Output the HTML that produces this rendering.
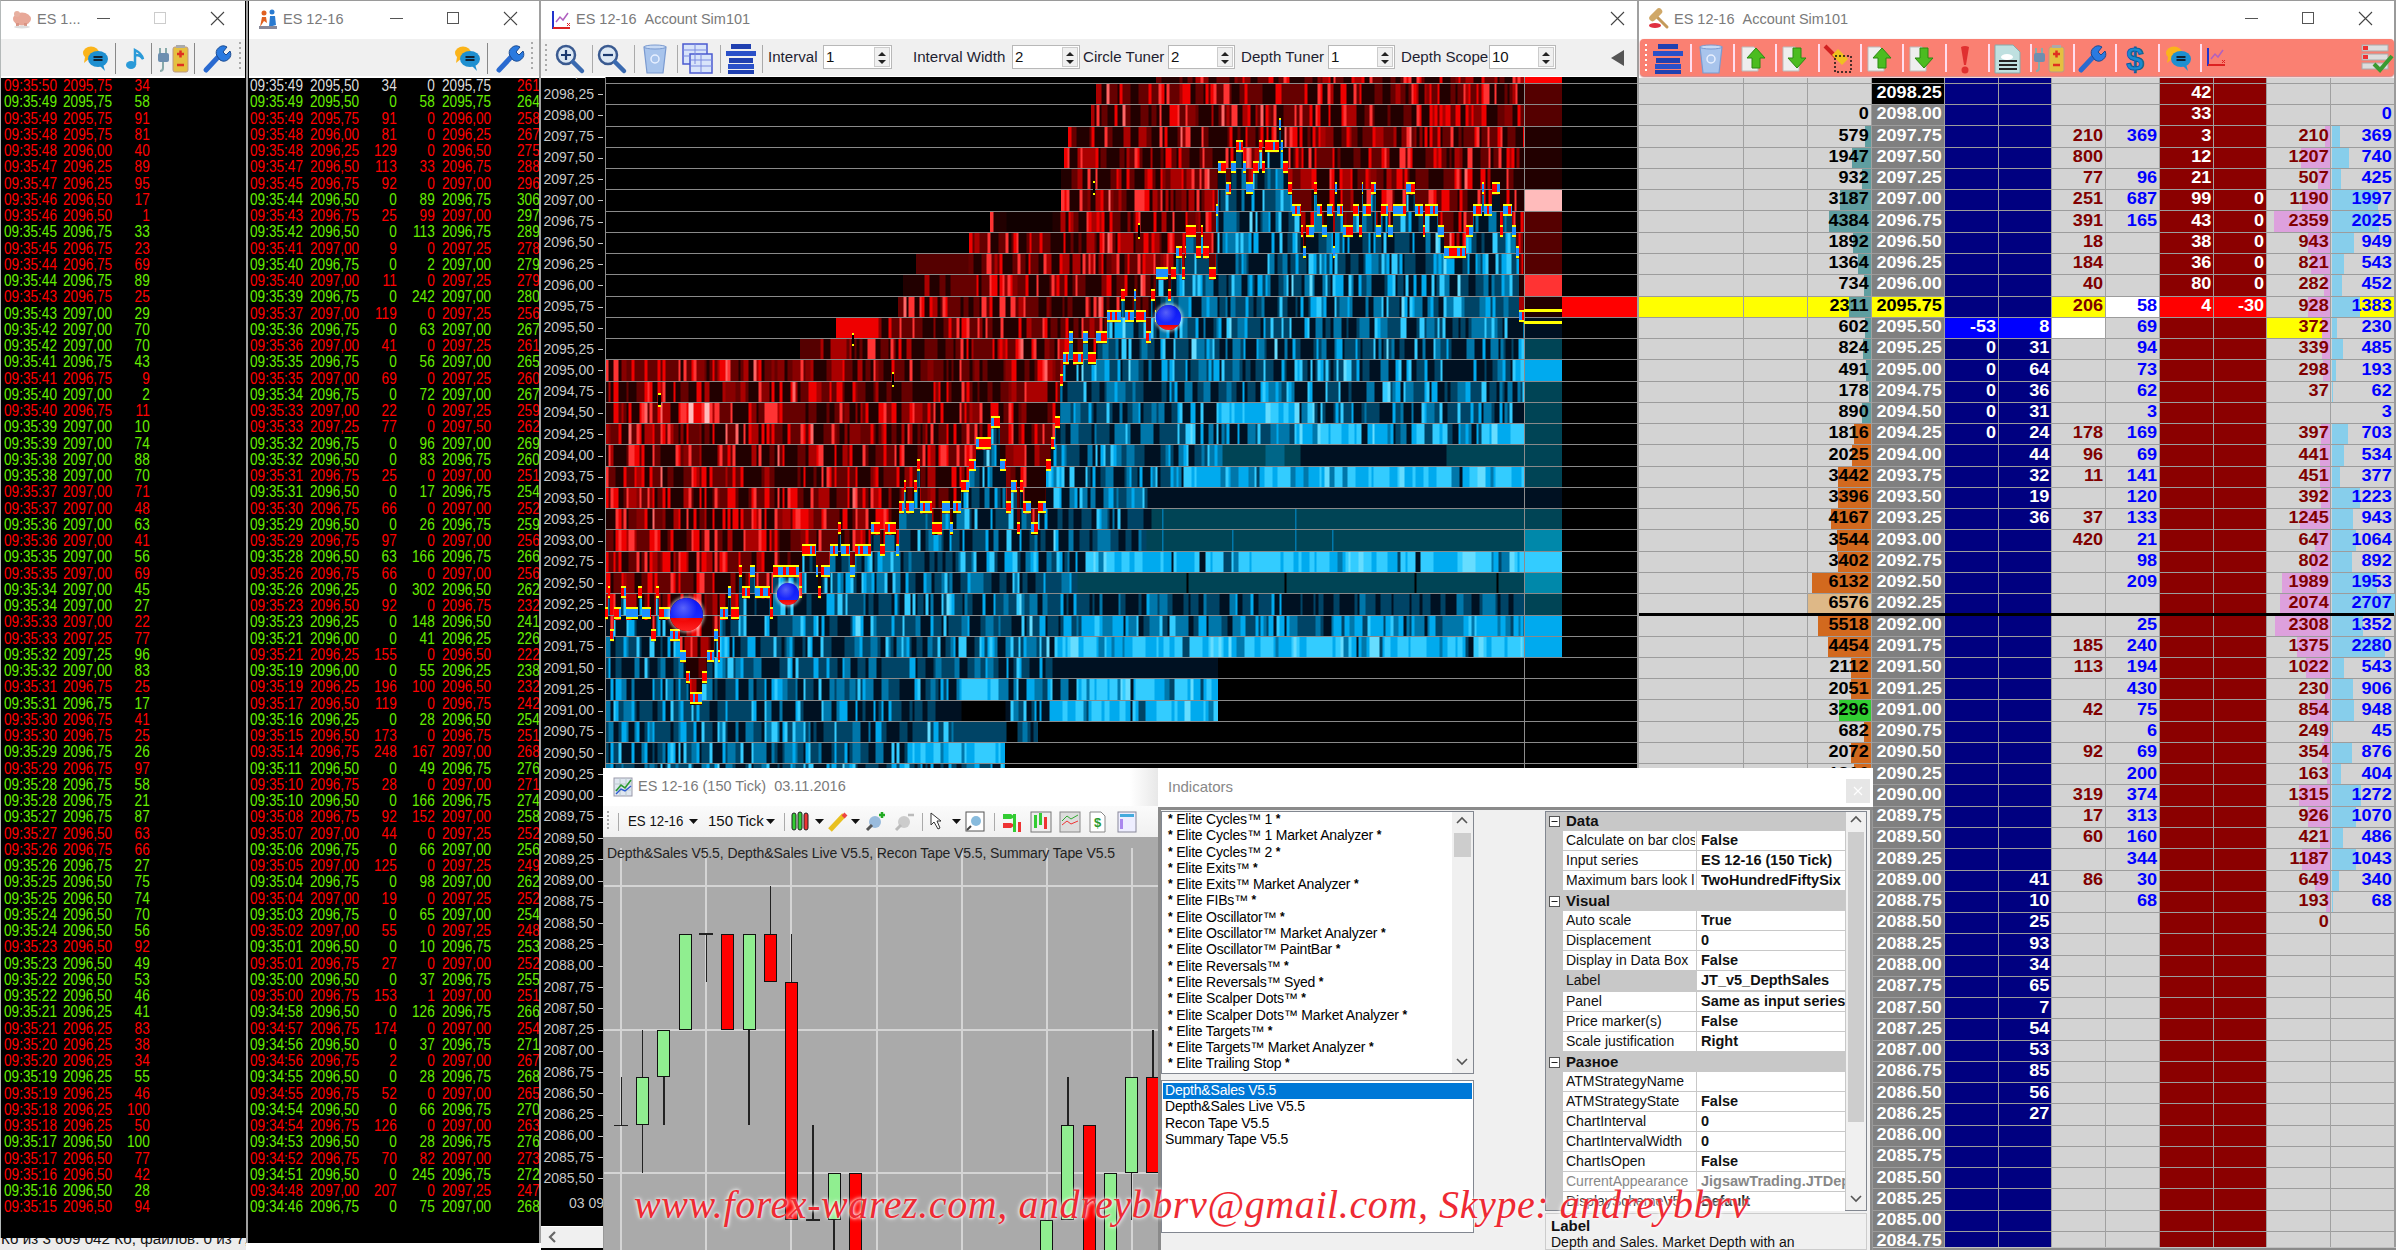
<!DOCTYPE html><html><head><meta charset="utf-8"><style>*{margin:0;padding:0;box-sizing:border-box}
body{width:2396px;height:1250px;position:relative;overflow:hidden;background:#fff;font-family:"Liberation Sans",sans-serif}
.a{position:absolute;overflow:hidden}
.t{position:absolute;white-space:pre}
.ts{font-size:16px;line-height:16.248px;transform:scaleX(.85)}
.R{color:#f00}.G{color:#6e0}.W{color:#ddd}
.tt{font-size:14.5px;color:#7a7a7a;position:absolute;white-space:pre}
.dm{font-weight:bold;font-size:17.4px;line-height:21.26px;text-align:right;position:absolute;white-space:pre}
</style></head><body><div class="a" style="left:0px;top:0px;width:246px;height:1238px;background:#000;border-left:1px solid #b4b9b9;border-top:1px solid #9a9a9a"></div>
<div class="a" style="left:1px;top:1px;width:244px;height:38px;background:#fff"></div>
<svg class="a" style="left:11px;top:9px" width="22" height="20" viewBox="0 0 22 20"><ellipse cx="11" cy="10" rx="9" ry="6.5" fill="#e8a898"/><ellipse cx="6" cy="5" rx="3" ry="3" fill="#e7b0a0"/><rect x="5" y="14" width="3" height="4" fill="#d99484"/><rect x="13" y="14" width="3" height="4" fill="#d99484"/><ellipse cx="11" cy="18" rx="8" ry="1.5" fill="#ddd"/></svg>
<div class="tt" style="left:37px;top:11px">ES 1...</div>
<div class="a" style="left:97px;top:18px;width:13px;height:1px;background:#555"></div>
<div class="a" style="left:154px;top:12px;width:12px;height:12px;border:1px solid #ccc"></div>
<svg class="a" style="left:210px;top:11px" width="15" height="15"><path d="M1 1L14 14M14 1L1 14" stroke="#444" stroke-width="1.1"/></svg>
<div class="a" style="left:1px;top:39px;width:244px;height:38.5px;background:#f0f0f0;border-bottom:2px solid #fff"></div>
<svg class="a" style="left:79px;top:44px" width="32" height="30" viewBox="0 0 32 30"><ellipse cx="12" cy="9" rx="8" ry="6.5" fill="#fbb41a"/><path d="M6 13L5 19L11 14Z" fill="#fbb41a"/><ellipse cx="19" cy="15" rx="10" ry="8" fill="#1e8fd0"/><path d="M20 21L26 27L24 20Z" fill="#1e8fd0"/><rect x="14.5" y="12" width="9" height="2" fill="#123"/><rect x="14.5" y="15" width="9" height="2" fill="#123"/></svg>
<div class="a" style="left:115px;top:43px;width:1px;height:31px;background:#888"></div>
<svg class="a" style="left:123px;top:46px" width="22" height="26" viewBox="0 0 22 26"><ellipse cx="8" cy="19" rx="5" ry="4" fill="#2a9ad8"/><path d="M12 19V4C16 6 19 8 20 13C18 10 15 9 13 9" stroke="#2a9ad8" stroke-width="2.5" fill="none"/></svg>
<div class="a" style="left:151px;top:43px;width:1px;height:31px;background:#888"></div>
<svg class="a" style="left:157px;top:44px" width="36" height="30" viewBox="0 0 36 30"><path d="M3 4V10M9 4V10" stroke="#8aa" stroke-width="2"/><rect x="1" y="9" width="11" height="9" rx="2" fill="#6d8fb0"/><path d="M6 18V24Q6 27 3 27" stroke="#8aa" stroke-width="2" fill="none"/><rect x="16" y="3" width="15" height="25" rx="2" fill="#e5c040" stroke="#b98" stroke-width="1"/><rect x="19" y="1" width="9" height="3" fill="#aaa"/><path d="M20 10H27M23.5 6.5V13.5" stroke="#e03020" stroke-width="2.5"/><path d="M20 21H27" stroke="#e03020" stroke-width="2.5"/></svg>
<div class="a" style="left:194px;top:43px;width:1px;height:31px;background:#888"></div>
<svg class="a" style="left:202px;top:44px" width="30" height="30" viewBox="0 0 30 30"><path d="M4 26L18 11" stroke="#2a6ad0" stroke-width="5" stroke-linecap="round"/><path d="M15 12A7 7 0 0 1 25 3L21 8L24 11L28 7A7 7 0 0 1 18 16Z" fill="#2a7ae0" stroke="#1a4a90" stroke-width="1"/></svg>
<div class="a" style="left:239px;top:42px;width:2px;height:2px;background:#aaa"></div><div class="a" style="left:239px;top:47px;width:2px;height:2px;background:#aaa"></div><div class="a" style="left:239px;top:52px;width:2px;height:2px;background:#aaa"></div><div class="a" style="left:239px;top:57px;width:2px;height:2px;background:#aaa"></div><div class="a" style="left:239px;top:62px;width:2px;height:2px;background:#aaa"></div><div class="a" style="left:239px;top:67px;width:2px;height:2px;background:#aaa"></div>
<div class="t ts" style="left:4px;top:78.0px;transform-origin:0 0"><span class="R">09:35:50</span><br><span class="G">09:35:49</span><br><span class="R">09:35:49</span><br><span class="R">09:35:48</span><br><span class="R">09:35:48</span><br><span class="R">09:35:47</span><br><span class="R">09:35:47</span><br><span class="R">09:35:46</span><br><span class="R">09:35:46</span><br><span class="G">09:35:45</span><br><span class="R">09:35:45</span><br><span class="R">09:35:44</span><br><span class="G">09:35:44</span><br><span class="R">09:35:43</span><br><span class="G">09:35:43</span><br><span class="G">09:35:42</span><br><span class="G">09:35:42</span><br><span class="G">09:35:41</span><br><span class="R">09:35:41</span><br><span class="G">09:35:40</span><br><span class="R">09:35:40</span><br><span class="G">09:35:39</span><br><span class="G">09:35:39</span><br><span class="G">09:35:38</span><br><span class="G">09:35:38</span><br><span class="R">09:35:37</span><br><span class="R">09:35:37</span><br><span class="G">09:35:36</span><br><span class="R">09:35:36</span><br><span class="G">09:35:35</span><br><span class="R">09:35:35</span><br><span class="G">09:35:34</span><br><span class="G">09:35:34</span><br><span class="R">09:35:33</span><br><span class="R">09:35:33</span><br><span class="G">09:35:32</span><br><span class="G">09:35:32</span><br><span class="R">09:35:31</span><br><span class="G">09:35:31</span><br><span class="R">09:35:30</span><br><span class="R">09:35:30</span><br><span class="G">09:35:29</span><br><span class="R">09:35:29</span><br><span class="G">09:35:28</span><br><span class="G">09:35:28</span><br><span class="G">09:35:27</span><br><span class="R">09:35:27</span><br><span class="R">09:35:26</span><br><span class="G">09:35:26</span><br><span class="G">09:35:25</span><br><span class="G">09:35:25</span><br><span class="G">09:35:24</span><br><span class="G">09:35:24</span><br><span class="R">09:35:23</span><br><span class="G">09:35:23</span><br><span class="G">09:35:22</span><br><span class="G">09:35:22</span><br><span class="G">09:35:21</span><br><span class="R">09:35:21</span><br><span class="R">09:35:20</span><br><span class="R">09:35:20</span><br><span class="G">09:35:19</span><br><span class="R">09:35:19</span><br><span class="R">09:35:18</span><br><span class="R">09:35:18</span><br><span class="G">09:35:17</span><br><span class="R">09:35:17</span><br><span class="R">09:35:16</span><br><span class="G">09:35:16</span><br><span class="R">09:35:15</span></div>
<div class="t ts" style="left:63px;top:78.0px;transform-origin:0 0"><span class="R">2095,75</span><br><span class="G">2095,75</span><br><span class="R">2095,75</span><br><span class="R">2095,75</span><br><span class="R">2096,00</span><br><span class="R">2096,25</span><br><span class="R">2096,25</span><br><span class="R">2096,50</span><br><span class="R">2096,50</span><br><span class="G">2096,75</span><br><span class="R">2096,75</span><br><span class="R">2096,75</span><br><span class="G">2096,75</span><br><span class="R">2096,75</span><br><span class="G">2097,00</span><br><span class="G">2097,00</span><br><span class="G">2097,00</span><br><span class="G">2096,75</span><br><span class="R">2096,75</span><br><span class="G">2097,00</span><br><span class="R">2096,75</span><br><span class="G">2097,00</span><br><span class="G">2097,00</span><br><span class="G">2097,00</span><br><span class="G">2097,00</span><br><span class="R">2097,00</span><br><span class="R">2097,00</span><br><span class="G">2097,00</span><br><span class="R">2097,00</span><br><span class="G">2097,00</span><br><span class="R">2097,00</span><br><span class="G">2097,00</span><br><span class="G">2097,00</span><br><span class="R">2097,00</span><br><span class="R">2097,25</span><br><span class="G">2097,25</span><br><span class="G">2097,00</span><br><span class="R">2096,75</span><br><span class="G">2096,75</span><br><span class="R">2096,75</span><br><span class="R">2096,75</span><br><span class="G">2096,75</span><br><span class="R">2096,75</span><br><span class="G">2096,75</span><br><span class="G">2096,75</span><br><span class="G">2096,75</span><br><span class="R">2096,50</span><br><span class="R">2096,75</span><br><span class="G">2096,75</span><br><span class="G">2096,50</span><br><span class="G">2096,50</span><br><span class="G">2096,50</span><br><span class="G">2096,50</span><br><span class="R">2096,50</span><br><span class="G">2096,50</span><br><span class="G">2096,50</span><br><span class="G">2096,50</span><br><span class="G">2096,25</span><br><span class="R">2096,25</span><br><span class="R">2096,25</span><br><span class="R">2096,25</span><br><span class="G">2096,25</span><br><span class="R">2096,25</span><br><span class="R">2096,25</span><br><span class="R">2096,25</span><br><span class="G">2096,50</span><br><span class="R">2096,50</span><br><span class="R">2096,50</span><br><span class="G">2096,50</span><br><span class="R">2096,50</span></div>
<div class="t ts" style="right:2246px;top:78.0px;text-align:right;transform-origin:100% 0"><span class="R">34</span><br><span class="G">58</span><br><span class="R">91</span><br><span class="R">81</span><br><span class="R">40</span><br><span class="R">89</span><br><span class="R">95</span><br><span class="R">17</span><br><span class="R">1</span><br><span class="G">33</span><br><span class="R">23</span><br><span class="R">69</span><br><span class="G">89</span><br><span class="R">25</span><br><span class="G">29</span><br><span class="G">70</span><br><span class="G">70</span><br><span class="G">43</span><br><span class="R">9</span><br><span class="G">2</span><br><span class="R">11</span><br><span class="G">10</span><br><span class="G">74</span><br><span class="G">88</span><br><span class="G">70</span><br><span class="R">71</span><br><span class="R">48</span><br><span class="G">63</span><br><span class="R">41</span><br><span class="G">56</span><br><span class="R">69</span><br><span class="G">45</span><br><span class="G">27</span><br><span class="R">22</span><br><span class="R">77</span><br><span class="G">96</span><br><span class="G">83</span><br><span class="R">25</span><br><span class="G">17</span><br><span class="R">41</span><br><span class="R">25</span><br><span class="G">26</span><br><span class="R">97</span><br><span class="G">58</span><br><span class="G">21</span><br><span class="G">87</span><br><span class="R">63</span><br><span class="R">66</span><br><span class="G">27</span><br><span class="G">75</span><br><span class="G">74</span><br><span class="G">70</span><br><span class="G">56</span><br><span class="R">92</span><br><span class="G">49</span><br><span class="G">53</span><br><span class="G">46</span><br><span class="G">41</span><br><span class="R">83</span><br><span class="R">38</span><br><span class="R">34</span><br><span class="G">55</span><br><span class="R">46</span><br><span class="R">100</span><br><span class="R">50</span><br><span class="G">100</span><br><span class="R">77</span><br><span class="R">42</span><br><span class="G">28</span><br><span class="R">94</span></div>
<div class="a" style="left:0;top:1238px;width:246px;height:12px;background:#ececec"><div class="t" style="left:1px;top:-8.4px;font-size:15.2px;color:#111">Кб из 3 609 042 Кб; файлов: 0 из 7,</div></div>
<div class="a" style="left:246px;top:0px;width:295px;height:1243px;background:#000;border-left:2px solid #a0a0a0;border-top:1px solid #9a9a9a;border-right:2px solid #a0a0a0"></div>
<div class="a" style="left:249px;top:1px;width:290px;height:38px;background:#fff"></div>
<svg class="a" style="left:257px;top:9px" width="22" height="22" viewBox="0 0 22 22"><circle cx="7" cy="4" r="2.5" fill="#e06020"/><path d="M3 18L5 8L9 8L10 14L7 12Z" fill="#e06020"/><circle cx="15" cy="3" r="2.5" fill="#2a7ad0"/><path d="M12 18L13 7L18 7L19 16Z" fill="#2a7ad0"/><rect x="2" y="17" width="18" height="3" fill="#889"/></svg>
<div class="tt" style="left:283px;top:11px">ES 12-16</div>
<div class="a" style="left:390px;top:18px;width:13px;height:1px;background:#555"></div>
<div class="a" style="left:447px;top:12px;width:12px;height:12px;border:1px solid #555"></div>
<svg class="a" style="left:503px;top:11px" width="15" height="15"><path d="M1 1L14 14M14 1L1 14" stroke="#444" stroke-width="1.1"/></svg>
<div class="a" style="left:249px;top:39px;width:290px;height:38.5px;background:#f0f0f0;border-bottom:2px solid #fff"></div>
<svg class="a" style="left:451px;top:44px" width="32" height="30" viewBox="0 0 32 30"><ellipse cx="12" cy="9" rx="8" ry="6.5" fill="#fbb41a"/><path d="M6 13L5 19L11 14Z" fill="#fbb41a"/><ellipse cx="19" cy="15" rx="10" ry="8" fill="#1e8fd0"/><path d="M20 21L26 27L24 20Z" fill="#1e8fd0"/><rect x="14.5" y="12" width="9" height="2" fill="#123"/><rect x="14.5" y="15" width="9" height="2" fill="#123"/></svg>
<div class="a" style="left:487px;top:43px;width:1px;height:31px;background:#888"></div>
<svg class="a" style="left:495px;top:44px" width="30" height="30" viewBox="0 0 30 30"><path d="M4 26L18 11" stroke="#2a6ad0" stroke-width="5" stroke-linecap="round"/><path d="M15 12A7 7 0 0 1 25 3L21 8L24 11L28 7A7 7 0 0 1 18 16Z" fill="#2a7ae0" stroke="#1a4a90" stroke-width="1"/></svg>
<div class="a" style="left:531px;top:42px;width:2px;height:2px;background:#aaa"></div><div class="a" style="left:531px;top:47px;width:2px;height:2px;background:#aaa"></div><div class="a" style="left:531px;top:52px;width:2px;height:2px;background:#aaa"></div><div class="a" style="left:531px;top:57px;width:2px;height:2px;background:#aaa"></div><div class="a" style="left:531px;top:62px;width:2px;height:2px;background:#aaa"></div><div class="a" style="left:531px;top:67px;width:2px;height:2px;background:#aaa"></div>
<div class="a" style="left:249px;top:77px;width:290px;height:1166px">
<div class="t ts" style="left:1px;top:1.0px;transform-origin:0 0"><span class="W">09:35:49</span><br><span class="G">09:35:49</span><br><span class="R">09:35:49</span><br><span class="R">09:35:48</span><br><span class="R">09:35:48</span><br><span class="R">09:35:47</span><br><span class="R">09:35:45</span><br><span class="G">09:35:44</span><br><span class="R">09:35:43</span><br><span class="G">09:35:42</span><br><span class="R">09:35:41</span><br><span class="G">09:35:40</span><br><span class="R">09:35:40</span><br><span class="G">09:35:39</span><br><span class="R">09:35:37</span><br><span class="G">09:35:36</span><br><span class="R">09:35:36</span><br><span class="G">09:35:35</span><br><span class="R">09:35:35</span><br><span class="G">09:35:34</span><br><span class="R">09:35:33</span><br><span class="R">09:35:33</span><br><span class="G">09:35:32</span><br><span class="G">09:35:32</span><br><span class="R">09:35:31</span><br><span class="G">09:35:31</span><br><span class="R">09:35:30</span><br><span class="G">09:35:29</span><br><span class="R">09:35:29</span><br><span class="G">09:35:28</span><br><span class="R">09:35:26</span><br><span class="G">09:35:26</span><br><span class="R">09:35:23</span><br><span class="G">09:35:23</span><br><span class="G">09:35:21</span><br><span class="R">09:35:21</span><br><span class="G">09:35:19</span><br><span class="R">09:35:19</span><br><span class="R">09:35:17</span><br><span class="G">09:35:16</span><br><span class="R">09:35:15</span><br><span class="R">09:35:14</span><br><span class="G">09:35:11</span><br><span class="R">09:35:10</span><br><span class="G">09:35:10</span><br><span class="R">09:35:08</span><br><span class="R">09:35:07</span><br><span class="G">09:35:06</span><br><span class="R">09:35:05</span><br><span class="G">09:35:04</span><br><span class="R">09:35:04</span><br><span class="G">09:35:03</span><br><span class="R">09:35:02</span><br><span class="G">09:35:01</span><br><span class="R">09:35:01</span><br><span class="G">09:35:00</span><br><span class="R">09:35:00</span><br><span class="G">09:34:58</span><br><span class="R">09:34:57</span><br><span class="G">09:34:56</span><br><span class="R">09:34:56</span><br><span class="G">09:34:55</span><br><span class="R">09:34:55</span><br><span class="G">09:34:54</span><br><span class="R">09:34:54</span><br><span class="G">09:34:53</span><br><span class="R">09:34:52</span><br><span class="G">09:34:51</span><br><span class="R">09:34:48</span><br><span class="G">09:34:46</span></div>
<div class="t ts" style="left:61px;top:1.0px;transform-origin:0 0"><span class="W">2095,50</span><br><span class="G">2095,50</span><br><span class="R">2095,75</span><br><span class="R">2096,00</span><br><span class="R">2096,25</span><br><span class="R">2096,50</span><br><span class="R">2096,75</span><br><span class="G">2096,50</span><br><span class="R">2096,75</span><br><span class="G">2096,50</span><br><span class="R">2097,00</span><br><span class="G">2096,75</span><br><span class="R">2097,00</span><br><span class="G">2096,75</span><br><span class="R">2097,00</span><br><span class="G">2096,75</span><br><span class="R">2097,00</span><br><span class="G">2096,75</span><br><span class="R">2097,00</span><br><span class="G">2096,75</span><br><span class="R">2097,00</span><br><span class="R">2097,25</span><br><span class="G">2096,75</span><br><span class="G">2096,50</span><br><span class="R">2096,75</span><br><span class="G">2096,50</span><br><span class="R">2096,75</span><br><span class="G">2096,50</span><br><span class="R">2096,75</span><br><span class="G">2096,50</span><br><span class="R">2096,75</span><br><span class="G">2096,25</span><br><span class="R">2096,50</span><br><span class="G">2096,25</span><br><span class="G">2096,00</span><br><span class="R">2096,25</span><br><span class="G">2096,00</span><br><span class="R">2096,25</span><br><span class="R">2096,50</span><br><span class="G">2096,25</span><br><span class="R">2096,50</span><br><span class="R">2096,75</span><br><span class="G">2096,50</span><br><span class="R">2096,75</span><br><span class="G">2096,50</span><br><span class="R">2096,75</span><br><span class="R">2097,00</span><br><span class="G">2096,75</span><br><span class="R">2097,00</span><br><span class="G">2096,75</span><br><span class="R">2097,00</span><br><span class="G">2096,75</span><br><span class="R">2097,00</span><br><span class="G">2096,50</span><br><span class="R">2096,75</span><br><span class="G">2096,50</span><br><span class="R">2096,75</span><br><span class="G">2096,50</span><br><span class="R">2096,75</span><br><span class="G">2096,50</span><br><span class="R">2096,75</span><br><span class="G">2096,50</span><br><span class="R">2096,75</span><br><span class="G">2096,50</span><br><span class="R">2096,75</span><br><span class="G">2096,50</span><br><span class="R">2096,75</span><br><span class="G">2096,50</span><br><span class="R">2097,00</span><br><span class="G">2096,75</span></div>
<div class="t ts" style="right:142px;top:1.0px;text-align:right;transform-origin:100% 0"><span class="W">34</span><br><span class="G">0</span><br><span class="R">91</span><br><span class="R">81</span><br><span class="R">129</span><br><span class="R">113</span><br><span class="R">92</span><br><span class="G">0</span><br><span class="R">25</span><br><span class="G">0</span><br><span class="R">9</span><br><span class="G">0</span><br><span class="R">11</span><br><span class="G">0</span><br><span class="R">119</span><br><span class="G">0</span><br><span class="R">41</span><br><span class="G">0</span><br><span class="R">69</span><br><span class="G">0</span><br><span class="R">22</span><br><span class="R">77</span><br><span class="G">0</span><br><span class="G">0</span><br><span class="R">25</span><br><span class="G">0</span><br><span class="R">66</span><br><span class="G">0</span><br><span class="R">97</span><br><span class="G">63</span><br><span class="R">66</span><br><span class="G">0</span><br><span class="R">92</span><br><span class="G">0</span><br><span class="G">0</span><br><span class="R">155</span><br><span class="G">0</span><br><span class="R">196</span><br><span class="R">119</span><br><span class="G">0</span><br><span class="R">173</span><br><span class="R">248</span><br><span class="G">0</span><br><span class="R">28</span><br><span class="G">0</span><br><span class="R">92</span><br><span class="R">44</span><br><span class="G">0</span><br><span class="R">125</span><br><span class="G">0</span><br><span class="R">19</span><br><span class="G">0</span><br><span class="R">55</span><br><span class="G">0</span><br><span class="R">27</span><br><span class="G">0</span><br><span class="R">153</span><br><span class="G">0</span><br><span class="R">174</span><br><span class="G">0</span><br><span class="R">2</span><br><span class="G">0</span><br><span class="R">52</span><br><span class="G">0</span><br><span class="R">126</span><br><span class="G">0</span><br><span class="R">70</span><br><span class="G">0</span><br><span class="R">207</span><br><span class="G">0</span></div>
<div class="t ts" style="right:104.5px;top:1.0px;text-align:right;transform-origin:100% 0"><span class="W">0</span><br><span class="G">58</span><br><span class="R">0</span><br><span class="R">0</span><br><span class="R">0</span><br><span class="R">33</span><br><span class="R">0</span><br><span class="G">89</span><br><span class="R">99</span><br><span class="G">113</span><br><span class="R">0</span><br><span class="G">2</span><br><span class="R">0</span><br><span class="G">242</span><br><span class="R">0</span><br><span class="G">63</span><br><span class="R">0</span><br><span class="G">56</span><br><span class="R">0</span><br><span class="G">72</span><br><span class="R">0</span><br><span class="R">0</span><br><span class="G">96</span><br><span class="G">83</span><br><span class="R">0</span><br><span class="G">17</span><br><span class="R">0</span><br><span class="G">26</span><br><span class="R">0</span><br><span class="G">166</span><br><span class="R">0</span><br><span class="G">302</span><br><span class="R">0</span><br><span class="G">148</span><br><span class="G">41</span><br><span class="R">0</span><br><span class="G">55</span><br><span class="R">100</span><br><span class="R">0</span><br><span class="G">28</span><br><span class="R">0</span><br><span class="R">167</span><br><span class="G">49</span><br><span class="R">0</span><br><span class="G">166</span><br><span class="R">152</span><br><span class="R">0</span><br><span class="G">66</span><br><span class="R">0</span><br><span class="G">98</span><br><span class="R">0</span><br><span class="G">65</span><br><span class="R">0</span><br><span class="G">10</span><br><span class="R">0</span><br><span class="G">37</span><br><span class="R">1</span><br><span class="G">126</span><br><span class="R">0</span><br><span class="G">37</span><br><span class="R">0</span><br><span class="G">28</span><br><span class="R">0</span><br><span class="G">66</span><br><span class="R">0</span><br><span class="G">28</span><br><span class="R">82</span><br><span class="G">245</span><br><span class="R">0</span><br><span class="G">75</span></div>
<div class="t ts" style="left:193px;top:1.0px;transform-origin:0 0"><span class="W">2095,75</span><br><span class="G">2095,75</span><br><span class="R">2096,00</span><br><span class="R">2096,25</span><br><span class="R">2096,50</span><br><span class="R">2096,75</span><br><span class="R">2097,00</span><br><span class="G">2096,75</span><br><span class="R">2097,00</span><br><span class="G">2096,75</span><br><span class="R">2097,25</span><br><span class="G">2097,00</span><br><span class="R">2097,25</span><br><span class="G">2097,00</span><br><span class="R">2097,25</span><br><span class="G">2097,00</span><br><span class="R">2097,25</span><br><span class="G">2097,00</span><br><span class="R">2097,25</span><br><span class="G">2097,00</span><br><span class="R">2097,25</span><br><span class="R">2097,50</span><br><span class="G">2097,00</span><br><span class="G">2096,75</span><br><span class="R">2097,00</span><br><span class="G">2096,75</span><br><span class="R">2097,00</span><br><span class="G">2096,75</span><br><span class="R">2097,00</span><br><span class="G">2096,75</span><br><span class="R">2097,00</span><br><span class="G">2096,50</span><br><span class="R">2096,75</span><br><span class="G">2096,50</span><br><span class="G">2096,25</span><br><span class="R">2096,50</span><br><span class="G">2096,25</span><br><span class="R">2096,50</span><br><span class="R">2096,75</span><br><span class="G">2096,50</span><br><span class="R">2096,75</span><br><span class="R">2097,00</span><br><span class="G">2096,75</span><br><span class="R">2097,00</span><br><span class="G">2096,75</span><br><span class="R">2097,00</span><br><span class="R">2097,25</span><br><span class="G">2097,00</span><br><span class="R">2097,25</span><br><span class="G">2097,00</span><br><span class="R">2097,25</span><br><span class="G">2097,00</span><br><span class="R">2097,25</span><br><span class="G">2096,75</span><br><span class="R">2097,00</span><br><span class="G">2096,75</span><br><span class="R">2097,00</span><br><span class="G">2096,75</span><br><span class="R">2097,00</span><br><span class="G">2096,75</span><br><span class="R">2097,00</span><br><span class="G">2096,75</span><br><span class="R">2097,00</span><br><span class="G">2096,75</span><br><span class="R">2097,00</span><br><span class="G">2096,75</span><br><span class="R">2097,00</span><br><span class="G">2096,75</span><br><span class="R">2097,25</span><br><span class="G">2097,00</span></div>
<div class="t ts" style="left:268px;top:1.0px;transform-origin:0 0"><span class="R">261</span><br><span class="G">264</span><br><span class="R">258</span><br><span class="R">267</span><br><span class="R">275</span><br><span class="R">288</span><br><span class="R">296</span><br><span class="G">306</span><br><span class="G">297</span><br><span class="G">289</span><br><span class="R">278</span><br><span class="G">279</span><br><span class="R">279</span><br><span class="G">280</span><br><span class="R">256</span><br><span class="G">267</span><br><span class="R">261</span><br><span class="G">265</span><br><span class="R">260</span><br><span class="G">267</span><br><span class="R">259</span><br><span class="R">262</span><br><span class="G">269</span><br><span class="G">260</span><br><span class="R">251</span><br><span class="G">254</span><br><span class="R">252</span><br><span class="G">259</span><br><span class="R">256</span><br><span class="G">266</span><br><span class="R">256</span><br><span class="G">262</span><br><span class="R">232</span><br><span class="G">241</span><br><span class="G">226</span><br><span class="R">222</span><br><span class="G">238</span><br><span class="R">232</span><br><span class="R">242</span><br><span class="G">254</span><br><span class="R">251</span><br><span class="R">268</span><br><span class="G">276</span><br><span class="R">271</span><br><span class="G">274</span><br><span class="G">258</span><br><span class="R">252</span><br><span class="G">256</span><br><span class="R">249</span><br><span class="G">262</span><br><span class="R">252</span><br><span class="G">254</span><br><span class="R">248</span><br><span class="G">253</span><br><span class="R">252</span><br><span class="G">255</span><br><span class="R">251</span><br><span class="G">266</span><br><span class="R">254</span><br><span class="G">271</span><br><span class="R">267</span><br><span class="G">268</span><br><span class="R">265</span><br><span class="G">270</span><br><span class="R">263</span><br><span class="G">276</span><br><span class="R">273</span><br><span class="G">272</span><br><span class="R">247</span><br><span class="G">268</span></div>
</div>
<div class="a" style="left:541px;top:0px;width:1097px;height:1250px;background:#000;border-top:1px solid #9a9a9a"></div>
<div class="a" style="left:541px;top:1px;width:1096px;height:38px;background:#fff"></div>
<svg class="a" style="left:550px;top:9px" width="22" height="22" viewBox="0 0 22 22"><path d="M3 2V19H20" stroke="#2233cc" stroke-width="2" fill="none"/><path d="M3 19H20" stroke="#d22" stroke-width="2"/><path d="M6 13L10 8L13 11L18 4" stroke="#b060c0" stroke-width="1.5" fill="none"/><path d="M17 14l3 3M20 14l-3 3" stroke="#d22" stroke-width="1"/></svg>
<div class="tt" style="left:576px;top:11px">ES 12-16&nbsp;&nbsp;Account Sim101</div>
<svg class="a" style="left:1610px;top:11px" width="15" height="15"><path d="M1 1L14 14M14 1L1 14" stroke="#444" stroke-width="1.1"/></svg>
<div class="a" style="left:541px;top:39px;width:1096px;height:38.5px;background:#f0f0f0;border-bottom:2px solid #fff"></div>
<div class="a" style="left:545px;top:44px;width:2px;height:2px;background:#aaa"></div><div class="a" style="left:545px;top:49px;width:2px;height:2px;background:#aaa"></div><div class="a" style="left:545px;top:54px;width:2px;height:2px;background:#aaa"></div><div class="a" style="left:545px;top:59px;width:2px;height:2px;background:#aaa"></div><div class="a" style="left:545px;top:64px;width:2px;height:2px;background:#aaa"></div><div class="a" style="left:545px;top:69px;width:2px;height:2px;background:#aaa"></div><svg class="a" style="left:554px;top:43px" width="32" height="32" viewBox="0 0 32 32"><circle cx="12" cy="12" r="9" fill="#dce8f4" stroke="#3a5a90" stroke-width="2.5"/><path d="M7 12H17M12 7V17" stroke="#1a3a70" stroke-width="2.2"/><path d="M19 19L28 28" stroke="#3a6ab0" stroke-width="4.5" stroke-linecap="round"/></svg><div class="a" style="left:592px;top:45px;width:1px;height:28px;background:#aaa"></div><svg class="a" style="left:596px;top:43px" width="32" height="32" viewBox="0 0 32 32"><circle cx="12" cy="12" r="9" fill="#dce8f4" stroke="#3a5a90" stroke-width="2.5"/><path d="M7 12H17" stroke="#1a3a70" stroke-width="2.2"/><path d="M19 19L28 28" stroke="#3a6ab0" stroke-width="4.5" stroke-linecap="round"/></svg><div class="a" style="left:634px;top:45px;width:1px;height:28px;background:#aaa"></div><svg class="a" style="left:641px;top:43px" width="28" height="32" viewBox="0 0 28 32"><path d="M3 4H25L22 30H6Z" fill="#a8c4ec" stroke="#7a9ad0" stroke-width="1.2"/><ellipse cx="14" cy="4" rx="11" ry="2" fill="#c8daf4" stroke="#7a9ad0"/><circle cx="14" cy="16" r="4" fill="none" stroke="#e8f0ff" stroke-width="1.5"/></svg><div class="a" style="left:677px;top:45px;width:1px;height:28px;background:#aaa"></div><svg class="a" style="left:682px;top:43px" width="32" height="32" viewBox="0 0 32 32"><rect x="1" y="1" width="24" height="20" fill="#d8e4fa" stroke="#4a5ad0" stroke-width="1.5"/><rect x="8" y="11" width="22" height="19" fill="#d8e4fa" stroke="#4a5ad0" stroke-width="1.5"/><path d="M1 7H25M1 13H8M9 17H30M9 23H30M13 1V21M19 11V30" stroke="#7a8ae0" stroke-width="1"/></svg><div class="a" style="left:720px;top:45px;width:1px;height:28px;background:#aaa"></div><svg class="a" style="left:725px;top:43px" width="32" height="32" viewBox="0 0 32 32"><rect x="6" y="1" width="20" height="5" fill="#2040b0"/><rect x="1" y="8" width="30" height="5" fill="#2a50c8"/><rect x="4" y="15" width="24" height="5" fill="#2040b0"/><rect x="3" y="21" width="26" height="5" fill="#2a50c8"/><rect x="3" y="27" width="26" height="4" fill="#2040b0"/></svg><div class="a" style="left:762px;top:45px;width:1px;height:28px;background:#aaa"></div><div class="t" style="left:768px;top:48px;font-size:15.1px;color:#1e1e30">Interval</div><div class="a" style="left:823px;top:45px;width:69px;height:24px;background:#fff;border:1px solid #b8b8b8"></div><div class="t" style="left:826px;top:48px;font-size:15px;color:#111">1</div><div class="a" style="left:874px;top:47px;width:16px;height:20px;background:#f0f0f0;border:1px solid #ccc"></div><svg class="a" style="left:877px;top:50px" width="10" height="16" viewBox="0 0 10 16"><path d="M1 6L5 2L9 6Z" fill="#222"/><path d="M1 10L5 14L9 10Z" fill="#222"/></svg><div class="t" style="left:913px;top:48px;font-size:15.1px;color:#1e1e30">Interval Width</div><div class="a" style="left:1012px;top:45px;width:68px;height:24px;background:#fff;border:1px solid #b8b8b8"></div><div class="t" style="left:1015px;top:48px;font-size:15px;color:#111">2</div><div class="a" style="left:1062px;top:47px;width:16px;height:20px;background:#f0f0f0;border:1px solid #ccc"></div><svg class="a" style="left:1065px;top:50px" width="10" height="16" viewBox="0 0 10 16"><path d="M1 6L5 2L9 6Z" fill="#222"/><path d="M1 10L5 14L9 10Z" fill="#222"/></svg><div class="t" style="left:1083px;top:48px;font-size:15.1px;color:#1e1e30">Circle Tuner</div><div class="a" style="left:1168px;top:45px;width:67px;height:24px;background:#fff;border:1px solid #b8b8b8"></div><div class="t" style="left:1171px;top:48px;font-size:15px;color:#111">2</div><div class="a" style="left:1217px;top:47px;width:16px;height:20px;background:#f0f0f0;border:1px solid #ccc"></div><svg class="a" style="left:1220px;top:50px" width="10" height="16" viewBox="0 0 10 16"><path d="M1 6L5 2L9 6Z" fill="#222"/><path d="M1 10L5 14L9 10Z" fill="#222"/></svg><div class="t" style="left:1241px;top:48px;font-size:15.1px;color:#1e1e30">Depth Tuner</div><div class="a" style="left:1328px;top:45px;width:67px;height:24px;background:#fff;border:1px solid #b8b8b8"></div><div class="t" style="left:1331px;top:48px;font-size:15px;color:#111">1</div><div class="a" style="left:1377px;top:47px;width:16px;height:20px;background:#f0f0f0;border:1px solid #ccc"></div><svg class="a" style="left:1380px;top:50px" width="10" height="16" viewBox="0 0 10 16"><path d="M1 6L5 2L9 6Z" fill="#222"/><path d="M1 10L5 14L9 10Z" fill="#222"/></svg><div class="t" style="left:1401px;top:48px;font-size:15.1px;color:#1e1e30">Depth Scope</div><div class="a" style="left:1489px;top:45px;width:67px;height:24px;background:#fff;border:1px solid #b8b8b8"></div><div class="t" style="left:1492px;top:48px;font-size:15px;color:#111">10</div><div class="a" style="left:1538px;top:47px;width:16px;height:20px;background:#f0f0f0;border:1px solid #ccc"></div><svg class="a" style="left:1541px;top:50px" width="10" height="16" viewBox="0 0 10 16"><path d="M1 6L5 2L9 6Z" fill="#222"/><path d="M1 10L5 14L9 10Z" fill="#222"/></svg><svg class="a" style="left:1610px;top:49px" width="16" height="18" viewBox="0 0 16 18"><path d="M14 1V17L1 9Z" fill="#555"/></svg>
<div class="a" style="left:541px;top:77px;width:62px;height:1148px"><div class="t" style="right:9px;top:-12.7px;font-size:14px;color:#c8c8c8">2098,50</div><div class="a" style="left:57px;top:-4.2px;width:7px;height:1px;background:#c8c8c8"></div><div class="t" style="right:9px;top:8.5px;font-size:14px;color:#c8c8c8">2098,25</div><div class="a" style="left:57px;top:17.0px;width:7px;height:1px;background:#c8c8c8"></div><div class="t" style="right:9px;top:29.8px;font-size:14px;color:#c8c8c8">2098,00</div><div class="a" style="left:57px;top:38.3px;width:7px;height:1px;background:#c8c8c8"></div><div class="t" style="right:9px;top:51.1px;font-size:14px;color:#c8c8c8">2097,75</div><div class="a" style="left:57px;top:59.6px;width:7px;height:1px;background:#c8c8c8"></div><div class="t" style="right:9px;top:72.3px;font-size:14px;color:#c8c8c8">2097,50</div><div class="a" style="left:57px;top:80.8px;width:7px;height:1px;background:#c8c8c8"></div><div class="t" style="right:9px;top:93.6px;font-size:14px;color:#c8c8c8">2097,25</div><div class="a" style="left:57px;top:102.1px;width:7px;height:1px;background:#c8c8c8"></div><div class="t" style="right:9px;top:114.8px;font-size:14px;color:#c8c8c8">2097,00</div><div class="a" style="left:57px;top:123.3px;width:7px;height:1px;background:#c8c8c8"></div><div class="t" style="right:9px;top:136.1px;font-size:14px;color:#c8c8c8">2096,75</div><div class="a" style="left:57px;top:144.6px;width:7px;height:1px;background:#c8c8c8"></div><div class="t" style="right:9px;top:157.4px;font-size:14px;color:#c8c8c8">2096,50</div><div class="a" style="left:57px;top:165.9px;width:7px;height:1px;background:#c8c8c8"></div><div class="t" style="right:9px;top:178.6px;font-size:14px;color:#c8c8c8">2096,25</div><div class="a" style="left:57px;top:187.1px;width:7px;height:1px;background:#c8c8c8"></div><div class="t" style="right:9px;top:199.9px;font-size:14px;color:#c8c8c8">2096,00</div><div class="a" style="left:57px;top:208.4px;width:7px;height:1px;background:#c8c8c8"></div><div class="t" style="right:9px;top:221.1px;font-size:14px;color:#c8c8c8">2095,75</div><div class="a" style="left:57px;top:229.6px;width:7px;height:1px;background:#c8c8c8"></div><div class="t" style="right:9px;top:242.4px;font-size:14px;color:#c8c8c8">2095,50</div><div class="a" style="left:57px;top:250.9px;width:7px;height:1px;background:#c8c8c8"></div><div class="t" style="right:9px;top:263.6px;font-size:14px;color:#c8c8c8">2095,25</div><div class="a" style="left:57px;top:272.1px;width:7px;height:1px;background:#c8c8c8"></div><div class="t" style="right:9px;top:284.9px;font-size:14px;color:#c8c8c8">2095,00</div><div class="a" style="left:57px;top:293.4px;width:7px;height:1px;background:#c8c8c8"></div><div class="t" style="right:9px;top:306.2px;font-size:14px;color:#c8c8c8">2094,75</div><div class="a" style="left:57px;top:314.7px;width:7px;height:1px;background:#c8c8c8"></div><div class="t" style="right:9px;top:327.4px;font-size:14px;color:#c8c8c8">2094,50</div><div class="a" style="left:57px;top:335.9px;width:7px;height:1px;background:#c8c8c8"></div><div class="t" style="right:9px;top:348.7px;font-size:14px;color:#c8c8c8">2094,25</div><div class="a" style="left:57px;top:357.2px;width:7px;height:1px;background:#c8c8c8"></div><div class="t" style="right:9px;top:370.0px;font-size:14px;color:#c8c8c8">2094,00</div><div class="a" style="left:57px;top:378.5px;width:7px;height:1px;background:#c8c8c8"></div><div class="t" style="right:9px;top:391.2px;font-size:14px;color:#c8c8c8">2093,75</div><div class="a" style="left:57px;top:399.7px;width:7px;height:1px;background:#c8c8c8"></div><div class="t" style="right:9px;top:412.5px;font-size:14px;color:#c8c8c8">2093,50</div><div class="a" style="left:57px;top:421.0px;width:7px;height:1px;background:#c8c8c8"></div><div class="t" style="right:9px;top:433.7px;font-size:14px;color:#c8c8c8">2093,25</div><div class="a" style="left:57px;top:442.2px;width:7px;height:1px;background:#c8c8c8"></div><div class="t" style="right:9px;top:455.0px;font-size:14px;color:#c8c8c8">2093,00</div><div class="a" style="left:57px;top:463.5px;width:7px;height:1px;background:#c8c8c8"></div><div class="t" style="right:9px;top:476.2px;font-size:14px;color:#c8c8c8">2092,75</div><div class="a" style="left:57px;top:484.8px;width:7px;height:1px;background:#c8c8c8"></div><div class="t" style="right:9px;top:497.5px;font-size:14px;color:#c8c8c8">2092,50</div><div class="a" style="left:57px;top:506.0px;width:7px;height:1px;background:#c8c8c8"></div><div class="t" style="right:9px;top:518.8px;font-size:14px;color:#c8c8c8">2092,25</div><div class="a" style="left:57px;top:527.3px;width:7px;height:1px;background:#c8c8c8"></div><div class="t" style="right:9px;top:540.0px;font-size:14px;color:#c8c8c8">2092,00</div><div class="a" style="left:57px;top:548.5px;width:7px;height:1px;background:#c8c8c8"></div><div class="t" style="right:9px;top:561.3px;font-size:14px;color:#c8c8c8">2091,75</div><div class="a" style="left:57px;top:569.8px;width:7px;height:1px;background:#c8c8c8"></div><div class="t" style="right:9px;top:582.6px;font-size:14px;color:#c8c8c8">2091,50</div><div class="a" style="left:57px;top:591.1px;width:7px;height:1px;background:#c8c8c8"></div><div class="t" style="right:9px;top:603.8px;font-size:14px;color:#c8c8c8">2091,25</div><div class="a" style="left:57px;top:612.3px;width:7px;height:1px;background:#c8c8c8"></div><div class="t" style="right:9px;top:625.1px;font-size:14px;color:#c8c8c8">2091,00</div><div class="a" style="left:57px;top:633.6px;width:7px;height:1px;background:#c8c8c8"></div><div class="t" style="right:9px;top:646.3px;font-size:14px;color:#c8c8c8">2090,75</div><div class="a" style="left:57px;top:654.8px;width:7px;height:1px;background:#c8c8c8"></div><div class="t" style="right:9px;top:667.6px;font-size:14px;color:#c8c8c8">2090,50</div><div class="a" style="left:57px;top:676.1px;width:7px;height:1px;background:#c8c8c8"></div><div class="t" style="right:9px;top:688.9px;font-size:14px;color:#c8c8c8">2090,25</div><div class="a" style="left:57px;top:697.4px;width:7px;height:1px;background:#c8c8c8"></div><div class="t" style="right:9px;top:710.1px;font-size:14px;color:#c8c8c8">2090,00</div><div class="a" style="left:57px;top:718.6px;width:7px;height:1px;background:#c8c8c8"></div><div class="t" style="right:9px;top:731.4px;font-size:14px;color:#c8c8c8">2089,75</div><div class="a" style="left:57px;top:739.9px;width:7px;height:1px;background:#c8c8c8"></div><div class="t" style="right:9px;top:752.6px;font-size:14px;color:#c8c8c8">2089,50</div><div class="a" style="left:57px;top:761.1px;width:7px;height:1px;background:#c8c8c8"></div><div class="t" style="right:9px;top:773.9px;font-size:14px;color:#c8c8c8">2089,25</div><div class="a" style="left:57px;top:782.4px;width:7px;height:1px;background:#c8c8c8"></div><div class="t" style="right:9px;top:795.1px;font-size:14px;color:#c8c8c8">2089,00</div><div class="a" style="left:57px;top:803.6px;width:7px;height:1px;background:#c8c8c8"></div><div class="t" style="right:9px;top:816.4px;font-size:14px;color:#c8c8c8">2088,75</div><div class="a" style="left:57px;top:824.9px;width:7px;height:1px;background:#c8c8c8"></div><div class="t" style="right:9px;top:837.7px;font-size:14px;color:#c8c8c8">2088,50</div><div class="a" style="left:57px;top:846.2px;width:7px;height:1px;background:#c8c8c8"></div><div class="t" style="right:9px;top:858.9px;font-size:14px;color:#c8c8c8">2088,25</div><div class="a" style="left:57px;top:867.4px;width:7px;height:1px;background:#c8c8c8"></div><div class="t" style="right:9px;top:880.2px;font-size:14px;color:#c8c8c8">2088,00</div><div class="a" style="left:57px;top:888.7px;width:7px;height:1px;background:#c8c8c8"></div><div class="t" style="right:9px;top:901.5px;font-size:14px;color:#c8c8c8">2087,75</div><div class="a" style="left:57px;top:910.0px;width:7px;height:1px;background:#c8c8c8"></div><div class="t" style="right:9px;top:922.7px;font-size:14px;color:#c8c8c8">2087,50</div><div class="a" style="left:57px;top:931.2px;width:7px;height:1px;background:#c8c8c8"></div><div class="t" style="right:9px;top:944.0px;font-size:14px;color:#c8c8c8">2087,25</div><div class="a" style="left:57px;top:952.5px;width:7px;height:1px;background:#c8c8c8"></div><div class="t" style="right:9px;top:965.2px;font-size:14px;color:#c8c8c8">2087,00</div><div class="a" style="left:57px;top:973.7px;width:7px;height:1px;background:#c8c8c8"></div><div class="t" style="right:9px;top:986.5px;font-size:14px;color:#c8c8c8">2086,75</div><div class="a" style="left:57px;top:995.0px;width:7px;height:1px;background:#c8c8c8"></div><div class="t" style="right:9px;top:1007.8px;font-size:14px;color:#c8c8c8">2086,50</div><div class="a" style="left:57px;top:1016.3px;width:7px;height:1px;background:#c8c8c8"></div><div class="t" style="right:9px;top:1029.0px;font-size:14px;color:#c8c8c8">2086,25</div><div class="a" style="left:57px;top:1037.5px;width:7px;height:1px;background:#c8c8c8"></div><div class="t" style="right:9px;top:1050.3px;font-size:14px;color:#c8c8c8">2086,00</div><div class="a" style="left:57px;top:1058.8px;width:7px;height:1px;background:#c8c8c8"></div><div class="t" style="right:9px;top:1071.5px;font-size:14px;color:#c8c8c8">2085,75</div><div class="a" style="left:57px;top:1080.0px;width:7px;height:1px;background:#c8c8c8"></div><div class="t" style="right:9px;top:1092.8px;font-size:14px;color:#c8c8c8">2085,50</div><div class="a" style="left:57px;top:1101.3px;width:7px;height:1px;background:#c8c8c8"></div><div class="t" style="left:28px;top:1118px;font-size:14px;color:#c8c8c8">03 09</div></div>
<div class="a" style="left:541px;top:1226px;width:62px;height:22px;background:#f0f0f0;border-top:1px solid #fff"></div>
<svg class="a" style="left:546px;top:1229px" width="12" height="16"><path d="M9 3L4 8L9 13" stroke="#666" stroke-width="2.2" fill="none"/></svg>
<div class="a" style="left:605px;top:77px;width:1032px;height:693px;background:#000"><div class="a" style="left:551px;top:-14.86px;width:368px;height:21.86px;background:linear-gradient(90deg,#600 0px 5px,#200 6px 23px,#600 24px 26px,#200 27px 31px,#600 32px 36px,#200 37px 39px,#a00 40px 44px,#f33 45px 47px,#800 48px 52px,#200 53px 60px,#600 61px 73px,#200 74px 78px,#800 79px 81px,#600 82px 86px,#e00 87px 88px,#800 89px 94px,#200 95px 101px,#600 102px 112px,#e00 113px 117px,#200 118px 122px,#600 123px 127px,#f33 128px 130px,#e00 131px 133px,#200 134px 148px,#600 149px 156px,#200 157px 161px,#800 162px 164px,#600 165px 166px,#a00 167px 172px,#e00 173px 174px,#200 175px 177px,#f33 178px 179px,#600 180px 187px,#200 188px 195px,#e00 196px 198px,#a00 199px 205px,#e00 206px 208px,#200 209px 213px,#f33 214px 216px,#600 217px 226px,#200 227px 234px,#600 235px 239px,#200 240px 244px,#600 245px 247px,#f33 248px 250px,#e00 251px 252px,#f33 253px 255px,#200 256px 260px,#f33 261px 263px,#e00 264px 265px,#600 266px 268px,#200 269px 283px,#e00 284px 286px,#200 287px 294px,#600 295px 299px,#800 300px 302px,#e00 303px 304px,#600 305px 309px,#a00 310px 317px,#200 318px 325px,#e00 326px 328px,#600 329px 338px,#a00 339px 341px,#200 342px 343px,#600 344px 348px,#200 349px 356px,#f33 357px 359px,#a00 360px 361px,#f33 362px 364px,#a00 365px 368px)"></div><div class="a" style="left:491px;top:6.40px;width:428px;height:21.86px;background:linear-gradient(90deg,#a00 0px 5px,#200 6px 10px,#f66 11px 13px,#600 14px 21px,#200 22px 23px,#e00 24px 26px,#600 27px 34px,#200 35px 42px,#600 43px 52px,#e00 53px 55px,#600 56px 62px,#f33 63px 65px,#e00 66px 68px,#200 69px 70px,#f33 71px 73px,#600 74px 83px,#a00 84px 86px,#e00 87px 94px,#200 95px 99px,#600 100px 107px,#200 108px 109px,#e00 110px 112px,#600 113px 114px,#e00 115px 117px,#f33 118px 120px,#600 121px 127px,#f33 128px 133px,#600 134px 135px,#200 136px 143px,#600 144px 148px,#e00 149px 151px,#600 152px 166px,#200 167px 179px,#e00 180px 185px,#600 186px 208px,#e00 209px 211px,#200 212px 221px,#f33 222px 224px,#e00 225px 226px,#200 227px 231px,#f33 232px 234px,#a00 235px 237px,#200 238px 244px,#e00 245px 250px,#200 251px 257px,#f33 258px 260px,#600 261px 263px,#e00 264px 265px,#200 266px 278px,#600 279px 286px,#200 287px 294px,#600 295px 299px,#a00 300px 304px,#600 305px 309px,#200 310px 312px,#600 313px 315px,#f33 316px 317px,#e00 318px 320px,#a00 321px 322px,#200 323px 328px,#a00 329px 330px,#800 331px 333px,#e00 334px 335px,#600 336px 341px,#e00 342px 343px,#200 344px 354px,#600 355px 359px,#200 360px 361px,#600 362px 367px,#f33 368px 369px,#a00 370px 372px,#e00 373px 374px,#600 375px 380px,#e00 381px 382px,#600 383px 385px,#e00 386px 387px,#f33 388px 393px,#200 394px 398px,#f33 399px 400px,#200 401px 408px,#600 409px 411px,#200 412px 413px,#600 414px 416px,#a00 417px 419px,#f33 420px 421px,#200 422px 428px)"></div><div class="a" style="left:486px;top:27.66px;width:433px;height:21.86px;background:linear-gradient(90deg,#a00 0px 3px,#200 4px 5px,#f33 6px 8px,#200 9px 10px,#600 11px 16px,#200 17px 23px,#e00 24px 26px,#200 27px 31px,#f66 32px 34px,#600 35px 39px,#200 40px 49px,#600 50px 57px,#200 58px 60px,#600 61px 65px,#200 66px 68px,#f33 69px 70px,#200 71px 78px,#e00 79px 86px,#f33 87px 88px,#600 89px 94px,#f33 95px 96px,#800 97px 104px,#600 105px 107px,#200 108px 120px,#a00 121px 122px,#200 123px 127px,#600 128px 130px,#f66 131px 133px,#600 134px 135px,#a00 136px 138px,#600 139px 140px,#f33 141px 146px,#200 147px 151px,#a00 152px 156px,#e00 157px 159px,#200 160px 164px,#a00 165px 166px,#600 167px 169px,#f66 170px 172px,#200 173px 174px,#e00 175px 177px,#800 178px 179px,#600 180px 182px,#f33 183px 185px,#200 186px 192px,#600 193px 203px,#f33 204px 205px,#600 206px 208px,#f33 209px 211px,#600 212px 218px,#e00 219px 221px,#200 222px 224px,#f33 225px 226px,#e00 227px 229px,#200 230px 237px,#e00 238px 239px,#200 240px 250px,#e00 251px 252px,#f33 253px 255px,#a00 256px 265px,#200 266px 273px,#600 274px 278px,#f33 279px 281px,#600 282px 283px,#200 284px 296px,#600 297px 299px,#200 300px 312px,#600 313px 320px,#200 321px 325px,#f33 326px 328px,#e00 329px 330px,#200 331px 338px,#e00 339px 341px,#a00 342px 343px,#e00 344px 346px,#600 347px 348px,#e00 349px 351px,#a00 352px 354px,#e00 355px 359px,#600 360px 364px,#e00 365px 369px,#200 370px 374px,#e00 375px 377px,#800 378px 380px,#e00 381px 382px,#800 383px 390px,#e00 391px 395px,#200 396px 406px,#600 407px 413px,#800 414px 421px,#200 422px 426px,#e00 427px 429px,#600 430px 433px)"></div><div class="a" style="left:463px;top:48.92px;width:456px;height:21.86px;background:linear-gradient(90deg,#e00 0px 3px,#600 4px 8px,#200 9px 21px,#600 22px 23px,#e00 24px 26px,#200 27px 36px,#f33 37px 39px,#600 40px 44px,#200 45px 55px,#a00 56px 62px,#200 63px 70px,#a00 71px 78px,#600 79px 83px,#200 84px 91px,#f33 92px 94px,#200 95px 96px,#e00 97px 99px,#200 100px 109px,#600 110px 112px,#f66 113px 114px,#800 115px 117px,#f33 118px 122px,#200 123px 133px,#f33 134px 135px,#600 136px 140px,#200 141px 159px,#600 160px 161px,#e00 162px 164px,#200 165px 169px,#600 170px 172px,#200 173px 177px,#e00 178px 179px,#600 180px 187px,#200 188px 190px,#600 191px 192px,#e00 193px 195px,#200 196px 198px,#e00 199px 200px,#200 201px 203px,#e00 204px 205px,#f33 206px 208px,#200 209px 216px,#f66 217px 218px,#800 219px 221px,#f33 222px 224px,#e00 225px 229px,#200 230px 231px,#e00 232px 234px,#200 235px 239px,#600 240px 242px,#200 243px 244px,#e00 245px 247px,#600 248px 250px,#e00 251px 252px,#a00 253px 257px,#800 258px 265px,#200 266px 273px,#600 274px 278px,#e00 279px 281px,#a00 282px 283px,#600 284px 289px,#200 290px 294px,#600 295px 304px,#e00 305px 307px,#a00 308px 315px,#600 316px 325px,#a00 326px 328px,#200 329px 333px,#800 334px 338px,#f33 339px 341px,#f66 342px 343px,#600 344px 346px,#800 347px 348px,#200 349px 351px,#800 352px 354px,#200 355px 356px,#e00 357px 359px,#200 360px 361px,#e00 362px 364px,#600 365px 369px,#e00 370px 372px,#200 373px 374px,#600 375px 382px,#f33 383px 385px,#200 386px 390px,#600 391px 393px,#200 394px 395px,#600 396px 406px,#e00 407px 408px,#f33 409px 411px,#200 412px 413px,#600 414px 419px,#f33 420px 421px,#600 422px 429px,#e00 430px 432px,#f33 433px 434px,#200 435px 439px,#600 440px 447px,#200 448px 455px,#e00 455px 456px)"></div><div class="a" style="left:459px;top:70.18px;width:460px;height:21.86px;background:linear-gradient(90deg,#e00 0px 3px,#f33 4px 5px,#200 6px 13px,#a00 14px 16px,#f33 17px 18px,#a00 19px 31px,#e00 32px 34px,#200 35px 36px,#600 37px 42px,#200 43px 55px,#600 56px 60px,#200 61px 62px,#a00 63px 65px,#600 66px 70px,#f33 71px 73px,#e00 74px 75px,#600 76px 78px,#200 79px 86px,#a00 87px 88px,#200 89px 96px,#600 97px 99px,#200 100px 101px,#e00 102px 107px,#600 108px 112px,#200 113px 114px,#e00 115px 117px,#600 118px 125px,#200 126px 135px,#600 136px 138px,#f33 139px 140px,#600 141px 148px,#200 149px 161px,#f33 162px 164px,#200 165px 166px,#e00 167px 169px,#200 170px 174px,#f33 175px 179px,#e00 180px 182px,#f66 183px 185px,#f33 186px 187px,#600 188px 190px,#a00 191px 195px,#e00 196px 198px,#200 199px 205px,#e00 206px 211px,#f33 212px 213px,#600 214px 216px,#200 217px 224px,#f33 225px 226px,#200 227px 229px,#600 230px 231px,#e00 232px 234px,#600 235px 237px,#e00 238px 239px,#200 240px 244px,#f33 245px 247px,#200 248px 250px,#e00 251px 252px,#600 253px 268px,#e00 269px 270px,#200 271px 273px,#600 274px 276px,#200 277px 289px,#600 290px 296px,#200 297px 304px,#e00 305px 307px,#600 308px 317px,#e00 318px 320px,#f33 321px 322px,#a00 323px 325px,#200 326px 335px,#f33 336px 341px,#600 342px 343px,#f33 344px 346px,#e00 347px 348px,#200 349px 361px,#600 362px 369px,#e00 370px 372px,#a00 373px 374px,#e00 375px 377px,#600 378px 382px,#200 383px 385px,#600 386px 387px,#200 388px 390px,#a00 391px 395px,#800 396px 398px,#200 399px 403px,#f33 404px 408px,#200 409px 416px,#600 417px 424px,#f33 425px 426px,#200 427px 429px,#600 430px 434px,#f33 435px 437px,#200 438px 442px,#e00 443px 445px,#a00 446px 447px,#e00 448px 450px,#200 451px 452px,#800 453px 455px,#200 456px 460px)"></div><div class="a" style="left:456px;top:91.44px;width:463px;height:21.86px;background:linear-gradient(90deg,#200 0px 10px,#600 11px 16px,#a00 17px 21px,#200 22px 26px,#f33 27px 29px,#200 30px 34px,#f33 35px 36px,#200 37px 49px,#600 50px 55px,#e00 56px 57px,#a00 58px 60px,#200 61px 65px,#e00 66px 68px,#600 69px 73px,#200 74px 83px,#a00 84px 86px,#e00 87px 91px,#600 92px 94px,#200 95px 99px,#e00 100px 101px,#800 102px 104px,#600 105px 109px,#a00 110px 120px,#e00 121px 122px,#600 123px 125px,#a00 126px 130px,#f33 131px 133px,#600 134px 138px,#f33 139px 140px,#600 141px 143px,#f33 144px 146px,#f66 147px 148px,#600 149px 156px,#200 157px 159px,#600 160px 169px,#200 170px 172px,#800 173px 179px,#e00 180px 182px,#600 183px 187px,#a00 188px 190px,#e00 191px 192px,#200 193px 208px,#e00 209px 216px,#600 217px 218px,#f33 219px 221px,#600 222px 224px,#a00 225px 231px,#600 232px 239px,#a00 240px 250px,#e00 251px 255px,#200 256px 268px,#f33 269px 270px,#e00 271px 273px,#200 274px 278px,#e00 279px 281px,#a00 282px 289px,#e00 290px 291px,#200 292px 296px,#600 297px 304px,#e00 305px 307px,#a00 308px 309px,#800 310px 315px,#600 316px 322px,#200 323px 325px,#a00 326px 330px,#600 331px 335px,#e00 336px 341px,#600 342px 343px,#e00 344px 346px,#600 347px 348px,#200 349px 354px,#600 355px 367px,#200 368px 382px,#600 383px 393px,#e00 394px 395px,#f33 396px 398px,#a00 399px 400px,#200 401px 403px,#f66 404px 406px,#e00 407px 411px,#200 412px 419px,#e00 420px 424px,#200 425px 426px,#a00 427px 429px,#200 430px 445px,#f33 446px 447px,#600 448px 452px,#200 453px 463px,#600 463px 463px)"></div><div class="a" style="left:456px;top:112.70px;width:195px;height:21.86px;background:linear-gradient(90deg,#f33 0px 3px,#e00 4px 5px,#f33 6px 8px,#200 9px 18px,#f33 19px 21px,#600 22px 26px,#800 27px 29px,#200 30px 34px,#a00 35px 39px,#e00 40px 42px,#600 43px 47px,#f66 48px 49px,#800 50px 52px,#600 53px 57px,#a00 58px 60px,#600 61px 65px,#200 66px 73px,#f33 74px 83px,#e00 84px 88px,#200 89px 91px,#a00 92px 96px,#600 97px 99px,#f33 100px 101px,#200 102px 104px,#a00 105px 107px,#200 108px 109px,#800 110px 112px,#200 113px 114px,#600 115px 120px,#800 121px 125px,#200 126px 127px,#a00 128px 133px,#200 134px 135px,#f33 136px 138px,#200 139px 140px,#600 141px 143px,#a00 144px 151px,#e00 152px 153px,#600 154px 156px,#f33 157px 159px,#200 160px 164px,#f33 165px 166px,#a00 167px 172px,#600 173px 177px,#e00 178px 179px,#200 180px 192px,#f33 193px 195px,#200 195px 195px)"></div><div class="a" style="left:680px;top:112.70px;width:239px;height:21.86px;background:linear-gradient(90deg,#800 0px 3px,#200 4px 5px,#600 6px 26px,#200 27px 44px,#e00 45px 49px,#200 50px 55px,#e00 56px 57px,#600 58px 65px,#a00 66px 68px,#200 69px 81px,#f33 82px 88px,#200 89px 96px,#e00 97px 101px,#f33 102px 107px,#600 108px 109px,#200 110px 117px,#f33 118px 120px,#e00 121px 122px,#200 123px 125px,#e00 126px 127px,#600 128px 143px,#f33 144px 148px,#e00 149px 151px,#600 152px 156px,#e00 157px 164px,#600 165px 172px,#200 173px 174px,#e00 175px 177px,#600 178px 182px,#200 183px 192px,#f33 193px 195px,#600 196px 198px,#e00 199px 200px,#200 201px 203px,#e00 204px 205px,#a00 206px 213px,#200 214px 221px,#e00 222px 224px,#200 225px 229px,#f33 230px 231px,#200 232px 239px)"></div><div class="a" style="left:385px;top:133.96px;width:231px;height:21.86px;background:linear-gradient(90deg,#f33 0px 3px,#200 4px 16px,#100 17px 62px,#200 63px 70px,#a00 71px 75px,#200 76px 78px,#e00 79px 80px,#a00 81px 83px,#600 84px 88px,#200 89px 96px,#f33 97px 98px,#e00 99px 101px,#a00 102px 106px,#e00 107px 109px,#a00 110px 111px,#e00 112px 114px,#200 115px 119px,#e00 120px 122px,#600 123px 130px,#200 131px 137px,#800 138px 140px,#200 141px 143px,#600 144px 145px,#e00 146px 148px,#f33 149px 150px,#200 151px 163px,#e00 164px 166px,#200 167px 171px,#a00 172px 176px,#200 177px 182px,#f33 183px 184px,#200 185px 195px,#e00 196px 197px,#600 198px 205px,#800 206px 208px,#a00 209px 210px,#200 211px 215px,#f33 216px 218px,#e00 219px 221px,#600 222px 228px,#200 229px 231px,#600 231px 231px)"></div><div class="a" style="left:684px;top:133.96px;width:235px;height:21.86px;background:linear-gradient(90deg,#f33 0px 3px,#600 4px 8px,#f33 9px 10px,#a00 11px 16px,#200 17px 21px,#e00 22px 26px,#a00 27px 29px,#800 30px 34px,#200 35px 39px,#a00 40px 47px,#600 48px 55px,#800 56px 57px,#600 58px 65px,#f33 66px 68px,#200 69px 78px,#e00 79px 81px,#a00 82px 88px,#200 89px 91px,#e00 92px 94px,#a00 95px 96px,#200 97px 99px,#f33 100px 101px,#200 102px 109px,#f66 110px 112px,#200 113px 127px,#e00 128px 133px,#600 134px 135px,#200 136px 143px,#600 144px 151px,#e00 152px 153px,#600 154px 164px,#200 165px 169px,#e00 170px 172px,#200 173px 174px,#f33 175px 177px,#600 178px 182px,#800 183px 190px,#600 191px 192px,#a00 193px 200px,#f33 201px 203px,#e00 204px 213px,#a00 214px 218px,#600 219px 221px,#a00 222px 224px,#f33 225px 226px,#200 227px 231px,#e00 232px 234px,#a00 234px 235px)"></div><div class="a" style="left:364px;top:155.22px;width:250px;height:21.86px;background:linear-gradient(90deg,#e00 0px 3px,#600 4px 5px,#a00 6px 10px,#600 11px 18px,#f33 19px 21px,#200 22px 29px,#600 30px 36px,#f33 37px 39px,#200 40px 42px,#600 43px 44px,#e00 45px 47px,#f33 48px 49px,#200 50px 57px,#600 58px 60px,#e00 61px 62px,#600 63px 70px,#e00 71px 73px,#600 74px 81px,#200 82px 94px,#e00 95px 96px,#200 97px 101px,#600 102px 104px,#200 105px 109px,#600 110px 112px,#200 113px 117px,#a00 118px 125px,#600 126px 127px,#200 128px 130px,#e00 131px 133px,#f33 134px 135px,#600 136px 138px,#f66 139px 140px,#f33 141px 143px,#600 144px 146px,#200 147px 148px,#e00 149px 151px,#a00 152px 164px,#200 165px 166px,#600 167px 174px,#e00 175px 179px,#600 180px 182px,#e00 183px 185px,#a00 186px 190px,#600 191px 192px,#200 193px 198px,#e00 199px 200px,#f33 201px 203px,#e00 204px 205px,#600 206px 213px,#e00 214px 216px,#600 217px 234px,#a00 235px 242px,#f33 243px 244px,#200 245px 247px,#e00 248px 250px,#200 250px 250px)"></div><div class="a" style="left:693px;top:155.22px;width:98px;height:21.86px;background:linear-gradient(90deg,#f33 0px 3px,#e00 4px 5px,#200 6px 8px,#a00 9px 13px,#f33 14px 16px,#a00 17px 23px,#200 24px 31px,#600 32px 34px,#200 35px 39px,#e00 40px 42px,#200 43px 49px,#a00 50px 57px,#e00 58px 62px,#200 63px 73px,#e00 74px 75px,#600 76px 78px,#800 79px 81px,#600 82px 88px,#200 89px 94px,#f33 95px 96px,#e00 97px 98px)"></div><div class="a" style="left:815px;top:155.22px;width:56px;height:21.86px;background:linear-gradient(90deg,#200 0px 3px,#600 4px 10px,#200 11px 13px,#600 14px 21px,#e00 22px 23px,#600 24px 29px,#f66 30px 31px,#e00 32px 34px,#200 35px 36px,#a00 37px 39px,#200 40px 42px,#e00 43px 44px,#f33 45px 47px,#600 48px 55px,#e00 55px 56px)"></div><div class="a" style="left:892px;top:155.22px;width:27px;height:21.86px;background:linear-gradient(90deg,#200 0px 3px,#e00 4px 5px,#a00 6px 8px,#200 9px 16px,#600 17px 21px,#e00 22px 23px,#800 24px 26px,#200 26px 27px)"></div><div class="a" style="left:311px;top:176.48px;width:303px;height:21.86px;background:linear-gradient(90deg,#500 0px 52px,#600 53px 57px,#200 58px 65px,#600 66px 70px,#f33 71px 75px,#600 76px 78px,#a00 79px 81px,#600 82px 83px,#e00 84px 86px,#200 87px 96px,#600 97px 101px,#f33 102px 104px,#600 105px 109px,#200 110px 112px,#e00 113px 114px,#600 115px 122px,#200 123px 127px,#f33 128px 130px,#a00 131px 135px,#200 136px 143px,#e00 144px 146px,#a00 147px 153px,#200 154px 156px,#a00 157px 164px,#200 165px 166px,#f33 167px 169px,#600 170px 172px,#f33 173px 174px,#a00 175px 177px,#f33 178px 179px,#200 180px 182px,#800 183px 185px,#e00 186px 187px,#200 188px 190px,#600 191px 195px,#800 196px 200px,#f33 201px 203px,#200 204px 208px,#600 209px 211px,#e00 212px 213px,#600 214px 221px,#f33 222px 224px,#600 225px 226px,#e00 227px 229px,#a00 230px 237px,#f33 238px 239px,#600 240px 244px,#800 245px 247px,#a00 248px 250px,#f33 251px 252px,#a00 253px 257px,#200 258px 265px,#a00 266px 268px,#200 269px 286px,#e00 287px 289px,#f33 290px 291px,#600 292px 299px,#e00 300px 303px)"></div><div class="a" style="left:695px;top:176.48px;width:9px;height:21.86px;background:linear-gradient(90deg,#e00 0px 3px,#200 4px 9px)"></div><div class="a" style="left:725px;top:176.48px;width:8px;height:21.86px;background:linear-gradient(90deg,#800 0px 5px,#600 6px 8px,#f33 8px 8px)"></div><div class="a" style="left:836px;top:176.48px;width:28px;height:21.86px;background:linear-gradient(90deg,#200 0px 5px,#f33 6px 8px,#e00 9px 10px,#a00 11px 16px,#600 17px 23px,#a00 24px 28px)"></div><div class="a" style="left:908px;top:176.48px;width:11px;height:21.86px;background:linear-gradient(90deg,#a00 0px 3px,#600 4px 8px,#e00 9px 10px,#600 10px 11px)"></div><div class="a" style="left:298px;top:197.74px;width:285px;height:21.86px;background:linear-gradient(90deg,#200 0px 21px,#a00 22px 26px,#200 27px 36px,#600 37px 42px,#200 43px 47px,#600 48px 73px,#e00 74px 75px,#200 76px 78px,#600 79px 86px,#f33 87px 88px,#e00 89px 94px,#200 95px 96px,#e00 97px 99px,#f33 100px 101px,#800 102px 104px,#f33 105px 107px,#e00 108px 109px,#800 110px 114px,#600 115px 122px,#e00 123px 125px,#200 126px 133px,#f33 134px 135px,#200 136px 146px,#600 147px 148px,#f33 149px 151px,#800 152px 153px,#e00 154px 156px,#600 157px 161px,#e00 162px 164px,#200 165px 169px,#600 170px 172px,#f33 173px 174px,#600 175px 182px,#200 183px 198px,#800 199px 203px,#e00 204px 208px,#200 209px 213px,#600 214px 221px,#e00 222px 224px,#200 225px 231px,#600 232px 234px,#200 235px 237px,#f66 238px 239px,#f33 240px 242px,#600 243px 247px,#200 248px 250px,#600 251px 255px,#e00 256px 260px,#f33 261px 263px,#200 264px 265px,#600 266px 270px,#200 271px 276px,#600 277px 285px)"></div><div class="a" style="left:601px;top:197.74px;width:13px;height:21.86px;background:linear-gradient(90deg,#e00 0px 3px,#a00 4px 5px,#e00 6px 8px,#200 9px 10px,#800 11px 13px)"></div><div class="a" style="left:911px;top:197.74px;width:8px;height:21.86px;background:linear-gradient(90deg,#200 0px 8px,#600 8px 8px)"></div><div class="a" style="left:293px;top:219.00px;width:276px;height:21.86px;background:linear-gradient(90deg,#600 0px 5px,#f66 6px 8px,#200 9px 10px,#f33 11px 16px,#200 17px 21px,#f33 22px 23px,#e00 24px 26px,#200 27px 31px,#e00 32px 34px,#a00 35px 39px,#200 40px 42px,#600 43px 44px,#f33 45px 47px,#e00 48px 49px,#600 50px 62px,#200 63px 65px,#600 66px 70px,#200 71px 75px,#600 76px 81px,#200 82px 83px,#f33 84px 88px,#600 89px 91px,#e00 92px 94px,#200 95px 101px,#f33 102px 107px,#200 108px 112px,#f33 113px 117px,#600 118px 120px,#a00 121px 125px,#f33 126px 127px,#600 128px 140px,#200 141px 148px,#800 149px 151px,#600 152px 153px,#200 154px 164px,#600 165px 166px,#200 167px 169px,#600 170px 174px,#200 175px 187px,#f33 188px 190px,#800 191px 192px,#200 193px 195px,#f33 196px 198px,#600 199px 200px,#f66 201px 203px,#f33 204px 205px,#200 206px 208px,#600 209px 211px,#200 212px 218px,#f33 219px 221px,#200 222px 234px,#600 235px 242px,#200 243px 244px,#600 245px 250px,#200 251px 257px,#600 258px 260px,#e00 261px 263px,#200 264px 265px,#e00 266px 268px,#f33 269px 270px,#e00 271px 276px,#200 276px 276px)"></div><div class="a" style="left:911px;top:219.00px;width:8px;height:21.86px;background:linear-gradient(90deg,#a00 0px 8px)"></div><div class="a" style="left:231px;top:240.26px;width:323px;height:21.86px;background:linear-gradient(90deg,#e00 0px 42px,#800 43px 45px,#200 46px 52px,#e00 53px 55px,#600 56px 63px,#f33 64px 65px,#600 66px 76px,#f33 77px 78px,#600 79px 86px,#200 87px 97px,#800 98px 99px,#200 100px 107px,#600 108px 112px,#e00 113px 115px,#600 116px 120px,#f33 121px 123px,#200 124px 125px,#e00 126px 130px,#f33 131px 133px,#600 134px 141px,#f33 142px 143px,#800 144px 146px,#200 147px 149px,#f33 150px 151px,#600 152px 156px,#200 157px 164px,#f33 165px 167px,#200 168px 182px,#e00 183px 185px,#200 186px 190px,#a00 191px 195px,#600 196px 206px,#f33 207px 208px,#e00 209px 211px,#200 212px 214px,#600 215px 221px,#200 222px 224px,#600 225px 229px,#e00 230px 232px,#200 233px 237px,#600 238px 242px,#200 243px 245px,#f33 246px 247px,#600 248px 253px,#a00 254px 258px,#600 259px 263px,#f33 264px 266px,#200 267px 268px,#600 269px 271px,#e00 272px 279px,#800 280px 281px,#e00 282px 286px,#200 287px 299px,#f33 300px 302px,#200 303px 307px,#a00 308px 310px,#600 311px 315px,#200 316px 318px,#600 319px 323px,#a00 323px 323px)"></div><div class="a" style="left:911px;top:240.26px;width:8px;height:21.86px;background:linear-gradient(90deg,#200 0px 5px,#e00 6px 8px,#f33 8px 8px)"></div><div class="a" style="left:195px;top:261.52px;width:310px;height:21.86px;background:linear-gradient(90deg,#500 0px 20px,#a00 21px 23px,#200 24px 30px,#a00 31px 46px,#600 47px 49px,#a00 50px 51px,#200 52px 54px,#600 55px 56px,#200 57px 59px,#600 60px 62px,#200 63px 67px,#f33 68px 75px,#200 76px 80px,#600 81px 88px,#200 89px 90px,#f33 91px 93px,#800 94px 95px,#200 96px 98px,#e00 99px 101px,#200 102px 106px,#a00 107px 111px,#200 112px 124px,#600 125px 137px,#200 138px 145px,#600 146px 153px,#200 154px 155px,#600 156px 160px,#f33 161px 163px,#200 164px 166px,#e00 167px 168px,#200 169px 171px,#a00 172px 173px,#600 174px 192px,#e00 193px 194px,#200 195px 197px,#a00 198px 199px,#e00 200px 202px,#a00 203px 205px,#e00 206px 207px,#600 208px 215px,#e00 216px 218px,#f33 219px 220px,#f66 221px 223px,#200 224px 231px,#e00 232px 233px,#f33 234px 236px,#200 237px 244px,#800 245px 249px,#600 250px 254px,#200 255px 257px,#f33 258px 259px,#a00 260px 264px,#e00 265px 270px,#200 271px 277px,#600 278px 285px,#200 286px 293px,#e00 294px 296px,#600 297px 310px)"></div><div class="a" style="left:538px;top:261.52px;width:11px;height:21.86px;background:linear-gradient(90deg,#800 0px 3px,#e00 4px 5px,#600 6px 10px,#e00 10px 11px)"></div><div class="a" style="left:0px;top:282.78px;width:494px;height:21.86px;background:linear-gradient(90deg,#f33 0px 3px,#200 4px 8px,#f33 9px 13px,#200 14px 16px,#800 17px 21px,#600 22px 26px,#e00 27px 29px,#600 30px 39px,#e00 40px 42px,#600 43px 52px,#e00 53px 55px,#600 56px 57px,#e00 58px 60px,#600 61px 73px,#f33 74px 75px,#200 76px 78px,#f33 79px 81px,#600 82px 86px,#e00 87px 88px,#f33 89px 91px,#800 92px 99px,#600 100px 101px,#200 102px 104px,#600 105px 107px,#e00 108px 109px,#600 110px 112px,#a00 113px 114px,#e00 115px 120px,#f66 121px 122px,#f33 123px 125px,#600 126px 133px,#200 134px 135px,#600 136px 138px,#a00 139px 143px,#200 144px 148px,#f66 149px 151px,#a00 152px 153px,#e00 154px 156px,#200 157px 159px,#600 160px 166px,#800 167px 169px,#600 170px 172px,#800 173px 179px,#200 180px 182px,#600 183px 187px,#800 188px 195px,#f33 196px 198px,#600 199px 200px,#800 201px 205px,#a00 206px 208px,#200 209px 221px,#600 222px 226px,#a00 227px 237px,#e00 238px 239px,#600 240px 247px,#200 248px 252px,#a00 253px 257px,#200 258px 260px,#600 261px 265px,#200 266px 268px,#f33 269px 270px,#800 271px 273px,#600 274px 278px,#200 279px 286px,#e00 287px 289px,#600 290px 299px,#200 300px 304px,#f33 305px 307px,#200 308px 315px,#600 316px 322px,#800 323px 328px,#600 329px 338px,#200 339px 341px,#600 342px 343px,#200 344px 346px,#600 347px 348px,#200 349px 354px,#f33 355px 356px,#600 357px 364px,#200 365px 367px,#600 368px 369px,#800 370px 374px,#200 375px 377px,#600 378px 382px,#200 383px 398px,#600 399px 400px,#800 401px 406px,#e00 407px 411px,#200 412px 419px,#600 420px 424px,#200 425px 429px,#600 430px 432px,#e00 433px 437px,#f33 438px 439px,#f66 440px 442px,#a00 443px 447px,#800 448px 450px,#600 451px 455px,#a00 456px 458px,#200 459px 460px,#e00 461px 463px,#200 464px 465px,#e00 466px 471px,#200 472px 478px,#800 479px 481px,#200 482px 491px,#e00 492px 494px)"></div><div class="a" style="left:0px;top:304.04px;width:461px;height:21.86px;background:linear-gradient(90deg,#200 0px 3px,#a00 4px 5px,#200 6px 8px,#e00 9px 13px,#200 14px 21px,#600 22px 23px,#200 24px 31px,#600 32px 39px,#e00 40px 42px,#f33 43px 44px,#e00 45px 47px,#200 48px 52px,#e00 53px 55px,#a00 56px 57px,#f33 58px 60px,#200 61px 68px,#e00 69px 70px,#200 71px 75px,#600 76px 83px,#200 84px 91px,#e00 92px 96px,#200 97px 99px,#a00 100px 104px,#200 105px 117px,#a00 118px 120px,#800 121px 130px,#600 131px 135px,#a00 136px 140px,#600 141px 143px,#200 144px 153px,#f33 154px 156px,#800 157px 164px,#200 165px 166px,#e00 167px 169px,#200 170px 174px,#e00 175px 177px,#200 178px 185px,#e00 186px 187px,#f66 188px 190px,#a00 191px 192px,#200 193px 195px,#600 196px 203px,#e00 204px 211px,#a00 212px 216px,#600 217px 224px,#e00 225px 226px,#600 227px 231px,#e00 232px 237px,#600 238px 239px,#200 240px 247px,#e00 248px 250px,#800 251px 252px,#600 253px 260px,#200 261px 268px,#600 269px 270px,#a00 271px 273px,#200 274px 281px,#600 282px 286px,#200 287px 296px,#600 297px 307px,#200 308px 328px,#e00 329px 330px,#800 331px 333px,#e00 334px 335px,#200 336px 341px,#e00 342px 343px,#600 344px 346px,#200 347px 356px,#f33 357px 359px,#600 360px 361px,#e00 362px 364px,#600 365px 367px,#200 368px 372px,#600 373px 374px,#200 375px 382px,#600 383px 387px,#200 388px 395px,#600 396px 403px,#800 404px 406px,#a00 407px 411px,#600 412px 419px,#f33 420px 421px,#a00 422px 442px,#200 443px 450px,#e00 451px 452px,#600 453px 455px,#f33 456px 458px,#600 459px 461px)"></div><div class="a" style="left:0px;top:325.30px;width:458px;height:21.86px;background:linear-gradient(90deg,#200 0px 8px,#e00 9px 13px,#600 14px 16px,#a00 17px 18px,#600 19px 21px,#200 22px 23px,#e00 24px 26px,#200 27px 34px,#e00 35px 36px,#f33 37px 39px,#f66 40px 42px,#600 43px 44px,#f33 45px 47px,#600 48px 52px,#e00 53px 55px,#f66 56px 57px,#a00 58px 65px,#200 66px 73px,#e00 74px 75px,#f33 76px 81px,#e00 82px 83px,#fbb 84px 88px,#e00 89px 96px,#f33 97px 99px,#fbb 100px 104px,#f33 105px 107px,#a00 108px 109px,#f33 110px 114px,#600 115px 125px,#f33 126px 127px,#200 128px 143px,#e00 144px 146px,#800 147px 151px,#200 152px 153px,#600 154px 159px,#f33 160px 172px,#a00 173px 174px,#e00 175px 177px,#600 178px 200px,#200 201px 203px,#600 204px 211px,#200 212px 221px,#600 222px 224px,#200 225px 229px,#600 230px 234px,#f33 235px 237px,#600 238px 239px,#800 240px 244px,#200 245px 250px,#800 251px 252px,#200 253px 255px,#a00 256px 257px,#600 258px 260px,#e00 261px 263px,#200 264px 273px,#e00 274px 278px,#f33 279px 281px,#800 282px 286px,#e00 287px 291px,#200 292px 296px,#800 297px 304px,#e00 305px 307px,#f33 308px 309px,#a00 310px 317px,#600 318px 322px,#e00 323px 325px,#600 326px 328px,#f33 329px 330px,#200 331px 335px,#e00 336px 338px,#200 339px 354px,#f33 355px 356px,#600 357px 359px,#e00 360px 361px,#600 362px 364px,#a00 365px 367px,#800 368px 374px,#f33 375px 377px,#200 378px 385px,#e00 386px 393px,#200 394px 398px,#600 399px 403px,#f33 404px 406px,#e00 407px 408px,#200 409px 413px,#600 414px 416px,#800 417px 421px,#200 422px 442px,#600 443px 447px,#e00 448px 450px,#200 451px 455px,#f33 456px 458px)"></div><div class="a" style="left:0px;top:346.56px;width:458px;height:21.86px;background:linear-gradient(90deg,#a00 0px 3px,#800 4px 5px,#600 6px 13px,#e00 14px 16px,#200 17px 23px,#f66 24px 26px,#600 27px 31px,#f33 32px 34px,#e00 35px 36px,#200 37px 39px,#a00 40px 47px,#e00 48px 49px,#600 50px 55px,#f33 56px 57px,#e00 58px 60px,#600 61px 62px,#f33 63px 65px,#a00 66px 68px,#600 69px 73px,#200 74px 75px,#800 76px 78px,#200 79px 81px,#e00 82px 83px,#600 84px 94px,#800 95px 96px,#200 97px 99px,#600 100px 104px,#200 105px 107px,#e00 108px 109px,#200 110px 120px,#f66 121px 122px,#600 123px 130px,#f66 131px 133px,#200 134px 138px,#f33 139px 140px,#200 141px 143px,#e00 144px 146px,#a00 147px 153px,#200 154px 156px,#e00 157px 159px,#200 160px 161px,#e00 162px 164px,#600 165px 166px,#e00 167px 169px,#600 170px 177px,#200 178px 182px,#e00 183px 185px,#600 186px 195px,#f33 196px 198px,#e00 199px 200px,#600 201px 203px,#e00 204px 205px,#f66 206px 208px,#200 209px 218px,#600 219px 226px,#f33 227px 229px,#800 230px 231px,#600 232px 234px,#200 235px 239px,#800 240px 242px,#200 243px 244px,#800 245px 255px,#600 256px 265px,#e00 266px 268px,#600 269px 270px,#200 271px 273px,#600 274px 276px,#a00 277px 278px,#e00 279px 281px,#200 282px 286px,#600 287px 291px,#200 292px 296px,#a00 297px 299px,#200 300px 302px,#f33 303px 304px,#a00 305px 307px,#200 308px 312px,#600 313px 315px,#200 316px 317px,#600 318px 320px,#a00 321px 322px,#200 323px 325px,#f33 326px 328px,#200 329px 333px,#600 334px 341px,#e00 342px 343px,#200 344px 348px,#e00 349px 351px,#200 352px 356px,#600 357px 361px,#f33 362px 364px,#600 365px 369px,#f33 370px 372px,#200 373px 374px,#800 375px 377px,#200 378px 382px,#e00 383px 387px,#200 388px 393px,#600 394px 403px,#e00 404px 406px,#f33 407px 408px,#200 409px 413px,#800 414px 416px,#e00 417px 419px,#200 420px 426px,#600 427px 429px,#e00 430px 432px,#600 433px 437px,#f33 438px 439px,#600 440px 447px,#f33 448px 450px,#200 451px 452px,#800 453px 455px,#a00 456px 458px,#200 458px 458px)"></div><div class="a" style="left:0px;top:367.82px;width:453px;height:21.86px;background:linear-gradient(90deg,#200 0px 3px,#f33 4px 5px,#a00 6px 8px,#200 9px 21px,#600 22px 23px,#f33 24px 29px,#e00 30px 34px,#600 35px 36px,#e00 37px 39px,#200 40px 47px,#f33 48px 49px,#600 50px 55px,#200 56px 70px,#f33 71px 73px,#e00 74px 75px,#600 76px 78px,#800 79px 83px,#f33 84px 86px,#600 87px 94px,#a00 95px 96px,#200 97px 112px,#a00 113px 114px,#f33 115px 117px,#600 118px 122px,#e00 123px 125px,#600 126px 127px,#f33 128px 130px,#200 131px 146px,#a00 147px 151px,#200 152px 153px,#f33 154px 156px,#200 157px 164px,#600 165px 169px,#200 170px 172px,#f66 173px 174px,#600 175px 177px,#e00 178px 179px,#200 180px 192px,#600 193px 200px,#200 201px 203px,#a00 204px 211px,#e00 212px 213px,#f33 214px 218px,#200 219px 229px,#e00 230px 231px,#200 232px 237px,#a00 238px 242px,#600 243px 244px,#e00 245px 247px,#200 248px 257px,#f33 258px 260px,#600 261px 263px,#200 264px 270px,#600 271px 278px,#e00 279px 281px,#600 282px 289px,#f33 290px 291px,#200 292px 294px,#e00 295px 296px,#f33 297px 299px,#200 300px 312px,#600 313px 317px,#f33 318px 320px,#200 321px 322px,#e00 323px 325px,#a00 326px 330px,#200 331px 333px,#e00 334px 335px,#f33 336px 341px,#e00 342px 343px,#600 344px 351px,#f33 352px 354px,#600 355px 359px,#f33 360px 361px,#e00 362px 364px,#f33 365px 367px,#a00 368px 372px,#e00 373px 377px,#f66 378px 380px,#e00 381px 382px,#a00 383px 385px,#e00 386px 390px,#f33 391px 393px,#200 394px 400px,#800 401px 408px,#a00 409px 419px,#f33 420px 421px,#200 422px 429px,#a00 430px 434px,#600 435px 445px,#200 446px 452px,#e00 452px 453px)"></div><div class="a" style="left:0px;top:389.08px;width:374px;height:21.86px;background:linear-gradient(90deg,#f33 0px 3px,#600 4px 10px,#200 11px 18px,#e00 19px 21px,#600 22px 29px,#e00 30px 31px,#a00 32px 36px,#e00 37px 39px,#200 40px 44px,#e00 45px 47px,#600 48px 55px,#f66 56px 57px,#200 58px 62px,#600 63px 68px,#200 69px 78px,#600 79px 86px,#f33 87px 88px,#e00 89px 91px,#a00 92px 94px,#600 95px 96px,#e00 97px 101px,#200 102px 104px,#e00 105px 107px,#600 108px 120px,#a00 121px 122px,#600 123px 127px,#e00 128px 130px,#600 131px 135px,#e00 136px 138px,#200 139px 156px,#600 157px 159px,#a00 160px 164px,#600 165px 169px,#200 170px 192px,#600 193px 195px,#200 196px 198px,#e00 199px 200px,#200 201px 208px,#600 209px 211px,#200 212px 216px,#f33 217px 218px,#200 219px 221px,#f33 222px 224px,#e00 225px 226px,#600 227px 229px,#e00 230px 231px,#600 232px 242px,#e00 243px 244px,#600 245px 250px,#e00 251px 252px,#200 253px 265px,#800 266px 268px,#a00 269px 270px,#e00 271px 273px,#200 274px 278px,#600 279px 291px,#e00 292px 294px,#200 295px 299px,#800 300px 304px,#e00 305px 307px,#600 308px 312px,#200 313px 315px,#600 316px 320px,#200 321px 322px,#a00 323px 330px,#200 331px 346px,#e00 347px 351px,#200 352px 354px,#e00 355px 356px,#800 357px 359px,#200 360px 361px,#e00 362px 364px,#200 365px 374px)"></div><div class="a" style="left:392px;top:389.08px;width:57px;height:21.86px;background:linear-gradient(90deg,#200 0px 3px,#600 4px 5px,#800 6px 13px,#600 14px 18px,#200 19px 23px,#e00 24px 26px,#f33 27px 29px,#200 30px 49px,#800 50px 55px,#f33 56px 57px)"></div><div class="a" style="left:0px;top:410.34px;width:367px;height:21.86px;background:linear-gradient(90deg,#e00 0px 3px,#600 4px 5px,#f33 6px 8px,#e00 9px 13px,#200 14px 18px,#600 19px 21px,#f33 22px 23px,#a00 24px 31px,#800 32px 34px,#f33 35px 36px,#600 37px 42px,#f33 43px 44px,#800 45px 47px,#e00 48px 49px,#200 50px 52px,#600 53px 57px,#e00 58px 60px,#200 61px 62px,#e00 63px 65px,#200 66px 78px,#a00 79px 83px,#f33 84px 86px,#600 87px 88px,#200 89px 94px,#e00 95px 96px,#200 97px 99px,#e00 100px 101px,#200 102px 107px,#600 108px 109px,#f33 110px 112px,#800 113px 114px,#600 115px 122px,#e00 123px 130px,#600 131px 133px,#200 134px 143px,#600 144px 146px,#e00 147px 148px,#f33 149px 151px,#600 152px 159px,#e00 160px 164px,#600 165px 169px,#200 170px 172px,#f33 173px 174px,#200 175px 177px,#e00 178px 179px,#200 180px 182px,#f33 183px 185px,#e00 186px 192px,#600 193px 198px,#200 199px 205px,#f33 206px 208px,#600 209px 213px,#a00 214px 224px,#200 225px 231px,#600 232px 242px,#e00 243px 244px,#200 245px 247px,#f66 248px 250px,#f33 251px 252px,#600 253px 257px,#e00 258px 260px,#600 261px 263px,#200 264px 265px,#f33 266px 268px,#a00 269px 273px,#e00 274px 276px,#200 277px 283px,#800 284px 286px,#200 287px 294px,#600 295px 296px,#a00 297px 299px,#200 300px 302px,#600 303px 307px,#200 308px 309px,#e00 310px 315px,#600 316px 322px,#800 323px 325px,#a00 326px 330px,#200 331px 333px,#600 334px 343px,#200 344px 348px,#e00 349px 351px,#200 352px 359px,#a00 360px 361px,#600 362px 367px)"></div><div class="a" style="left:398px;top:410.34px;width:46px;height:21.86px;background:linear-gradient(90deg,#f33 0px 3px,#600 4px 10px,#f33 11px 13px,#600 14px 16px,#200 17px 18px,#f33 19px 21px,#200 22px 42px,#600 43px 46px)"></div><div class="a" style="left:0px;top:431.60px;width:359px;height:21.86px;background:linear-gradient(90deg,#200 0px 10px,#f33 11px 13px,#e00 14px 16px,#600 17px 18px,#f33 19px 21px,#200 22px 23px,#600 24px 31px,#800 32px 39px,#e00 40px 42px,#200 43px 47px,#f66 48px 49px,#600 50px 57px,#800 58px 60px,#200 61px 68px,#a00 69px 73px,#e00 74px 75px,#200 76px 81px,#f33 82px 83px,#200 84px 88px,#e00 89px 91px,#200 92px 94px,#600 95px 99px,#a00 100px 101px,#200 102px 107px,#e00 108px 109px,#200 110px 117px,#e00 118px 120px,#200 121px 122px,#e00 123px 125px,#200 126px 127px,#e00 128px 133px,#200 134px 135px,#e00 136px 138px,#600 139px 146px,#f33 147px 148px,#e00 149px 151px,#a00 152px 153px,#f33 154px 156px,#200 157px 159px,#e00 160px 161px,#200 162px 169px,#f33 170px 172px,#800 173px 177px,#a00 178px 185px,#600 186px 187px,#e00 188px 190px,#f33 191px 195px,#e00 196px 203px,#a00 204px 208px,#600 209px 216px,#e00 217px 218px,#f33 219px 221px,#600 222px 234px,#200 235px 237px,#e00 238px 242px,#200 243px 247px,#600 248px 250px,#f33 251px 252px,#800 253px 260px,#f33 261px 263px,#200 264px 270px,#e00 271px 278px,#f33 279px 281px,#e00 282px 283px,#600 284px 286px,#200 287px 294px,#e00 295px 296px,#600 297px 302px,#f33 303px 304px,#600 305px 307px,#200 308px 312px,#a00 313px 315px,#f33 316px 317px,#600 318px 322px,#a00 323px 328px,#200 329px 335px,#600 336px 341px,#a00 342px 343px,#600 344px 346px,#200 347px 351px,#600 352px 356px,#e00 357px 359px,#200 359px 359px)"></div><div class="a" style="left:398px;top:431.60px;width:46px;height:21.86px;background:linear-gradient(90deg,#a00 0px 5px,#e00 6px 8px,#200 9px 10px,#600 11px 21px,#f33 22px 26px,#600 27px 29px,#f33 30px 31px,#600 32px 36px,#200 37px 39px,#600 40px 42px,#200 43px 46px)"></div><div class="a" style="left:0px;top:452.86px;width:297px;height:21.86px;background:linear-gradient(90deg,#600 0px 8px,#200 9px 10px,#e00 11px 13px,#f33 14px 16px,#e00 17px 21px,#a00 22px 23px,#f33 24px 29px,#a00 30px 31px,#600 32px 44px,#e00 45px 49px,#f33 50px 52px,#e00 53px 55px,#200 56px 62px,#600 63px 65px,#e00 66px 68px,#200 69px 81px,#600 82px 86px,#f33 87px 88px,#e00 89px 94px,#200 95px 96px,#600 97px 99px,#f33 100px 104px,#200 105px 109px,#f33 110px 112px,#600 113px 117px,#200 118px 122px,#a00 123px 127px,#200 128px 138px,#f33 139px 140px,#a00 141px 153px,#f33 154px 156px,#e00 157px 161px,#200 162px 164px,#e00 165px 166px,#600 167px 169px,#e00 170px 172px,#600 173px 174px,#200 175px 185px,#600 186px 195px,#800 196px 200px,#e00 201px 203px,#600 204px 211px,#200 212px 213px,#f33 214px 216px,#600 217px 234px,#200 235px 239px,#600 240px 244px,#200 245px 247px,#f33 248px 250px,#a00 251px 255px,#e00 256px 257px,#a00 258px 260px,#200 261px 263px,#e00 264px 265px,#600 266px 270px,#e00 271px 273px,#600 274px 276px,#200 277px 278px,#e00 279px 281px,#600 282px 283px,#e00 284px 286px,#200 287px 291px,#e00 292px 294px,#200 295px 297px)"></div><div class="a" style="left:324px;top:452.86px;width:27px;height:21.86px;background:linear-gradient(90deg,#800 0px 3px,#a00 4px 5px,#200 6px 8px,#f33 9px 13px,#200 14px 18px,#e00 19px 21px,#600 22px 27px)"></div><div class="a" style="left:409px;top:452.86px;width:27px;height:21.86px;background:linear-gradient(90deg,#200 0px 5px,#f33 6px 8px,#a00 9px 16px,#200 17px 21px,#600 22px 27px)"></div><div class="a" style="left:0px;top:474.12px;width:297px;height:21.86px;background:linear-gradient(90deg,#e00 0px 3px,#600 4px 8px,#e00 9px 10px,#600 11px 13px,#e00 14px 16px,#200 17px 23px,#600 24px 31px,#f33 32px 34px,#200 35px 36px,#600 37px 39px,#f33 40px 42px,#200 43px 44px,#e00 45px 47px,#a00 48px 52px,#600 53px 55px,#800 56px 57px,#e00 58px 65px,#200 66px 68px,#a00 69px 70px,#600 71px 73px,#f33 74px 75px,#e00 76px 81px,#a00 82px 83px,#200 84px 91px,#f33 92px 94px,#600 95px 96px,#e00 97px 101px,#a00 102px 107px,#200 108px 109px,#f33 110px 112px,#600 113px 114px,#e00 115px 117px,#f33 118px 120px,#e00 121px 122px,#600 123px 133px,#e00 134px 135px,#600 136px 146px,#200 147px 151px,#a00 152px 156px,#e00 157px 159px,#200 160px 169px,#f33 170px 172px,#600 173px 174px,#200 175px 182px,#600 183px 185px,#200 186px 205px,#800 206px 211px,#600 212px 224px,#f33 225px 226px,#f66 227px 229px,#e00 230px 231px,#f33 232px 234px,#600 235px 237px,#200 238px 242px,#800 243px 247px,#600 248px 255px,#f33 256px 257px,#a00 258px 260px,#600 261px 263px,#200 264px 276px,#e00 277px 283px,#200 284px 291px,#e00 292px 294px,#600 295px 296px,#f33 296px 297px)"></div><div class="a" style="left:0px;top:495.38px;width:228px;height:21.86px;background:linear-gradient(90deg,#e00 0px 5px,#200 6px 8px,#600 9px 16px,#e00 17px 18px,#a00 19px 21px,#800 22px 29px,#200 30px 36px,#600 37px 42px,#e00 43px 47px,#600 48px 49px,#e00 50px 52px,#600 53px 65px,#f33 66px 68px,#e00 69px 70px,#600 71px 73px,#e00 74px 75px,#600 76px 88px,#200 89px 91px,#e00 92px 94px,#f33 95px 99px,#600 100px 107px,#e00 108px 109px,#200 110px 125px,#800 126px 130px,#200 131px 133px,#600 134px 135px,#200 136px 140px,#600 141px 143px,#e00 144px 146px,#600 147px 151px,#f33 152px 153px,#600 154px 161px,#f33 162px 164px,#200 165px 166px,#f33 167px 169px,#600 170px 172px,#200 173px 174px,#f33 175px 177px,#600 178px 182px,#800 183px 190px,#e00 191px 192px,#f33 193px 195px,#e00 196px 198px,#800 199px 205px,#200 206px 218px,#a00 219px 226px,#f66 227px 228px)"></div><div class="a" style="left:242px;top:495.38px;width:11px;height:21.86px;background:linear-gradient(90deg,#e00 0px 3px,#600 4px 8px,#a00 9px 10px,#f33 10px 11px)"></div><div class="a" style="left:0px;top:516.64px;width:171px;height:21.86px;background:linear-gradient(90deg,#a00 0px 3px,#e00 4px 8px,#f33 9px 10px,#200 11px 16px,#e00 17px 21px,#a00 22px 31px,#200 32px 34px,#e00 35px 36px,#200 37px 39px,#600 40px 42px,#e00 43px 44px,#200 45px 49px,#a00 50px 55px,#200 56px 57px,#600 58px 62px,#e00 63px 65px,#200 66px 75px,#e00 76px 78px,#200 79px 83px,#600 84px 88px,#e00 89px 91px,#f33 92px 96px,#200 97px 99px,#800 100px 101px,#600 102px 107px,#a00 108px 112px,#200 113px 114px,#a00 115px 120px,#200 121px 125px,#a00 126px 130px,#e00 131px 133px,#200 134px 138px,#e00 139px 140px,#600 141px 143px,#e00 144px 148px,#a00 149px 153px,#600 154px 156px,#e00 157px 159px,#200 160px 161px,#e00 162px 166px,#200 167px 171px)"></div><div class="a" style="left:191px;top:516.64px;width:28px;height:21.86px;background:linear-gradient(90deg,#e00 0px 3px,#200 4px 8px,#800 9px 10px,#e00 11px 13px,#200 14px 23px,#e00 24px 26px,#a00 27px 28px)"></div><div class="a" style="left:0px;top:537.90px;width:137px;height:21.86px;background:linear-gradient(90deg,#600 0px 5px,#f33 6px 8px,#800 9px 10px,#f33 11px 13px,#e00 14px 18px,#f33 19px 21px,#e00 22px 26px,#200 27px 39px,#e00 40px 42px,#200 43px 47px,#f33 48px 49px,#600 50px 57px,#200 58px 60px,#e00 61px 62px,#200 63px 81px,#a00 82px 86px,#e00 87px 91px,#f66 92px 94px,#e00 95px 96px,#200 97px 107px,#600 108px 109px,#f33 110px 112px,#600 113px 114px,#f33 115px 117px,#e00 118px 120px,#600 121px 122px,#200 123px 125px,#600 126px 133px,#200 134px 137px)"></div><div class="a" style="left:162px;top:537.90px;width:9px;height:21.86px;background:linear-gradient(90deg,#200 0px 9px)"></div><div class="a" style="left:2px;top:559.16px;width:10px;height:21.86px;background:linear-gradient(90deg,#600 0px 5px,#f33 6px 8px,#600 9px 10px)"></div><div class="a" style="left:43px;top:559.16px;width:75px;height:21.86px;background:linear-gradient(90deg,#200 0px 5px,#e00 6px 8px,#600 9px 10px,#f66 11px 13px,#200 14px 18px,#a00 19px 21px,#e00 22px 29px,#200 30px 31px,#f33 32px 34px,#200 35px 36px,#a00 37px 42px,#f33 43px 44px,#a00 45px 49px,#200 50px 52px,#a00 53px 60px,#600 61px 62px,#200 63px 65px,#600 66px 70px,#800 71px 75px)"></div><div class="a" style="left:72px;top:580.42px;width:46px;height:21.86px;background:linear-gradient(90deg,#600 0px 5px,#e00 6px 8px,#200 9px 21px,#600 22px 29px,#200 30px 36px,#f33 37px 39px,#e00 40px 42px,#600 43px 44px,#e00 45px 46px)"></div><div class="a" style="left:78px;top:601.68px;width:27px;height:21.86px;background:linear-gradient(90deg,#200 0px 5px,#e00 6px 8px,#a00 9px 13px,#200 14px 23px,#a00 24px 27px)"></div><div class="a" style="left:82px;top:622.94px;width:18px;height:21.86px;background:linear-gradient(90deg,#200 0px 8px,#600 9px 16px,#200 17px 18px)"></div><div class="a" style="left:0;top:0;width:919px;height:693px;clip-path:polygon(0px 700px,0px 542.9px,3px 542.9px,3px 521.6px,5px 521.6px,5px 564.2px,9px 564.2px,9px 542.9px,16px 542.9px,16px 521.6px,21px 521.6px,21px 542.9px,33px 542.9px,33px 521.6px,37px 521.6px,37px 542.9px,46px 542.9px,46px 564.2px,51px 564.2px,51px 521.6px,54px 521.6px,54px 542.9px,65px 542.9px,65px 564.2px,75px 564.2px,75px 585.4px,81px 585.4px,81px 606.7px,85px 606.7px,85px 627.9px,97px 627.9px,97px 606.7px,102px 606.7px,102px 585.4px,109px 585.4px,109px 564.2px,113px 564.2px,113px 585.4px,115px 585.4px,115px 542.9px,123px 542.9px,123px 521.6px,126px 521.6px,126px 542.9px,134px 542.9px,134px 500.4px,137px 500.4px,137px 521.6px,145px 521.6px,145px 500.4px,150px 500.4px,150px 521.6px,165px 521.6px,165px 542.9px,168px 542.9px,168px 500.4px,194px 500.4px,194px 521.6px,197px 521.6px,197px 479.1px,211px 479.1px,211px 500.4px,213px 500.4px,213px 521.6px,216px 521.6px,216px 500.4px,225px 500.4px,225px 479.1px,233px 479.1px,233px 457.9px,236px 457.9px,236px 479.1px,245px 479.1px,245px 500.4px,250px 500.4px,250px 479.1px,266px 479.1px,266px 457.9px,275px 457.9px,275px 479.1px,280px 479.1px,280px 457.9px,291px 457.9px,291px 479.1px,294px 479.1px,294px 436.6px,299px 436.6px,299px 415.3px,301px 415.3px,301px 436.6px,309px 436.6px,309px 415.3px,312px 415.3px,312px 394.1px,315px 394.1px,315px 436.6px,327px 436.6px,327px 457.9px,337px 457.9px,337px 436.6px,345px 436.6px,345px 457.9px,348px 457.9px,348px 436.6px,356px 436.6px,356px 415.3px,364px 415.3px,364px 394.1px,371px 394.1px,371px 372.8px,386px 372.8px,386px 351.6px,395px 351.6px,395px 394.1px,401px 394.1px,401px 436.6px,406px 436.6px,406px 415.3px,412px 415.3px,412px 457.9px,415px 457.9px,415px 415.3px,418px 415.3px,418px 436.6px,426px 436.6px,426px 457.9px,433px 457.9px,433px 436.6px,441px 436.6px,441px 394.1px,446px 394.1px,446px 372.8px,450px 372.8px,450px 351.6px,455px 351.6px,455px 309.0px,458px 309.0px,458px 287.8px,464px 287.8px,464px 266.5px,468px 266.5px,468px 287.8px,478px 287.8px,478px 266.5px,483px 266.5px,483px 287.8px,491px 287.8px,491px 266.5px,499px 266.5px,499px 266.5px,502px 266.5px,502px 245.3px,516px 245.3px,516px 224.0px,520px 224.0px,520px 245.3px,529px 245.3px,529px 224.0px,531px 224.0px,531px 245.3px,541px 245.3px,541px 266.5px,546px 266.5px,546px 224.0px,550px 224.0px,550px 245.3px,551px 245.3px,551px 202.7px,563px 202.7px,563px 224.0px,566px 224.0px,566px 202.7px,571px 202.7px,571px 181.5px,577px 181.5px,577px 202.7px,580px 202.7px,580px 181.5px,581px 181.5px,581px 160.2px,591px 160.2px,591px 181.5px,596px 181.5px,596px 160.2px,598px 160.2px,598px 181.5px,604px 181.5px,604px 202.7px,611px 202.7px,611px 139.0px,613px 139.0px,613px 96.4px,621px 96.4px,621px 117.7px,626px 117.7px,626px 96.4px,631px 96.4px,631px 75.2px,638px 75.2px,638px 96.4px,641px 96.4px,641px 117.7px,648px 117.7px,648px 96.4px,654px 96.4px,654px 75.2px,657px 75.2px,657px 96.4px,660px 96.4px,660px 75.2px,674px 75.2px,674px 53.9px,676px 53.9px,676px 75.2px,678px 75.2px,678px 96.4px,683px 96.4px,683px 117.7px,687px 117.7px,687px 139.0px,696px 139.0px,696px 160.2px,698px 160.2px,698px 181.5px,701px 181.5px,701px 160.2px,709px 160.2px,709px 117.7px,712px 117.7px,712px 139.0px,717px 139.0px,717px 160.2px,722px 160.2px,722px 139.0px,728px 139.0px,728px 181.5px,730px 181.5px,730px 117.7px,732px 117.7px,732px 139.0px,738px 139.0px,738px 160.2px,748px 160.2px,748px 139.0px,754px 139.0px,754px 160.2px,757px 160.2px,757px 117.7px,758px 117.7px,758px 139.0px,766px 139.0px,766px 117.7px,771px 117.7px,771px 160.2px,776px 160.2px,776px 139.0px,783px 139.0px,783px 160.2px,788px 160.2px,788px 139.0px,801px 139.0px,801px 117.7px,810px 117.7px,810px 139.0px,818px 139.0px,818px 160.2px,820px 160.2px,820px 139.0px,833px 139.0px,833px 160.2px,839px 160.2px,839px 181.5px,861px 181.5px,861px 160.2px,868px 160.2px,868px 139.0px,877px 139.0px,877px 117.7px,879px 117.7px,879px 139.0px,887px 139.0px,887px 117.7px,895px 117.7px,895px 160.2px,898px 160.2px,898px 139.0px,907px 139.0px,907px 160.2px,911px 160.2px,911px 181.5px,914px 181.5px,914px 245.3px,919px 245.3px,919px 700px)"><div class="a" style="left:671px;top:48.92px;width:8px;height:21.86px;background:linear-gradient(90deg,#012 0px 3px,#046 4px 5px,#0ae 6px 8px,#012 8px 8px)"></div><div class="a" style="left:628px;top:70.18px;width:53px;height:21.86px;background:linear-gradient(90deg,#046 0px 8px,#012 9px 10px,#0ae 11px 13px,#012 14px 26px,#3cf 27px 29px,#012 30px 34px,#3cf 35px 36px,#012 37px 47px,#0ae 48px 52px,#012 52px 53px)"></div><div class="a" style="left:610px;top:91.44px;width:76px;height:21.86px;background:linear-gradient(90deg,#012 0px 10px,#046 11px 13px,#012 14px 16px,#046 17px 21px,#012 22px 26px,#07a 27px 31px,#012 32px 34px,#046 35px 36px,#3cf 37px 39px,#046 40px 42px,#012 43px 49px,#046 50px 52px,#07a 53px 55px,#046 56px 60px,#0ae 61px 62px,#07a 63px 68px,#012 69px 73px,#046 74px 76px)"></div><div class="a" style="left:610px;top:112.70px;width:80px;height:21.86px;background:linear-gradient(90deg,#3cf 0px 3px,#012 4px 5px,#046 6px 10px,#3cf 11px 13px,#046 14px 21px,#012 22px 26px,#07a 27px 29px,#012 30px 36px,#0ae 37px 39px,#012 40px 47px,#3cf 48px 49px,#046 50px 60px,#07a 61px 65px,#3cf 66px 68px,#07a 69px 75px,#0ae 76px 78px,#046 79px 80px)"></div><div class="a" style="left:706px;top:112.70px;width:29px;height:21.86px;background:linear-gradient(90deg,#0ae 0px 3px,#07a 4px 8px,#046 9px 10px,#0ae 11px 13px,#3cf 14px 16px,#046 17px 23px,#012 24px 29px)"></div><div class="a" style="left:754px;top:112.70px;width:20px;height:21.86px;background:linear-gradient(90deg,#3cf 0px 3px,#012 4px 5px,#0ae 6px 8px,#012 9px 10px,#0ae 11px 13px,#046 14px 16px,#07a 17px 18px,#046 19px 20px)"></div><div class="a" style="left:798px;top:112.70px;width:15px;height:21.86px;background:linear-gradient(90deg,#012 0px 3px,#3cf 4px 5px,#012 6px 10px,#046 11px 15px)"></div><div class="a" style="left:874px;top:112.70px;width:24px;height:21.86px;background:linear-gradient(90deg,#046 0px 3px,#07a 4px 5px,#012 6px 21px,#046 22px 24px)"></div><div class="a" style="left:608px;top:133.96px;width:228px;height:21.86px;background:linear-gradient(90deg,#0ae 0px 3px,#07a 4px 5px,#012 6px 10px,#07a 11px 23px,#046 24px 26px,#012 27px 36px,#6df 37px 39px,#012 40px 42px,#3cf 43px 44px,#012 45px 47px,#046 48px 49px,#07a 50px 55px,#0ae 56px 57px,#012 58px 62px,#07a 63px 65px,#3cf 66px 68px,#012 69px 75px,#046 76px 81px,#3cf 82px 86px,#012 87px 88px,#3cf 89px 91px,#046 92px 99px,#0ae 100px 101px,#07a 102px 112px,#012 113px 120px,#046 121px 127px,#0ae 128px 130px,#3cf 131px 135px,#012 136px 138px,#07a 139px 143px,#3cf 144px 148px,#07a 149px 153px,#046 154px 159px,#012 160px 161px,#07a 162px 169px,#012 170px 172px,#0ae 173px 174px,#012 175px 179px,#046 180px 187px,#3cf 188px 192px,#046 193px 195px,#0ae 196px 198px,#012 199px 205px,#046 206px 211px,#3cf 212px 216px,#012 217px 224px,#0ae 225px 226px,#046 227px 228px)"></div><div class="a" style="left:865px;top:133.96px;width:45px;height:21.86px;background:linear-gradient(90deg,#0ae 0px 3px,#012 4px 5px,#07a 6px 8px,#012 9px 18px,#07a 19px 26px,#012 27px 31px,#046 32px 34px,#07a 35px 36px,#046 37px 45px)"></div><div class="a" style="left:578px;top:155.22px;width:264px;height:21.86px;background:linear-gradient(90deg,#07a 0px 10px,#046 11px 13px,#3cf 14px 16px,#0ae 17px 21px,#07a 22px 29px,#012 30px 34px,#3cf 35px 36px,#012 37px 39px,#07a 40px 42px,#0ae 43px 44px,#07a 45px 52px,#3cf 53px 55px,#07a 56px 57px,#3cf 58px 60px,#07a 61px 65px,#0ae 66px 68px,#012 69px 70px,#0ae 71px 75px,#012 76px 88px,#0ae 89px 91px,#012 92px 96px,#3cf 97px 99px,#012 100px 104px,#046 105px 109px,#0ae 110px 112px,#3cf 113px 114px,#046 115px 117px,#012 118px 135px,#046 136px 143px,#07a 144px 148px,#0ae 149px 156px,#046 157px 159px,#0ae 160px 161px,#012 162px 164px,#0ae 165px 166px,#012 167px 179px,#046 180px 185px,#0ae 186px 187px,#012 188px 190px,#0ae 191px 192px,#046 193px 198px,#012 199px 200px,#3cf 201px 203px,#012 204px 211px,#046 212px 226px,#012 227px 229px,#0ae 230px 231px,#012 232px 242px,#07a 243px 247px,#012 248px 252px,#6df 253px 255px,#3cf 256px 257px,#012 258px 263px,#0ae 263px 264px)"></div><div class="a" style="left:858px;top:155.22px;width:56px;height:21.86px;background:linear-gradient(90deg,#0ae 0px 3px,#3cf 4px 5px,#0ae 6px 8px,#046 9px 13px,#012 14px 18px,#046 19px 21px,#012 22px 29px,#3cf 30px 34px,#046 35px 42px,#0ae 43px 44px,#3cf 45px 47px,#07a 48px 52px,#046 53px 55px,#012 55px 56px)"></div><div class="a" style="left:568px;top:176.48px;width:349px;height:21.86px;background:linear-gradient(90deg,#07a 0px 5px,#046 6px 8px,#0ae 9px 10px,#046 11px 21px,#3cf 22px 23px,#046 24px 36px,#0ae 37px 42px,#046 43px 44px,#012 45px 62px,#07a 63px 65px,#046 66px 68px,#0ae 69px 70px,#07a 71px 73px,#046 74px 75px,#012 76px 94px,#3cf 95px 96px,#07a 97px 101px,#012 102px 104px,#046 105px 109px,#07a 110px 114px,#012 115px 117px,#046 118px 122px,#0ae 123px 125px,#046 126px 133px,#012 134px 135px,#3cf 136px 140px,#0ae 141px 143px,#046 144px 146px,#3cf 147px 148px,#07a 149px 151px,#0ae 152px 153px,#046 154px 156px,#0ae 157px 159px,#012 160px 161px,#3cf 162px 164px,#046 165px 172px,#012 173px 177px,#046 178px 185px,#012 186px 190px,#046 191px 192px,#0ae 193px 198px,#07a 199px 205px,#046 206px 208px,#3cf 209px 211px,#07a 212px 213px,#0ae 214px 216px,#012 217px 218px,#3cf 219px 224px,#046 225px 226px,#0ae 227px 229px,#012 230px 231px,#046 232px 242px,#012 243px 252px,#046 253px 260px,#0ae 261px 263px,#07a 264px 265px,#0ae 266px 268px,#07a 269px 270px,#6df 271px 273px,#0ae 274px 281px,#012 282px 289px,#046 290px 294px,#0ae 295px 296px,#012 297px 302px,#0ae 303px 304px,#07a 305px 307px,#046 308px 309px,#0ae 310px 312px,#3cf 313px 315px,#012 316px 322px,#3cf 323px 325px,#046 326px 328px,#0ae 329px 333px,#3cf 334px 338px,#046 339px 343px,#0ae 344px 346px,#3cf 347px 348px,#012 348px 349px)"></div><div class="a" style="left:548px;top:197.74px;width:369px;height:21.86px;background:linear-gradient(90deg,#046 0px 3px,#012 4px 5px,#3cf 6px 10px,#012 11px 16px,#046 17px 18px,#012 19px 23px,#07a 24px 26px,#0ae 27px 29px,#3cf 30px 31px,#046 32px 39px,#3cf 40px 42px,#07a 43px 44px,#3cf 45px 47px,#0ae 48px 49px,#046 50px 52px,#07a 53px 60px,#012 61px 65px,#046 66px 73px,#012 74px 75px,#046 76px 78px,#3cf 79px 81px,#07a 82px 88px,#012 89px 94px,#07a 95px 96px,#0ae 97px 99px,#046 100px 101px,#012 102px 104px,#0ae 105px 109px,#046 110px 112px,#0ae 113px 114px,#07a 115px 117px,#012 118px 125px,#046 126px 130px,#07a 131px 133px,#3cf 134px 135px,#012 136px 138px,#6df 139px 140px,#046 141px 148px,#012 149px 151px,#07a 152px 156px,#6df 157px 159px,#07a 160px 161px,#012 162px 169px,#07a 170px 172px,#3cf 173px 174px,#046 175px 177px,#012 178px 179px,#3cf 180px 182px,#0ae 183px 190px,#012 191px 195px,#3cf 196px 198px,#07a 199px 200px,#012 201px 205px,#0ae 206px 208px,#046 209px 213px,#07a 214px 218px,#012 219px 231px,#046 232px 234px,#0ae 235px 239px,#3cf 240px 242px,#012 243px 244px,#046 245px 250px,#012 251px 252px,#3cf 253px 255px,#012 256px 260px,#0ae 261px 263px,#012 264px 268px,#0ae 269px 273px,#012 274px 278px,#3cf 279px 281px,#012 282px 283px,#046 284px 286px,#3cf 287px 291px,#07a 292px 296px,#012 297px 304px,#6df 305px 307px,#046 308px 315px,#012 316px 322px,#046 323px 330px,#07a 331px 335px,#012 336px 338px,#07a 339px 341px,#046 342px 348px,#0ae 349px 351px,#07a 352px 356px,#3cf 357px 359px,#046 360px 367px,#012 368px 369px)"></div><div class="a" style="left:513px;top:219.00px;width:404px;height:21.86px;background:linear-gradient(90deg,#012 0px 3px,#07a 4px 5px,#046 6px 8px,#0ae 9px 10px,#046 11px 18px,#07a 19px 29px,#3cf 30px 31px,#07a 32px 34px,#012 35px 42px,#046 43px 47px,#07a 48px 55px,#046 56px 60px,#07a 61px 70px,#0ae 71px 73px,#012 74px 83px,#07a 84px 88px,#0ae 89px 91px,#07a 92px 99px,#012 100px 101px,#046 102px 107px,#07a 108px 109px,#012 110px 112px,#07a 113px 117px,#046 118px 127px,#0ae 128px 130px,#046 131px 135px,#012 136px 138px,#046 139px 143px,#07a 144px 146px,#012 147px 159px,#046 160px 161px,#3cf 162px 164px,#046 165px 169px,#012 170px 177px,#046 178px 179px,#012 180px 182px,#0ae 183px 185px,#012 186px 190px,#046 191px 192px,#0ae 193px 198px,#3cf 199px 203px,#07a 204px 205px,#0ae 206px 208px,#012 209px 216px,#3cf 217px 218px,#046 219px 221px,#07a 222px 229px,#0ae 230px 231px,#07a 232px 234px,#012 235px 247px,#07a 248px 250px,#012 251px 255px,#07a 256px 263px,#3cf 264px 265px,#012 266px 268px,#3cf 269px 270px,#046 271px 281px,#012 282px 283px,#6df 284px 286px,#0ae 287px 289px,#012 290px 291px,#3cf 292px 294px,#0ae 295px 296px,#07a 297px 304px,#012 305px 309px,#07a 310px 312px,#0ae 313px 315px,#046 316px 320px,#012 321px 325px,#3cf 326px 328px,#07a 329px 335px,#3cf 336px 343px,#07a 344px 346px,#046 347px 361px,#07a 362px 367px,#0ae 368px 372px,#046 373px 374px,#0ae 375px 377px,#046 378px 385px,#07a 386px 390px,#046 391px 403px,#3cf 403px 404px)"></div><div class="a" style="left:499px;top:240.26px;width:420px;height:21.86px;background:linear-gradient(90deg,#3cf 0px 3px,#07a 4px 5px,#3cf 6px 8px,#012 9px 10px,#0ae 11px 18px,#6df 19px 21px,#07a 22px 29px,#012 30px 34px,#046 35px 39px,#3cf 40px 42px,#046 43px 44px,#3cf 45px 49px,#046 50px 52px,#012 53px 55px,#07a 56px 62px,#0ae 63px 65px,#012 66px 70px,#0ae 71px 73px,#012 74px 75px,#3cf 76px 78px,#07a 79px 83px,#046 84px 91px,#0ae 92px 94px,#012 95px 99px,#07a 100px 101px,#012 102px 109px,#046 110px 112px,#07a 113px 114px,#0ae 115px 117px,#012 118px 122px,#3cf 123px 125px,#6df 126px 127px,#046 128px 133px,#07a 134px 140px,#0ae 141px 143px,#046 144px 156px,#012 157px 159px,#0ae 160px 161px,#046 162px 166px,#3cf 167px 169px,#046 170px 177px,#3cf 178px 179px,#046 180px 185px,#3cf 186px 187px,#012 188px 200px,#0ae 201px 203px,#3cf 204px 205px,#012 206px 211px,#07a 212px 218px,#012 219px 221px,#046 222px 226px,#012 227px 229px,#07a 230px 237px,#012 238px 242px,#046 243px 244px,#012 245px 252px,#046 253px 255px,#07a 256px 265px,#012 266px 270px,#3cf 271px 273px,#0ae 274px 276px,#07a 277px 283px,#046 284px 296px,#3cf 297px 302px,#012 303px 312px,#046 313px 315px,#3cf 316px 320px,#046 321px 322px,#07a 323px 330px,#046 331px 333px,#3cf 334px 335px,#046 336px 338px,#3cf 339px 341px,#012 342px 348px,#046 349px 354px,#012 355px 356px,#046 357px 361px,#012 362px 364px,#046 365px 367px,#07a 368px 380px,#3cf 381px 382px,#07a 383px 387px,#3cf 388px 390px,#07a 391px 393px,#046 394px 398px,#012 399px 400px,#3cf 401px 403px,#012 404px 419px,#07a 419px 420px)"></div><div class="a" style="left:461px;top:261.52px;width:458px;height:21.86px;background:linear-gradient(90deg,#07a 0px 8px,#046 9px 10px,#6df 11px 13px,#07a 14px 23px,#012 24px 31px,#046 32px 36px,#07a 37px 42px,#046 43px 49px,#07a 50px 52px,#012 53px 55px,#3cf 56px 60px,#012 61px 62px,#3cf 63px 65px,#012 66px 73px,#046 74px 75px,#07a 76px 81px,#046 82px 88px,#012 89px 94px,#0ae 95px 96px,#3cf 97px 99px,#012 100px 107px,#3cf 108px 109px,#046 110px 122px,#012 123px 125px,#6df 126px 130px,#07a 131px 138px,#046 139px 140px,#0ae 141px 143px,#07a 144px 146px,#3cf 147px 148px,#046 149px 153px,#012 154px 159px,#07a 160px 161px,#012 162px 166px,#07a 167px 174px,#046 175px 177px,#0ae 178px 179px,#012 180px 190px,#0ae 191px 192px,#07a 193px 198px,#046 199px 200px,#012 201px 208px,#6df 209px 211px,#012 212px 218px,#07a 219px 221px,#012 222px 226px,#0ae 227px 229px,#046 230px 234px,#012 235px 247px,#046 248px 250px,#0ae 251px 252px,#046 253px 255px,#07a 256px 260px,#012 261px 268px,#07a 269px 270px,#0ae 271px 276px,#012 277px 278px,#046 279px 289px,#0ae 290px 291px,#046 292px 294px,#012 295px 296px,#046 297px 307px,#3cf 308px 309px,#012 310px 312px,#07a 313px 315px,#012 316px 317px,#046 318px 320px,#6df 321px 322px,#046 323px 325px,#07a 326px 328px,#012 329px 333px,#046 334px 338px,#012 339px 348px,#3cf 349px 351px,#012 352px 356px,#07a 357px 359px,#012 360px 367px,#3cf 368px 369px,#07a 370px 374px,#046 375px 380px,#0ae 381px 382px,#046 383px 385px,#012 386px 400px,#07a 401px 408px,#012 409px 416px,#0ae 417px 419px,#012 420px 424px,#07a 425px 432px,#012 433px 434px,#07a 435px 437px,#046 438px 439px,#012 440px 445px,#046 446px 447px,#012 448px 452px,#0ae 453px 455px,#3cf 456px 458px,#07a 458px 458px)"></div><div class="a" style="left:455px;top:282.78px;width:464px;height:21.86px;background:linear-gradient(90deg,#07a 0px 3px,#0ae 4px 5px,#012 6px 16px,#3cf 17px 18px,#012 19px 21px,#6df 22px 23px,#046 24px 31px,#0ae 32px 34px,#3cf 35px 36px,#07a 37px 44px,#0ae 45px 49px,#046 50px 57px,#0ae 58px 60px,#012 61px 62px,#046 63px 68px,#6df 69px 70px,#07a 71px 78px,#046 79px 83px,#012 84px 88px,#07a 89px 91px,#012 92px 101px,#0ae 102px 107px,#046 108px 109px,#0ae 110px 112px,#3cf 113px 114px,#046 115px 125px,#0ae 126px 127px,#012 128px 130px,#046 131px 138px,#07a 139px 146px,#046 147px 148px,#0ae 149px 151px,#046 152px 153px,#0ae 154px 159px,#012 160px 161px,#3cf 162px 164px,#046 165px 172px,#07a 173px 179px,#046 180px 182px,#012 183px 185px,#046 186px 190px,#012 191px 195px,#046 196px 203px,#3cf 204px 205px,#046 206px 213px,#012 214px 221px,#0ae 222px 224px,#046 225px 226px,#012 227px 234px,#3cf 235px 237px,#0ae 238px 239px,#3cf 240px 242px,#046 243px 247px,#012 248px 250px,#3cf 251px 252px,#012 253px 255px,#046 256px 257px,#3cf 258px 260px,#0ae 261px 263px,#046 264px 265px,#3cf 266px 268px,#046 269px 270px,#012 271px 273px,#046 274px 276px,#3cf 277px 278px,#046 279px 283px,#6df 284px 286px,#3cf 287px 291px,#046 292px 296px,#0ae 297px 299px,#012 300px 302px,#046 303px 309px,#012 310px 320px,#07a 321px 328px,#012 329px 335px,#0ae 336px 338px,#3cf 339px 341px,#012 342px 346px,#0ae 347px 348px,#3cf 349px 351px,#012 352px 356px,#046 357px 364px,#0ae 365px 367px,#012 368px 374px,#046 375px 380px,#3cf 381px 382px,#012 383px 413px,#0ae 414px 416px,#012 417px 424px,#046 425px 426px,#012 427px 432px,#046 433px 437px,#07a 438px 442px,#0ae 443px 445px,#046 446px 450px,#012 451px 452px,#3cf 453px 455px,#0ae 456px 460px,#3cf 461px 464px)"></div><div class="a" style="left:452px;top:304.04px;width:467px;height:21.86px;background:linear-gradient(90deg,#046 0px 3px,#07a 4px 5px,#012 6px 10px,#046 11px 26px,#3cf 27px 29px,#012 30px 34px,#046 35px 42px,#012 43px 47px,#046 48px 49px,#07a 50px 57px,#0ae 58px 60px,#07a 61px 68px,#046 69px 75px,#07a 76px 78px,#046 79px 86px,#012 87px 104px,#046 105px 109px,#012 110px 112px,#0ae 113px 114px,#046 115px 117px,#0ae 118px 120px,#012 121px 127px,#07a 128px 135px,#012 136px 140px,#046 141px 146px,#07a 147px 153px,#012 154px 161px,#046 162px 169px,#07a 170px 174px,#046 175px 179px,#012 180px 185px,#0ae 186px 187px,#012 188px 190px,#046 191px 198px,#012 199px 203px,#0ae 204px 205px,#3cf 206px 208px,#0ae 209px 211px,#07a 212px 218px,#0ae 219px 221px,#07a 222px 224px,#046 225px 229px,#3cf 230px 231px,#0ae 232px 234px,#07a 235px 237px,#012 238px 250px,#3cf 251px 252px,#0ae 253px 255px,#012 256px 268px,#3cf 269px 270px,#046 271px 281px,#3cf 282px 283px,#012 284px 291px,#046 292px 294px,#012 295px 309px,#07a 310px 317px,#012 318px 325px,#3cf 326px 330px,#6df 331px 333px,#046 334px 335px,#07a 336px 338px,#0ae 339px 343px,#012 344px 346px,#3cf 347px 348px,#07a 349px 356px,#046 357px 367px,#0ae 368px 369px,#3cf 370px 372px,#012 373px 374px,#0ae 375px 380px,#012 381px 387px,#046 388px 390px,#012 391px 393px,#046 394px 400px,#07a 401px 408px,#0ae 409px 413px,#046 414px 424px,#3cf 425px 429px,#012 430px 432px,#046 433px 439px,#012 440px 442px,#07a 443px 445px,#046 446px 447px,#012 448px 450px,#07a 451px 455px,#012 456px 460px,#07a 461px 463px,#046 464px 465px,#3cf 466px 467px)"></div><div class="a" style="left:452px;top:325.30px;width:467px;height:21.86px;background:linear-gradient(90deg,#046 0px 3px,#07a 4px 13px,#046 14px 16px,#0ae 17px 18px,#07a 19px 23px,#046 24px 31px,#0ae 32px 34px,#046 35px 36px,#012 37px 39px,#046 40px 49px,#3cf 50px 52px,#046 53px 55px,#012 56px 62px,#07a 63px 65px,#012 66px 70px,#046 71px 75px,#07a 76px 81px,#0ae 82px 83px,#012 84px 86px,#046 87px 94px,#07a 95px 99px,#046 100px 101px,#07a 102px 107px,#012 108px 114px,#046 115px 120px,#0ae 121px 122px,#3cf 123px 125px,#012 126px 133px,#0ae 134px 138px,#012 139px 143px,#3cf 144px 146px,#012 147px 159px,#3cf 160px 161px,#0ae 162px 164px,#3cf 165px 172px,#0ae 173px 174px,#3cf 175px 177px,#0ae 178px 185px,#3cf 186px 187px,#0ae 188px 208px,#6df 209px 213px,#3cf 214px 221px,#0ae 222px 226px,#3cf 227px 231px,#0ae 232px 237px,#6df 238px 242px,#012 243px 244px,#07a 245px 250px,#3cf 251px 255px,#6df 256px 257px,#046 258px 260px,#012 261px 263px,#3cf 264px 265px,#046 266px 268px,#012 269px 276px,#046 277px 278px,#0ae 279px 281px,#046 282px 283px,#3cf 284px 286px,#046 287px 294px,#0ae 295px 296px,#012 297px 304px,#046 305px 307px,#07a 308px 309px,#046 310px 322px,#012 323px 335px,#0ae 336px 338px,#046 339px 343px,#07a 344px 346px,#012 347px 354px,#07a 355px 356px,#012 357px 364px,#3cf 365px 367px,#0ae 368px 369px,#07a 370px 377px,#046 378px 382px,#3cf 383px 385px,#012 386px 390px,#046 391px 400px,#3cf 401px 403px,#046 404px 413px,#0ae 414px 416px,#046 417px 421px,#0ae 422px 424px,#012 425px 426px,#07a 427px 434px,#046 435px 437px,#012 438px 442px,#0ae 443px 445px,#012 446px 447px,#07a 448px 450px,#046 451px 452px,#3cf 453px 455px,#012 456px 467px)"></div><div class="a" style="left:383px;top:346.56px;width:15px;height:21.86px;background:linear-gradient(90deg,#07a 0px 3px,#3cf 4px 5px,#046 6px 8px,#012 9px 10px,#046 11px 15px)"></div><div class="a" style="left:447px;top:346.56px;width:472px;height:21.86px;background:linear-gradient(90deg,#0ae 0px 3px,#012 4px 8px,#046 9px 13px,#012 14px 18px,#07a 19px 26px,#046 27px 39px,#012 40px 42px,#07a 43px 44px,#046 45px 57px,#012 58px 62px,#07a 63px 73px,#3cf 74px 75px,#07a 76px 78px,#012 79px 88px,#07a 89px 101px,#012 102px 107px,#046 108px 125px,#3cf 126px 127px,#046 128px 133px,#3cf 134px 138px,#6df 139px 140px,#3cf 141px 143px,#012 144px 148px,#0ae 149px 151px,#012 152px 156px,#07a 157px 161px,#012 162px 164px,#3cf 165px 166px,#012 167px 169px,#07a 170px 172px,#046 173px 174px,#0ae 175px 177px,#012 178px 185px,#0ae 186px 187px,#012 188px 195px,#07a 196px 203px,#046 204px 205px,#3cf 206px 208px,#046 209px 218px,#07a 219px 224px,#0ae 225px 226px,#07a 227px 237px,#046 238px 242px,#3cf 243px 244px,#0ae 245px 247px,#6df 248px 250px,#0ae 251px 260px,#07a 261px 265px,#6df 266px 268px,#3cf 269px 276px,#0ae 277px 278px,#3cf 279px 289px,#0ae 290px 296px,#3cf 297px 302px,#0ae 303px 304px,#3cf 305px 309px,#012 310px 315px,#0ae 316px 320px,#6df 321px 322px,#0ae 323px 335px,#07a 336px 338px,#0ae 339px 341px,#012 342px 343px,#046 344px 348px,#07a 349px 354px,#012 355px 359px,#0ae 360px 364px,#3cf 365px 372px,#046 373px 380px,#3cf 381px 387px,#0ae 388px 390px,#3cf 391px 395px,#046 396px 400px,#012 401px 406px,#0ae 407px 408px,#07a 409px 413px,#0ae 414px 416px,#07a 417px 419px,#012 420px 424px,#0ae 425px 426px,#046 427px 429px,#3cf 430px 437px,#0ae 438px 439px,#6df 440px 445px,#0ae 446px 458px,#3cf 459px 472px)"></div><div class="a" style="left:368px;top:367.82px;width:30px;height:21.86px;background:linear-gradient(90deg,#012 0px 10px,#046 11px 13px,#6df 14px 16px,#046 17px 18px,#07a 19px 21px,#0ae 22px 23px,#012 24px 30px)"></div><div class="a" style="left:443px;top:367.82px;width:476px;height:21.86px;background:linear-gradient(90deg,#012 0px 5px,#0ae 6px 8px,#046 9px 13px,#0ae 14px 16px,#07a 17px 18px,#046 19px 31px,#012 32px 39px,#07a 40px 44px,#012 45px 47px,#3cf 48px 49px,#012 50px 52px,#0ae 53px 55px,#3cf 56px 57px,#046 58px 62px,#3cf 63px 65px,#0ae 66px 68px,#07a 69px 73px,#046 74px 78px,#07a 79px 86px,#046 87px 96px,#012 97px 112px,#046 113px 117px,#07a 118px 120px,#0ae 121px 122px,#046 123px 125px,#012 126px 130px,#07a 131px 135px,#0ae 136px 138px,#3cf 139px 140px,#012 141px 146px,#046 147px 153px,#07a 154px 156px,#046 157px 159px,#3cf 160px 161px,#07a 162px 166px,#0ae 167px 169px,#07a 170px 174px,#045 175px 217px,#068 218px 236px,#045 237px 252px,#012 253px 398px,#045 399px 476px)"></div><div class="a" style="left:309px;top:389.08px;width:9px;height:21.86px;background:linear-gradient(90deg,#046 0px 5px,#07a 6px 9px)"></div><div class="a" style="left:361px;top:389.08px;width:43px;height:21.86px;background:linear-gradient(90deg,#3cf 0px 3px,#07a 4px 8px,#046 9px 13px,#012 14px 16px,#3cf 17px 18px,#012 19px 21px,#0ae 22px 23px,#07a 24px 26px,#012 27px 42px,#0ae 42px 43px)"></div><div class="a" style="left:438px;top:389.08px;width:481px;height:21.86px;background:linear-gradient(90deg,#0ae 0px 5px,#3cf 6px 8px,#0ae 9px 10px,#07a 11px 13px,#3cf 14px 16px,#0ae 17px 18px,#3cf 19px 21px,#012 22px 26px,#3cf 27px 31px,#012 32px 42px,#3cf 43px 44px,#046 45px 47px,#012 48px 49px,#0ae 50px 52px,#012 53px 57px,#046 58px 62px,#07a 63px 70px,#012 71px 81px,#046 82px 83px,#07a 84px 86px,#0ae 87px 88px,#046 89px 94px,#012 95px 96px,#0ae 97px 99px,#012 100px 107px,#0ae 108px 109px,#07a 110px 112px,#3cf 113px 114px,#012 115px 117px,#046 118px 127px,#0ae 128px 130px,#07a 131px 133px,#0ae 134px 135px,#07a 136px 138px,#012 139px 140px,#3cf 141px 148px,#0ae 149px 151px,#3cf 152px 153px,#0ae 154px 177px,#07a 178px 182px,#3cf 183px 185px,#0ae 186px 187px,#07a 188px 195px,#0ae 196px 205px,#07a 206px 211px,#3cf 212px 213px,#046 214px 216px,#0ae 217px 221px,#3cf 222px 229px,#0ae 230px 234px,#3cf 235px 247px,#07a 248px 252px,#0ae 253px 260px,#07a 261px 265px,#0ae 266px 276px,#3cf 277px 278px,#0ae 279px 281px,#6df 282px 286px,#07a 287px 291px,#3cf 292px 299px,#07a 300px 304px,#3cf 305px 312px,#0ae 313px 325px,#3cf 326px 328px,#0ae 329px 330px,#3cf 331px 346px,#0ae 347px 354px,#3cf 355px 356px,#6df 357px 361px,#0ae 362px 369px,#3cf 370px 372px,#0ae 373px 380px,#3cf 381px 385px,#0ae 386px 393px,#3cf 394px 408px,#07a 409px 416px,#012 417px 419px,#0ae 420px 426px,#3cf 427px 434px,#6df 435px 442px,#0ae 443px 447px,#07a 448px 450px,#0ae 451px 452px,#3cf 453px 468px,#0ae 469px 478px,#3cf 479px 481px)"></div><div class="a" style="left:296px;top:410.34px;width:22px;height:21.86px;background:linear-gradient(90deg,#6df 0px 3px,#046 4px 13px,#0ae 14px 16px,#012 17px 21px,#07a 21px 22px)"></div><div class="a" style="left:353px;top:410.34px;width:68px;height:21.86px;background:linear-gradient(90deg,#07a 0px 3px,#012 4px 5px,#0ae 6px 8px,#3cf 9px 10px,#012 11px 13px,#046 14px 21px,#012 22px 26px,#07a 27px 31px,#012 32px 36px,#0ae 37px 39px,#046 40px 42px,#012 43px 44px,#07a 45px 47px,#012 48px 49px,#046 50px 52px,#3cf 53px 55px,#046 56px 62px,#012 63px 68px,#3cf 68px 68px)"></div><div class="a" style="left:438px;top:410.34px;width:481px;height:21.86px;background:linear-gradient(90deg,#012 0px 10px,#3cf 11px 16px,#0ae 17px 18px,#012 19px 26px,#07a 27px 31px,#0ae 32px 34px,#012 35px 36px,#3cf 37px 39px,#07a 40px 44px,#012 45px 47px,#07a 48px 52px,#012 53px 60px,#07a 61px 65px,#0ae 66px 70px,#046 71px 73px,#07a 74px 75px,#046 76px 83px,#07a 84px 88px,#0ae 89px 91px,#07a 92px 99px,#3cf 100px 101px,#046 102px 104px,#012 105px 481px)"></div><div class="a" style="left:291px;top:431.60px;width:628px;height:21.86px;background:linear-gradient(90deg,#07a 0px 10px,#046 11px 29px,#07a 30px 31px,#046 32px 39px,#07a 40px 49px,#0ae 50px 52px,#07a 53px 55px,#012 56px 60px,#07a 61px 68px,#3cf 69px 73px,#046 74px 75px,#012 76px 78px,#3cf 79px 81px,#012 82px 94px,#0ae 95px 96px,#012 97px 99px,#046 100px 112px,#3cf 113px 117px,#012 118px 125px,#07a 126px 130px,#046 131px 138px,#3cf 139px 143px,#012 144px 148px,#0ae 149px 151px,#012 152px 161px,#046 162px 166px,#012 167px 172px,#046 173px 177px,#012 178px 185px,#046 186px 195px,#012 196px 200px,#3cf 201px 203px,#0ae 204px 205px,#07a 206px 211px,#046 212px 213px,#012 214px 216px,#07a 217px 218px,#012 219px 221px,#3cf 222px 224px,#012 225px 231px,#046 232px 247px,#012 248px 255px,#045 256px 266px,#07a 266px 267px,#045 268px 399px,#07a 399px 400px,#045 401px 628px)"></div><div class="a" style="left:230px;top:452.86px;width:9px;height:21.86px;background:linear-gradient(90deg,#012 0px 5px,#3cf 6px 8px,#012 8px 9px)"></div><div class="a" style="left:263px;top:452.86px;width:656px;height:21.86px;background:linear-gradient(90deg,#046 0px 3px,#012 4px 5px,#046 6px 13px,#3cf 14px 16px,#07a 17px 26px,#012 27px 29px,#07a 30px 31px,#046 32px 42px,#012 43px 49px,#3cf 50px 52px,#012 53px 57px,#046 58px 60px,#07a 61px 65px,#0ae 66px 70px,#07a 71px 73px,#046 74px 75px,#012 76px 81px,#0ae 82px 83px,#046 84px 91px,#012 92px 94px,#0ae 95px 96px,#012 97px 104px,#046 105px 117px,#0ae 118px 120px,#012 121px 125px,#07a 126px 130px,#012 131px 138px,#3cf 139px 143px,#012 144px 151px,#0ae 152px 153px,#012 154px 161px,#046 162px 166px,#07a 167px 169px,#012 170px 172px,#046 173px 177px,#012 178px 185px,#6df 186px 187px,#0ae 188px 190px,#012 191px 200px,#07a 201px 205px,#012 206px 211px,#046 212px 221px,#012 222px 224px,#046 225px 229px,#07a 230px 242px,#046 243px 250px,#012 251px 257px,#046 258px 263px,#012 264px 270px,#07a 271px 273px,#046 274px 278px,#045 279px 294px,#07a 294px 295px,#045 296px 364px,#07a 364px 365px,#045 366px 427px,#07a 427px 428px,#045 429px 464px,#07a 464px 465px,#045 466px 656px)"></div><div class="a" style="left:194px;top:474.12px;width:725px;height:21.86px;background:linear-gradient(90deg,#046 0px 3px,#3cf 4px 5px,#012 6px 10px,#046 11px 13px,#012 14px 21px,#046 22px 29px,#07a 30px 36px,#012 37px 42px,#046 43px 49px,#07a 50px 57px,#046 58px 62px,#012 63px 65px,#07a 66px 68px,#0ae 69px 70px,#3cf 71px 73px,#012 74px 75px,#046 76px 78px,#0ae 79px 83px,#07a 84px 91px,#3cf 92px 94px,#07a 95px 101px,#012 102px 104px,#046 105px 109px,#07a 110px 112px,#046 113px 125px,#012 126px 130px,#046 131px 135px,#012 136px 138px,#046 139px 143px,#012 144px 146px,#046 147px 153px,#012 154px 156px,#046 157px 159px,#07a 160px 161px,#3cf 162px 166px,#046 167px 172px,#07a 173px 174px,#3cf 175px 177px,#012 178px 187px,#0ae 188px 190px,#3cf 191px 195px,#046 196px 198px,#012 199px 205px,#0ae 206px 213px,#3cf 214px 218px,#046 219px 221px,#012 222px 226px,#07a 227px 231px,#0ae 232px 234px,#3cf 235px 237px,#0ae 238px 239px,#012 240px 247px,#07a 248px 252px,#046 253px 257px,#3cf 258px 260px,#0ae 261px 263px,#012 264px 265px,#046 266px 268px,#07a 269px 270px,#012 271px 276px,#0ae 277px 278px,#012 279px 286px,#3cf 287px 294px,#6df 295px 296px,#3cf 297px 299px,#07a 300px 304px,#6df 305px 307px,#3cf 308px 315px,#0ae 316px 322px,#3cf 323px 330px,#0ae 331px 335px,#3cf 336px 343px,#0ae 344px 361px,#3cf 362px 364px,#0ae 365px 372px,#012 373px 374px,#3cf 375px 377px,#0ae 378px 395px,#3cf 396px 400px,#012 401px 406px,#3cf 407px 411px,#0ae 412px 413px,#3cf 414px 424px,#046 425px 432px,#3cf 433px 434px,#07a 435px 439px,#3cf 440px 450px,#0ae 451px 452px,#3cf 453px 481px,#0ae 482px 484px,#3cf 485px 494px,#0ae 495px 499px,#3cf 500px 502px,#0ae 503px 510px,#3cf 511px 515px,#0ae 516px 517px,#3cf 518px 530px,#0ae 531px 538px,#07a 539px 543px,#0ae 544px 546px,#3cf 547px 549px,#6df 550px 551px,#3cf 552px 559px,#6df 560px 564px,#3cf 565px 572px,#0ae 573px 577px,#3cf 578px 588px,#0ae 589px 598px,#046 599px 601px,#3cf 602px 606px,#0ae 607px 608px,#3cf 609px 616px,#012 617px 621px,#3cf 622px 634px,#0ae 635px 658px,#3cf 659px 663px,#6df 664px 676px,#3cf 677px 692px,#07a 693px 694px,#0ae 695px 699px,#046 700px 702px,#07a 703px 710px,#6df 711px 715px,#3cf 716px 718px,#0ae 719px 720px,#3cf 721px 725px)"></div><div class="a" style="left:131px;top:495.38px;width:788px;height:21.86px;background:linear-gradient(90deg,#046 0px 8px,#012 9px 13px,#046 14px 18px,#0ae 19px 21px,#012 22px 23px,#3cf 24px 26px,#046 27px 42px,#3cf 43px 44px,#0ae 45px 47px,#07a 48px 49px,#046 50px 52px,#3cf 53px 55px,#0ae 56px 57px,#046 58px 60px,#07a 61px 68px,#3cf 69px 70px,#012 71px 86px,#046 87px 88px,#3cf 89px 91px,#012 92px 94px,#3cf 95px 96px,#046 97px 101px,#0ae 102px 104px,#07a 105px 107px,#012 108px 109px,#0ae 110px 114px,#3cf 115px 117px,#046 118px 120px,#012 121px 125px,#3cf 126px 127px,#0ae 128px 130px,#07a 131px 135px,#0ae 136px 138px,#012 139px 140px,#07a 141px 148px,#3cf 149px 151px,#012 152px 156px,#3cf 157px 159px,#07a 160px 164px,#012 165px 169px,#0ae 170px 172px,#046 173px 179px,#012 180px 187px,#0ae 188px 190px,#07a 191px 195px,#012 196px 198px,#046 199px 205px,#07a 206px 208px,#3cf 209px 211px,#046 212px 213px,#07a 214px 216px,#012 217px 224px,#046 225px 231px,#0ae 232px 234px,#07a 235px 247px,#046 248px 255px,#012 256px 263px,#046 264px 270px,#012 271px 276px,#3cf 277px 278px,#07a 279px 281px,#3cf 282px 283px,#012 284px 286px,#046 287px 291px,#012 292px 299px,#046 300px 307px,#0ae 308px 309px,#046 310px 325px,#07a 326px 333px,#0ae 334px 335px,#046 336px 341px,#045 342px 450px,#000 451px 452px,#045 453px 548px,#000 549px 550px,#045 551px 678px,#000 679px 680px,#045 681px 760px,#000 761px 762px,#045 763px 788px)"></div><div class="a" style="left:0px;top:516.64px;width:57px;height:21.86px;background:linear-gradient(90deg,#0ae 0px 3px,#046 4px 18px,#3cf 19px 23px,#0ae 24px 29px,#046 30px 31px,#012 32px 34px,#0ae 35px 36px,#3cf 37px 39px,#012 40px 42px,#07a 43px 44px,#046 45px 47px,#3cf 48px 52px,#046 53px 57px)"></div><div class="a" style="left:120px;top:516.64px;width:799px;height:21.86px;background:linear-gradient(90deg,#046 0px 3px,#012 4px 5px,#07a 6px 8px,#046 9px 18px,#3cf 19px 21px,#012 22px 29px,#046 30px 31px,#012 32px 44px,#07a 45px 55px,#3cf 56px 60px,#012 61px 62px,#046 63px 65px,#3cf 66px 68px,#012 69px 81px,#046 82px 86px,#012 87px 101px,#0ae 102px 109px,#046 110px 112px,#3cf 113px 117px,#046 118px 120px,#3cf 121px 122px,#046 123px 138px,#07a 139px 140px,#012 141px 143px,#046 144px 148px,#012 149px 153px,#046 154px 166px,#012 167px 169px,#0ae 170px 172px,#046 173px 174px,#012 175px 179px,#3cf 180px 185px,#012 186px 187px,#3cf 188px 190px,#012 191px 192px,#046 193px 198px,#012 199px 200px,#3cf 201px 203px,#012 204px 205px,#07a 206px 208px,#012 209px 216px,#3cf 217px 218px,#046 219px 221px,#6df 222px 224px,#3cf 225px 226px,#0ae 227px 229px,#046 230px 237px,#012 238px 239px,#07a 240px 242px,#046 243px 247px,#012 248px 257px,#0ae 258px 260px,#012 261px 268px,#0ae 269px 270px,#046 271px 278px,#07a 279px 283px,#046 284px 291px,#3cf 292px 294px,#6df 295px 296px,#07a 297px 299px,#046 300px 304px,#07a 305px 312px,#012 313px 317px,#07a 318px 322px,#046 323px 335px,#0ae 336px 338px,#012 339px 341px,#046 342px 343px,#012 344px 348px,#0ae 349px 351px,#046 352px 364px,#012 365px 367px,#046 368px 369px,#012 370px 374px,#07a 375px 377px,#012 378px 393px,#07a 394px 395px,#046 396px 400px,#012 401px 413px,#046 414px 416px,#012 417px 421px,#0ae 422px 424px,#07a 425px 432px,#046 433px 434px,#07a 435px 442px,#046 443px 447px,#012 448px 458px,#046 459px 463px,#012 464px 465px,#046 466px 473px,#012 474px 478px,#07a 479px 481px,#046 482px 494px,#012 495px 504px,#07a 505px 510px,#0ae 511px 512px,#012 513px 517px,#046 518px 525px,#0ae 526px 528px,#012 529px 533px,#046 534px 546px,#0ae 547px 549px,#012 550px 554px,#0ae 555px 556px,#012 557px 575px,#046 576px 577px,#012 578px 588px,#046 589px 590px,#012 591px 593px,#046 594px 598px,#012 599px 608px,#046 609px 614px,#012 615px 629px,#046 630px 632px,#012 633px 634px,#07a 635px 640px,#046 641px 650px,#012 651px 655px,#046 656px 666px,#012 667px 668px,#046 669px 684px,#012 685px 686px,#046 687px 694px,#012 695px 697px,#046 698px 705px,#012 706px 715px,#046 716px 720px,#012 721px 731px,#07a 732px 738px,#046 739px 746px,#012 747px 754px,#046 755px 757px,#07a 758px 770px,#046 771px 772px,#012 773px 775px,#046 776px 783px,#012 784px 788px,#046 789px 799px)"></div><div class="a" style="left:0px;top:537.90px;width:68px;height:21.86px;background:linear-gradient(90deg,#012 0px 5px,#3cf 6px 10px,#012 11px 21px,#3cf 22px 23px,#0ae 24px 29px,#046 30px 31px,#012 32px 47px,#046 48px 52px,#0ae 53px 55px,#012 56px 57px,#3cf 58px 60px,#012 61px 68px,#07a 68px 68px)"></div><div class="a" style="left:112px;top:537.90px;width:807px;height:21.86px;background:linear-gradient(90deg,#0ae 0px 3px,#07a 4px 5px,#046 6px 8px,#012 9px 13px,#046 14px 21px,#3cf 22px 23px,#07a 24px 26px,#3cf 27px 29px,#012 30px 47px,#3cf 48px 49px,#0ae 50px 52px,#012 53px 60px,#046 61px 75px,#07a 76px 83px,#3cf 84px 86px,#0ae 87px 88px,#046 89px 96px,#0ae 97px 99px,#3cf 100px 101px,#012 102px 104px,#0ae 105px 107px,#012 108px 112px,#046 113px 120px,#012 121px 133px,#046 134px 135px,#0ae 136px 138px,#6df 139px 143px,#0ae 144px 146px,#012 147px 153px,#3cf 154px 156px,#07a 157px 159px,#046 160px 174px,#0ae 175px 177px,#046 178px 185px,#3cf 186px 187px,#046 188px 198px,#07a 199px 203px,#012 204px 213px,#0ae 214px 216px,#046 217px 224px,#012 225px 226px,#3cf 227px 229px,#012 230px 231px,#046 232px 244px,#07a 245px 250px,#0ae 251px 252px,#012 253px 263px,#046 264px 268px,#07a 269px 276px,#046 277px 281px,#07a 282px 283px,#046 284px 294px,#012 295px 304px,#3cf 305px 307px,#012 308px 309px,#046 310px 312px,#6df 313px 315px,#046 316px 322px,#0ae 323px 328px,#012 329px 330px,#046 331px 341px,#012 342px 343px,#046 344px 346px,#0ae 347px 354px,#046 355px 359px,#07a 360px 361px,#046 362px 364px,#0ae 365px 377px,#3cf 378px 382px,#0ae 383px 385px,#07a 386px 395px,#0ae 396px 406px,#012 407px 408px,#0ae 409px 411px,#07a 412px 419px,#3cf 420px 421px,#012 422px 426px,#046 427px 432px,#07a 433px 442px,#3cf 443px 445px,#046 446px 450px,#012 451px 452px,#3cf 453px 458px,#07a 459px 471px,#012 472px 476px,#046 477px 481px,#0ae 482px 489px,#012 490px 491px,#07a 492px 504px,#046 505px 510px,#012 511px 515px,#07a 516px 523px,#0ae 524px 528px,#046 529px 538px,#0ae 539px 541px,#046 542px 543px,#0ae 544px 546px,#07a 547px 549px,#046 550px 551px,#0ae 552px 556px,#012 557px 559px,#3cf 560px 562px,#0ae 563px 567px,#012 568px 569px,#0ae 570px 572px,#07a 573px 580px,#046 581px 598px,#07a 599px 603px,#046 604px 606px,#012 607px 614px,#07a 615px 616px,#0ae 617px 624px,#046 625px 627px,#0ae 628px 632px,#07a 633px 637px,#0ae 638px 645px,#046 646px 650px,#3cf 651px 653px,#0ae 654px 666px,#046 667px 668px,#0ae 669px 673px,#3cf 674px 676px,#07a 677px 681px,#0ae 682px 686px,#012 687px 689px,#07a 690px 692px,#046 693px 694px,#0ae 695px 697px,#07a 698px 707px,#012 708px 710px,#07a 711px 712px,#0ae 713px 718px,#046 719px 725px,#07a 726px 746px,#0ae 747px 751px,#3cf 752px 754px,#07a 755px 757px,#3cf 758px 759px,#0ae 760px 780px,#07a 781px 783px,#0ae 784px 788px,#07a 789px 793px,#046 794px 796px,#0ae 797px 801px,#07a 802px 803px,#0ae 804px 806px,#07a 806px 807px)"></div><div class="a" style="left:0px;top:559.16px;width:78px;height:21.86px;background:linear-gradient(90deg,#07a 0px 5px,#012 6px 10px,#046 11px 18px,#0ae 19px 21px,#07a 22px 23px,#046 24px 31px,#3cf 32px 34px,#046 35px 36px,#012 37px 44px,#3cf 45px 49px,#012 50px 55px,#046 56px 57px,#012 58px 62px,#0ae 63px 65px,#012 66px 68px,#3cf 69px 70px,#0ae 71px 75px,#046 76px 78px)"></div><div class="a" style="left:106px;top:559.16px;width:813px;height:21.86px;background:linear-gradient(90deg,#07a 0px 3px,#012 4px 5px,#3cf 6px 10px,#0ae 11px 13px,#3cf 14px 16px,#0ae 17px 18px,#012 19px 21px,#0ae 22px 23px,#012 24px 29px,#046 30px 36px,#0ae 37px 44px,#012 45px 49px,#046 50px 62px,#3cf 63px 65px,#046 66px 70px,#012 71px 73px,#046 74px 75px,#07a 76px 78px,#0ae 79px 81px,#046 82px 83px,#012 84px 91px,#046 92px 94px,#012 95px 96px,#3cf 97px 99px,#0ae 100px 101px,#012 102px 109px,#3cf 110px 112px,#046 113px 120px,#012 121px 133px,#046 134px 143px,#07a 144px 148px,#0ae 149px 151px,#046 152px 159px,#07a 160px 166px,#046 167px 169px,#012 170px 174px,#3cf 175px 177px,#07a 178px 179px,#046 180px 182px,#012 183px 185px,#07a 186px 190px,#3cf 191px 192px,#07a 193px 195px,#0ae 196px 198px,#046 199px 200px,#012 201px 205px,#046 206px 211px,#012 212px 216px,#07a 217px 221px,#046 222px 226px,#3cf 227px 229px,#012 230px 234px,#046 235px 239px,#07a 240px 242px,#0ae 243px 244px,#012 245px 247px,#3cf 248px 255px,#012 256px 263px,#046 264px 268px,#3cf 269px 270px,#0ae 271px 273px,#046 274px 276px,#0ae 277px 278px,#3cf 279px 281px,#0ae 282px 283px,#07a 284px 286px,#012 287px 294px,#07a 295px 299px,#3cf 300px 302px,#046 303px 307px,#3cf 308px 309px,#046 310px 312px,#0ae 313px 315px,#07a 316px 325px,#046 326px 328px,#3cf 329px 330px,#046 331px 335px,#6df 336px 338px,#012 339px 343px,#3cf 344px 346px,#0ae 347px 351px,#3cf 352px 354px,#0ae 355px 356px,#3cf 357px 359px,#6df 360px 367px,#0ae 368px 372px,#3cf 373px 385px,#0ae 386px 387px,#07a 388px 393px,#3cf 394px 395px,#0ae 396px 400px,#07a 401px 403px,#0ae 404px 411px,#07a 412px 413px,#0ae 414px 421px,#3cf 422px 434px,#0ae 435px 445px,#3cf 446px 447px,#0ae 448px 452px,#3cf 453px 458px,#0ae 459px 463px,#3cf 464px 471px,#046 472px 478px,#3cf 479px 491px,#0ae 492px 497px,#3cf 498px 499px,#6df 500px 502px,#3cf 503px 507px,#6df 508px 510px,#3cf 511px 512px,#0ae 513px 517px,#6df 518px 520px,#0ae 521px 525px,#07a 526px 533px,#3cf 534px 543px,#0ae 544px 549px,#3cf 550px 562px,#0ae 563px 564px,#07a 565px 567px,#0ae 568px 580px,#3cf 581px 582px,#6df 583px 585px,#3cf 586px 588px,#0ae 589px 595px,#3cf 596px 621px,#0ae 622px 624px,#3cf 625px 629px,#6df 630px 632px,#07a 633px 637px,#3cf 638px 640px,#0ae 641px 645px,#012 646px 647px,#0ae 648px 650px,#07a 651px 655px,#0ae 656px 658px,#6df 659px 668px,#046 669px 671px,#0ae 672px 673px,#3cf 674px 679px,#0ae 680px 686px,#3cf 687px 697px,#0ae 698px 699px,#3cf 700px 715px,#0ae 716px 728px,#07a 729px 731px,#0ae 732px 736px,#3cf 737px 744px,#0ae 745px 746px,#3cf 747px 751px,#0ae 752px 754px,#046 755px 757px,#012 758px 762px,#3cf 763px 767px,#6df 768px 772px,#3cf 773px 775px,#0ae 776px 780px,#3cf 781px 793px,#0ae 794px 796px,#3cf 797px 809px,#6df 810px 811px,#3cf 812px 813px)"></div><div class="a" style="left:0px;top:580.42px;width:84px;height:21.86px;background:linear-gradient(90deg,#046 0px 3px,#0ae 4px 5px,#012 6px 10px,#046 11px 16px,#012 17px 29px,#07a 30px 34px,#012 35px 39px,#3cf 40px 42px,#046 43px 44px,#012 45px 52px,#046 53px 55px,#07a 56px 60px,#012 61px 68px,#046 69px 73px,#07a 74px 78px,#012 79px 83px,#3cf 83px 84px)"></div><div class="a" style="left:99px;top:580.42px;width:514px;height:21.86px;background:linear-gradient(90deg,#046 0px 8px,#012 9px 10px,#3cf 11px 13px,#0ae 14px 18px,#07a 19px 21px,#046 22px 23px,#3cf 24px 29px,#046 30px 31px,#07a 32px 36px,#0ae 37px 39px,#046 40px 49px,#07a 50px 57px,#012 58px 75px,#046 76px 83px,#3cf 84px 86px,#0ae 87px 88px,#012 89px 91px,#3cf 92px 94px,#046 95px 109px,#0ae 110px 114px,#046 115px 122px,#0ae 123px 125px,#046 126px 133px,#012 134px 138px,#0ae 139px 140px,#07a 141px 146px,#012 147px 153px,#046 154px 161px,#012 162px 164px,#07a 165px 172px,#012 173px 177px,#046 178px 205px,#0ae 206px 211px,#012 212px 213px,#046 214px 221px,#012 222px 229px,#046 230px 231px,#07a 232px 237px,#046 238px 250px,#07a 251px 255px,#012 256px 263px,#046 264px 270px,#07a 271px 276px,#046 277px 281px,#0ae 282px 283px,#07a 284px 289px,#046 290px 294px,#012 295px 302px,#0ae 303px 304px,#012 305px 309px,#046 310px 312px,#3cf 313px 315px,#0ae 316px 317px,#046 318px 325px,#012 326px 335px,#0ae 336px 338px,#012 339px 341px,#046 342px 348px,#012 349px 514px)"></div><div class="a" style="left:0px;top:601.68px;width:613px;height:21.86px;background:linear-gradient(90deg,#012 0px 5px,#0ae 6px 8px,#012 9px 10px,#0ae 11px 16px,#07a 17px 21px,#012 22px 26px,#07a 27px 29px,#012 30px 47px,#0ae 48px 49px,#046 50px 55px,#0ae 56px 57px,#012 58px 60px,#3cf 61px 62px,#07a 63px 68px,#012 69px 70px,#046 71px 73px,#0ae 74px 75px,#046 76px 81px,#07a 82px 83px,#012 84px 86px,#046 87px 94px,#3cf 95px 101px,#07a 102px 107px,#012 108px 109px,#046 110px 112px,#012 113px 120px,#046 121px 130px,#0ae 131px 133px,#012 134px 143px,#07a 144px 148px,#012 149px 151px,#046 152px 159px,#0ae 160px 161px,#012 162px 166px,#0ae 167px 169px,#3cf 170px 172px,#0ae 173px 177px,#07a 178px 182px,#046 183px 190px,#07a 191px 192px,#012 193px 198px,#3cf 199px 200px,#046 201px 208px,#012 209px 213px,#3cf 214px 216px,#012 217px 224px,#07a 225px 229px,#046 230px 231px,#07a 232px 239px,#046 240px 244px,#07a 245px 250px,#046 251px 252px,#3cf 253px 255px,#046 256px 257px,#0ae 258px 260px,#07a 261px 268px,#012 269px 276px,#07a 277px 283px,#046 284px 294px,#012 295px 309px,#0ae 310px 312px,#3cf 313px 315px,#012 316px 320px,#046 321px 325px,#07a 326px 330px,#046 331px 333px,#012 334px 335px,#0ae 336px 338px,#046 339px 341px,#0ae 342px 343px,#012 344px 351px,#07a 352px 354px,#0ae 355px 356px,#3cf 357px 382px,#0ae 383px 385px,#3cf 386px 393px,#07a 394px 403px,#012 404px 408px,#07a 409px 411px,#3cf 412px 413px,#012 414px 421px,#0ae 422px 429px,#07a 430px 437px,#046 438px 442px,#0ae 443px 445px,#3cf 446px 447px,#012 448px 455px,#07a 456px 463px,#012 464px 471px,#3cf 472px 473px,#0ae 474px 476px,#3cf 477px 481px,#07a 482px 484px,#3cf 485px 489px,#0ae 490px 491px,#3cf 492px 502px,#0ae 503px 504px,#3cf 505px 512px,#07a 513px 515px,#6df 516px 517px,#3cf 518px 520px,#6df 521px 525px,#012 526px 528px,#0ae 529px 530px,#3cf 531px 549px,#0ae 550px 559px,#07a 560px 564px,#046 565px 569px,#3cf 570px 582px,#0ae 583px 585px,#6df 586px 588px,#0ae 589px 595px,#046 596px 598px,#0ae 599px 601px,#3cf 602px 606px,#0ae 607px 613px)"></div><div class="a" style="left:0px;top:622.94px;width:613px;height:21.86px;background:linear-gradient(90deg,#07a 0px 5px,#012 6px 8px,#3cf 9px 10px,#0ae 11px 13px,#046 14px 18px,#07a 19px 26px,#0ae 27px 29px,#046 30px 31px,#012 32px 34px,#046 35px 47px,#012 48px 52px,#046 53px 57px,#0ae 58px 60px,#012 61px 65px,#3cf 66px 68px,#046 69px 73px,#07a 74px 75px,#0ae 76px 78px,#046 79px 86px,#3cf 87px 88px,#046 89px 91px,#0ae 92px 94px,#046 95px 104px,#012 105px 112px,#046 113px 120px,#0ae 121px 122px,#046 123px 146px,#3cf 147px 148px,#0ae 149px 151px,#012 152px 159px,#3cf 160px 161px,#07a 162px 166px,#012 167px 174px,#07a 175px 177px,#012 178px 190px,#0ae 191px 192px,#3cf 193px 195px,#046 196px 198px,#012 199px 216px,#3cf 217px 218px,#07a 219px 226px,#012 227px 231px,#07a 232px 234px,#0ae 235px 242px,#012 243px 250px,#0ae 251px 252px,#012 253px 257px,#046 258px 260px,#012 261px 268px,#0ae 269px 270px,#012 271px 273px,#046 274px 276px,#0ae 277px 278px,#012 279px 283px,#0ae 284px 286px,#046 287px 296px,#012 297px 304px,#046 305px 307px,#012 308px 309px,#046 310px 317px,#012 318px 322px,#046 323px 330px,#012 331px 356px,#000 357px 400px,#012 401px 405px,#3cf 406px 408px,#07a 409px 413px,#046 414px 418px,#3cf 419px 421px,#012 422px 426px,#046 427px 429px,#0ae 430px 431px,#012 432px 434px,#0ae 435px 436px,#012 437px 444px,#0ae 445px 457px,#3cf 458px 462px,#0ae 463px 470px,#3cf 471px 478px,#07a 479px 481px,#046 482px 483px,#0ae 484px 486px,#3cf 487px 496px,#0ae 497px 499px,#3cf 500px 504px,#0ae 505px 514px,#3cf 515px 520px,#0ae 521px 525px,#012 526px 527px,#3cf 528px 530px,#0ae 531px 533px,#046 534px 540px,#0ae 541px 551px,#3cf 552px 566px,#0ae 567px 569px,#3cf 570px 572px,#0ae 573px 579px,#6df 580px 585px,#0ae 586px 598px,#3cf 599px 600px,#0ae 601px 603px,#07a 604px 608px,#3cf 609px 613px)"></div><div class="a" style="left:0px;top:644.20px;width:433px;height:21.86px;background:linear-gradient(90deg,#046 0px 3px,#07a 4px 8px,#012 9px 13px,#046 14px 16px,#0ae 17px 21px,#07a 22px 23px,#012 24px 29px,#07a 30px 31px,#0ae 32px 34px,#012 35px 39px,#046 40px 42px,#0ae 43px 44px,#07a 45px 47px,#0ae 48px 49px,#046 50px 65px,#012 66px 68px,#046 69px 73px,#07a 74px 75px,#0ae 76px 81px,#046 82px 88px,#0ae 89px 91px,#012 92px 96px,#3cf 97px 99px,#046 100px 107px,#012 108px 112px,#3cf 113px 114px,#07a 115px 117px,#3cf 118px 120px,#046 121px 122px,#012 123px 130px,#07a 131px 133px,#012 134px 140px,#07a 141px 148px,#046 149px 156px,#012 157px 159px,#3cf 160px 161px,#07a 162px 166px,#3cf 167px 172px,#07a 173px 174px,#012 175px 177px,#0ae 178px 179px,#3cf 180px 182px,#046 183px 187px,#3cf 188px 190px,#07a 191px 198px,#3cf 199px 200px,#046 201px 203px,#07a 204px 205px,#012 206px 208px,#046 209px 211px,#012 212px 218px,#046 219px 229px,#3cf 230px 231px,#046 232px 247px,#07a 248px 255px,#012 256px 263px,#07a 264px 265px,#012 266px 270px,#0ae 271px 276px,#046 277px 281px,#012 282px 294px,#046 295px 302px,#012 303px 307px,#046 308px 322px,#6df 323px 325px,#046 326px 328px,#0ae 329px 333px,#046 334px 338px,#3cf 339px 343px,#046 344px 346px,#07a 347px 348px,#046 349px 401px,#000 402px 412px,#046 413px 417px,#07a 418px 422px,#046 423px 425px,#012 426px 428px,#046 429px 433px)"></div><div class="a" style="left:0px;top:665.46px;width:400px;height:21.86px;background:linear-gradient(90deg,#046 0px 3px,#012 4px 5px,#0ae 6px 8px,#046 9px 13px,#3cf 14px 16px,#012 17px 26px,#0ae 27px 29px,#012 30px 36px,#07a 37px 39px,#0ae 40px 42px,#012 43px 47px,#046 48px 49px,#012 50px 52px,#046 53px 57px,#07a 58px 60px,#012 61px 62px,#0ae 63px 65px,#3cf 66px 68px,#0ae 69px 70px,#012 71px 73px,#3cf 74px 75px,#012 76px 78px,#3cf 79px 81px,#046 82px 86px,#07a 87px 91px,#0ae 92px 94px,#012 95px 96px,#046 97px 104px,#3cf 105px 107px,#012 108px 117px,#0ae 118px 120px,#046 121px 122px,#07a 123px 130px,#046 131px 135px,#3cf 136px 138px,#012 139px 146px,#3cf 147px 148px,#07a 149px 161px,#012 162px 166px,#07a 167px 169px,#046 170px 172px,#012 173px 177px,#046 178px 179px,#07a 180px 187px,#0ae 188px 190px,#07a 191px 192px,#046 193px 198px,#012 199px 200px,#0ae 201px 203px,#3cf 204px 205px,#046 206px 213px,#07a 214px 216px,#012 217px 226px,#046 227px 229px,#0ae 230px 231px,#046 232px 239px,#0ae 240px 242px,#012 243px 244px,#046 245px 247px,#07a 248px 255px,#046 256px 263px,#012 264px 270px,#07a 271px 278px,#012 279px 286px,#3cf 287px 289px,#012 290px 291px,#3cf 292px 294px,#012 295px 299px,#046 300px 302px,#0ae 303px 307px,#3cf 308px 309px,#0ae 310px 315px,#3cf 316px 320px,#0ae 321px 328px,#3cf 329px 335px,#07a 336px 338px,#0ae 339px 343px,#3cf 344px 356px,#07a 357px 359px,#3cf 360px 361px,#0ae 362px 369px,#3cf 370px 390px,#0ae 391px 393px,#3cf 394px 395px,#0ae 396px 400px)"></div><div class="a" style="left:0px;top:686.72px;width:400px;height:21.86px;background:linear-gradient(90deg,#07a 0px 5px,#0ae 6px 8px,#012 9px 10px,#046 11px 16px,#07a 17px 18px,#046 19px 29px,#012 30px 39px,#07a 40px 42px,#046 43px 44px,#07a 45px 49px,#046 50px 52px,#012 53px 55px,#3cf 56px 57px,#012 58px 60px,#046 61px 62px,#3cf 63px 65px,#046 66px 70px,#07a 71px 73px,#046 74px 83px,#3cf 84px 86px,#046 87px 88px,#012 89px 96px,#07a 97px 101px,#0ae 102px 104px,#046 105px 109px,#0ae 110px 112px,#6df 113px 114px,#012 115px 120px,#07a 121px 127px,#046 128px 130px,#012 131px 140px,#046 141px 143px,#3cf 144px 146px,#012 147px 148px,#046 149px 156px,#07a 157px 161px,#3cf 162px 164px,#012 165px 172px,#046 173px 174px,#012 175px 177px,#046 178px 185px,#0ae 186px 187px,#07a 188px 190px,#046 191px 198px,#3cf 199px 200px,#046 201px 203px,#3cf 204px 208px,#012 209px 221px,#0ae 222px 224px,#046 225px 226px,#0ae 227px 231px,#046 232px 237px,#6df 238px 239px,#07a 240px 244px,#0ae 245px 247px,#3cf 248px 250px,#046 251px 252px,#012 253px 260px,#046 261px 273px,#012 274px 281px,#046 282px 286px,#0ae 287px 291px,#046 292px 294px,#0ae 295px 299px,#3cf 300px 304px,#046 305px 309px,#012 310px 312px,#046 313px 315px,#0ae 316px 317px,#012 318px 320px,#046 321px 322px,#012 323px 325px,#0ae 326px 328px,#012 329px 335px,#046 336px 338px,#012 339px 343px,#0ae 344px 346px,#046 347px 351px,#012 352px 356px,#046 357px 361px,#07a 362px 369px,#0ae 370px 374px,#046 375px 385px,#0ae 386px 387px,#012 388px 395px,#3cf 396px 398px,#0ae 399px 400px)"></div></div><div class="a" style="left:919px;top:-14.86px;width:38px;height:21.86px;background:#f00"></div><div class="a" style="left:919px;top:6.40px;width:38px;height:21.86px;background:#500"></div><div class="a" style="left:919px;top:27.66px;width:38px;height:21.86px;background:#500"></div><div class="a" style="left:919px;top:48.92px;width:38px;height:21.86px;background:#200"></div><div class="a" style="left:919px;top:70.18px;width:38px;height:21.86px;background:#200"></div><div class="a" style="left:919px;top:91.44px;width:38px;height:21.86px;background:#200"></div><div class="a" style="left:919px;top:112.70px;width:38px;height:21.86px;background:#fbb"></div><div class="a" style="left:919px;top:133.96px;width:38px;height:21.86px;background:#500"></div><div class="a" style="left:919px;top:155.22px;width:38px;height:21.86px;background:#500"></div><div class="a" style="left:919px;top:176.48px;width:38px;height:21.86px;background:#500"></div><div class="a" style="left:919px;top:197.74px;width:38px;height:21.86px;background:#f33"></div><div class="a" style="left:919px;top:219.00px;width:38px;height:21.86px;background:#200"></div><div class="a" style="left:919px;top:240.26px;width:38px;height:21.86px;background:#012"></div><div class="a" style="left:919px;top:261.52px;width:38px;height:21.86px;background:#045"></div><div class="a" style="left:919px;top:282.78px;width:38px;height:21.86px;background:#0ae"></div><div class="a" style="left:919px;top:304.04px;width:38px;height:21.86px;background:#045"></div><div class="a" style="left:919px;top:325.30px;width:38px;height:21.86px;background:#045"></div><div class="a" style="left:919px;top:346.56px;width:38px;height:21.86px;background:#045"></div><div class="a" style="left:919px;top:367.82px;width:38px;height:21.86px;background:#045"></div><div class="a" style="left:919px;top:389.08px;width:38px;height:21.86px;background:#045"></div><div class="a" style="left:919px;top:410.34px;width:38px;height:21.86px;background:#012"></div><div class="a" style="left:919px;top:431.60px;width:38px;height:21.86px;background:#045"></div><div class="a" style="left:919px;top:452.86px;width:38px;height:21.86px;background:#08a"></div><div class="a" style="left:919px;top:474.12px;width:38px;height:21.86px;background:#3cf"></div><div class="a" style="left:919px;top:495.38px;width:38px;height:21.86px;background:#08a"></div><div class="a" style="left:919px;top:516.64px;width:38px;height:21.86px;background:#045"></div><div class="a" style="left:919px;top:537.90px;width:38px;height:21.86px;background:#0ae"></div><div class="a" style="left:919px;top:559.16px;width:38px;height:21.86px;background:#0ae"></div><div class="a" style="left:957px;top:219.00px;width:75px;height:21.86px;background:#f00"></div><div class="a" style="left:0;top:6px;width:1032px;height:1px;background:#8a8a8a"></div><div class="a" style="left:0;top:27px;width:1032px;height:1px;background:#8a8a8a"></div><div class="a" style="left:0;top:49px;width:1032px;height:1px;background:#8a8a8a"></div><div class="a" style="left:0;top:70px;width:1032px;height:1px;background:#8a8a8a"></div><div class="a" style="left:0;top:91px;width:1032px;height:1px;background:#8a8a8a"></div><div class="a" style="left:0;top:112px;width:1032px;height:1px;background:#8a8a8a"></div><div class="a" style="left:0;top:134px;width:1032px;height:1px;background:#8a8a8a"></div><div class="a" style="left:0;top:155px;width:1032px;height:1px;background:#8a8a8a"></div><div class="a" style="left:0;top:176px;width:1032px;height:1px;background:#8a8a8a"></div><div class="a" style="left:0;top:197px;width:1032px;height:1px;background:#8a8a8a"></div><div class="a" style="left:0;top:219px;width:1032px;height:1px;background:#8a8a8a"></div><div class="a" style="left:0;top:240px;width:1032px;height:1px;background:#8a8a8a"></div><div class="a" style="left:0;top:261px;width:1032px;height:1px;background:#8a8a8a"></div><div class="a" style="left:0;top:282px;width:1032px;height:1px;background:#8a8a8a"></div><div class="a" style="left:0;top:304px;width:1032px;height:1px;background:#8a8a8a"></div><div class="a" style="left:0;top:325px;width:1032px;height:1px;background:#8a8a8a"></div><div class="a" style="left:0;top:346px;width:1032px;height:1px;background:#8a8a8a"></div><div class="a" style="left:0;top:367px;width:1032px;height:1px;background:#8a8a8a"></div><div class="a" style="left:0;top:389px;width:1032px;height:1px;background:#8a8a8a"></div><div class="a" style="left:0;top:410px;width:1032px;height:1px;background:#8a8a8a"></div><div class="a" style="left:0;top:431px;width:1032px;height:1px;background:#8a8a8a"></div><div class="a" style="left:0;top:452px;width:1032px;height:1px;background:#8a8a8a"></div><div class="a" style="left:0;top:474px;width:1032px;height:1px;background:#8a8a8a"></div><div class="a" style="left:0;top:495px;width:1032px;height:1px;background:#8a8a8a"></div><div class="a" style="left:0;top:516px;width:1032px;height:1px;background:#8a8a8a"></div><div class="a" style="left:0;top:538px;width:1032px;height:1px;background:#8a8a8a"></div><div class="a" style="left:0;top:559px;width:1032px;height:1px;background:#8a8a8a"></div><div class="a" style="left:0;top:580px;width:1032px;height:1px;background:#8a8a8a"></div><div class="a" style="left:0;top:601px;width:1032px;height:1px;background:#8a8a8a"></div><div class="a" style="left:0;top:623px;width:1032px;height:1px;background:#8a8a8a"></div><div class="a" style="left:0;top:644px;width:1032px;height:1px;background:#8a8a8a"></div><div class="a" style="left:0;top:665px;width:1032px;height:1px;background:#8a8a8a"></div><div class="a" style="left:0;top:686px;width:1032px;height:1px;background:#8a8a8a"></div><div class="a" style="left:0;top:708px;width:1032px;height:1px;background:#8a8a8a"></div><div class="a" style="left:0;top:0;width:1px;height:693px;background:#8c8c8c"></div><div class="a" style="left:919px;top:0;width:1px;height:693px;background:#8c8c8c"></div><div class="a" style="left:0px;top:530.4px;width:3px;height:12px;border-top:2px solid #ff0;border-bottom:2px solid #ff0;background:linear-gradient(90deg,#f00 0px 3px)"></div><div class="a" style="left:3px;top:509.1px;width:2px;height:12px;border-top:2px solid #ff0;border-bottom:2px solid #ff0;background:linear-gradient(90deg,#f00 0px 2px)"></div><div class="a" style="left:5px;top:551.7px;width:4px;height:12px;border-top:2px solid #ff0;border-bottom:2px solid #ff0;background:linear-gradient(90deg,#f00 0px 3px,#1e90ff 3px 4px)"></div><div class="a" style="left:9px;top:530.4px;width:7px;height:12px;border-top:2px solid #ff0;border-bottom:2px solid #ff0;background:linear-gradient(90deg,#f00 0px 3px,#f00 3px 5px,#1e90ff 5px 7px)"></div><div class="a" style="left:16px;top:509.1px;width:5px;height:12px;border-top:2px solid #ff0;border-bottom:2px solid #ff0;background:linear-gradient(90deg,#f00 0px 3px,#1e90ff 3px 5px)"></div><div class="a" style="left:21px;top:530.4px;width:12px;height:12px;border-top:2px solid #ff0;border-bottom:2px solid #ff0;background:linear-gradient(90deg,#1e90ff 0px 3px,#1e90ff 3px 5px,#1e90ff 5px 8px,#1e90ff 8px 10px,#1e90ff 10px 12px)"></div><div class="a" style="left:33px;top:509.1px;width:4px;height:12px;border-top:2px solid #ff0;border-bottom:2px solid #ff0;background:linear-gradient(90deg,#f00 0px 3px,#f00 3px 4px)"></div><div class="a" style="left:37px;top:530.4px;width:9px;height:12px;border-top:2px solid #ff0;border-bottom:2px solid #ff0;background:linear-gradient(90deg,#1e90ff 0px 3px,#1e90ff 3px 5px,#1e90ff 5px 8px,#f00 8px 9px)"></div><div class="a" style="left:46px;top:551.7px;width:5px;height:12px;border-top:2px solid #ff0;border-bottom:2px solid #ff0;background:linear-gradient(90deg,#f00 0px 3px,#f00 3px 5px)"></div><div class="a" style="left:51px;top:509.1px;width:3px;height:12px;border-top:2px solid #ff0;border-bottom:2px solid #ff0;background:linear-gradient(90deg,#f00 0px 3px)"></div><div class="a" style="left:54px;top:530.4px;width:11px;height:12px;border-top:2px solid #ff0;border-bottom:2px solid #ff0;background:linear-gradient(90deg,#f00 0px 3px,#f00 3px 5px,#1e90ff 5px 8px,#1e90ff 8px 10px,#1e90ff 10px 11px)"></div><div class="a" style="left:65px;top:551.7px;width:10px;height:12px;border-top:2px solid #ff0;border-bottom:2px solid #ff0;background:linear-gradient(90deg,#1e90ff 0px 3px,#f00 3px 5px,#1e90ff 5px 8px,#f00 8px 10px)"></div><div class="a" style="left:75px;top:572.9px;width:6px;height:12px;border-top:2px solid #ff0;border-bottom:2px solid #ff0;background:linear-gradient(90deg,#1e90ff 0px 3px,#1e90ff 3px 5px,#1e90ff 5px 6px)"></div><div class="a" style="left:81px;top:594.2px;width:4px;height:12px;border-top:2px solid #ff0;border-bottom:2px solid #ff0;background:linear-gradient(90deg,#f00 0px 3px,#1e90ff 3px 4px)"></div><div class="a" style="left:85px;top:615.4px;width:12px;height:12px;border-top:2px solid #ff0;border-bottom:2px solid #ff0;background:linear-gradient(90deg,#f00 0px 3px,#1e90ff 3px 5px,#f00 5px 8px,#1e90ff 8px 10px,#1e90ff 10px 12px)"></div><div class="a" style="left:97px;top:594.2px;width:5px;height:12px;border-top:2px solid #ff0;border-bottom:2px solid #ff0;background:linear-gradient(90deg,#f00 0px 3px,#f00 3px 5px)"></div><div class="a" style="left:102px;top:572.9px;width:7px;height:12px;border-top:2px solid #ff0;border-bottom:2px solid #ff0;background:linear-gradient(90deg,#1e90ff 0px 3px,#f00 3px 5px,#1e90ff 5px 7px)"></div><div class="a" style="left:109px;top:551.7px;width:4px;height:12px;border-top:2px solid #ff0;border-bottom:2px solid #ff0;background:linear-gradient(90deg,#1e90ff 0px 3px,#1e90ff 3px 4px)"></div><div class="a" style="left:113px;top:572.9px;width:2px;height:12px;border-top:2px solid #ff0;border-bottom:2px solid #ff0;background:linear-gradient(90deg,#f00 0px 2px)"></div><div class="a" style="left:115px;top:530.4px;width:8px;height:12px;border-top:2px solid #ff0;border-bottom:2px solid #ff0;background:linear-gradient(90deg,#1e90ff 0px 3px,#f00 3px 5px,#1e90ff 5px 8px)"></div><div class="a" style="left:123px;top:509.1px;width:3px;height:12px;border-top:2px solid #ff0;border-bottom:2px solid #ff0;background:linear-gradient(90deg,#1e90ff 0px 3px)"></div><div class="a" style="left:126px;top:530.4px;width:8px;height:12px;border-top:2px solid #ff0;border-bottom:2px solid #ff0;background:linear-gradient(90deg,#f00 0px 3px,#f00 3px 5px,#f00 5px 8px)"></div><div class="a" style="left:134px;top:487.9px;width:3px;height:12px;border-top:2px solid #ff0;border-bottom:2px solid #ff0;background:linear-gradient(90deg,#f00 0px 3px)"></div><div class="a" style="left:137px;top:509.1px;width:8px;height:12px;border-top:2px solid #ff0;border-bottom:2px solid #ff0;background:linear-gradient(90deg,#f00 0px 3px,#1e90ff 3px 5px,#f00 5px 8px)"></div><div class="a" style="left:145px;top:487.9px;width:5px;height:12px;border-top:2px solid #ff0;border-bottom:2px solid #ff0;background:linear-gradient(90deg,#1e90ff 0px 3px,#1e90ff 3px 5px)"></div><div class="a" style="left:150px;top:509.1px;width:15px;height:12px;border-top:2px solid #ff0;border-bottom:2px solid #ff0;background:linear-gradient(90deg,#1e90ff 0px 3px,#1e90ff 3px 5px,#f00 5px 8px,#1e90ff 8px 10px,#1e90ff 10px 13px,#f00 13px 15px)"></div><div class="a" style="left:165px;top:530.4px;width:3px;height:12px;border-top:2px solid #ff0;border-bottom:2px solid #ff0;background:linear-gradient(90deg,#f00 0px 3px)"></div><div class="a" style="left:168px;top:487.9px;width:26px;height:12px;border-top:2px solid #ff0;border-bottom:2px solid #ff0;background:linear-gradient(90deg,#f00 0px 3px,#f00 3px 5px,#1e90ff 5px 8px,#1e90ff 8px 10px,#f00 10px 13px,#1e90ff 13px 16px,#f00 16px 18px,#f00 18px 21px,#f00 21px 23px,#1e90ff 23px 26px)"></div><div class="a" style="left:194px;top:509.1px;width:3px;height:12px;border-top:2px solid #ff0;border-bottom:2px solid #ff0;background:linear-gradient(90deg,#f00 0px 3px)"></div><div class="a" style="left:197px;top:466.6px;width:14px;height:12px;border-top:2px solid #ff0;border-bottom:2px solid #ff0;background:linear-gradient(90deg,#f00 0px 3px,#f00 3px 5px,#f00 5px 8px,#1e90ff 8px 10px,#f00 10px 13px,#1e90ff 13px 14px)"></div><div class="a" style="left:211px;top:487.9px;width:2px;height:12px;border-top:2px solid #ff0;border-bottom:2px solid #ff0;background:linear-gradient(90deg,#1e90ff 0px 2px)"></div><div class="a" style="left:213px;top:509.1px;width:3px;height:12px;border-top:2px solid #ff0;border-bottom:2px solid #ff0;background:linear-gradient(90deg,#f00 0px 3px)"></div><div class="a" style="left:216px;top:487.9px;width:9px;height:12px;border-top:2px solid #ff0;border-bottom:2px solid #ff0;background:linear-gradient(90deg,#f00 0px 3px,#1e90ff 3px 5px,#1e90ff 5px 8px,#1e90ff 8px 9px)"></div><div class="a" style="left:225px;top:466.6px;width:8px;height:12px;border-top:2px solid #ff0;border-bottom:2px solid #ff0;background:linear-gradient(90deg,#1e90ff 0px 3px,#f00 3px 5px,#1e90ff 5px 8px)"></div><div class="a" style="left:233px;top:445.4px;width:3px;height:12px;border-top:2px solid #ff0;border-bottom:2px solid #ff0;background:linear-gradient(90deg,#f00 0px 3px)"></div><div class="a" style="left:236px;top:466.6px;width:9px;height:12px;border-top:2px solid #ff0;border-bottom:2px solid #ff0;background:linear-gradient(90deg,#1e90ff 0px 3px,#1e90ff 3px 5px,#f00 5px 8px,#1e90ff 8px 9px)"></div><div class="a" style="left:245px;top:487.9px;width:5px;height:12px;border-top:2px solid #ff0;border-bottom:2px solid #ff0;background:linear-gradient(90deg,#1e90ff 0px 3px,#1e90ff 3px 5px)"></div><div class="a" style="left:250px;top:466.6px;width:16px;height:12px;border-top:2px solid #ff0;border-bottom:2px solid #ff0;background:linear-gradient(90deg,#f00 0px 3px,#1e90ff 3px 5px,#f00 5px 8px,#1e90ff 8px 10px,#1e90ff 10px 13px,#f00 13px 16px)"></div><div class="a" style="left:266px;top:445.4px;width:9px;height:12px;border-top:2px solid #ff0;border-bottom:2px solid #ff0;background:linear-gradient(90deg,#1e90ff 0px 3px,#f00 3px 5px,#f00 5px 8px,#f00 8px 9px)"></div><div class="a" style="left:275px;top:466.6px;width:5px;height:12px;border-top:2px solid #ff0;border-bottom:2px solid #ff0;background:linear-gradient(90deg,#f00 0px 3px,#f00 3px 5px)"></div><div class="a" style="left:280px;top:445.4px;width:11px;height:12px;border-top:2px solid #ff0;border-bottom:2px solid #ff0;background:linear-gradient(90deg,#f00 0px 3px,#1e90ff 3px 5px,#f00 5px 8px,#f00 8px 10px,#f00 10px 11px)"></div><div class="a" style="left:291px;top:466.6px;width:3px;height:12px;border-top:2px solid #ff0;border-bottom:2px solid #ff0;background:linear-gradient(90deg,#1e90ff 0px 3px)"></div><div class="a" style="left:294px;top:424.1px;width:5px;height:12px;border-top:2px solid #ff0;border-bottom:2px solid #ff0;background:linear-gradient(90deg,#f00 0px 3px,#1e90ff 3px 5px)"></div><div class="a" style="left:299px;top:402.8px;width:2px;height:12px;border-top:2px solid #ff0;border-bottom:2px solid #ff0;background:linear-gradient(90deg,#f00 0px 2px)"></div><div class="a" style="left:301px;top:424.1px;width:8px;height:12px;border-top:2px solid #ff0;border-bottom:2px solid #ff0;background:linear-gradient(90deg,#f00 0px 3px,#1e90ff 3px 5px,#1e90ff 5px 8px)"></div><div class="a" style="left:309px;top:402.8px;width:3px;height:12px;border-top:2px solid #ff0;border-bottom:2px solid #ff0;background:linear-gradient(90deg,#f00 0px 3px)"></div><div class="a" style="left:312px;top:381.6px;width:3px;height:12px;border-top:2px solid #ff0;border-bottom:2px solid #ff0;background:linear-gradient(90deg,#f00 0px 3px)"></div><div class="a" style="left:315px;top:424.1px;width:12px;height:12px;border-top:2px solid #ff0;border-bottom:2px solid #ff0;background:linear-gradient(90deg,#1e90ff 0px 3px,#f00 3px 5px,#1e90ff 5px 8px,#1e90ff 8px 10px,#f00 10px 12px)"></div><div class="a" style="left:327px;top:445.4px;width:10px;height:12px;border-top:2px solid #ff0;border-bottom:2px solid #ff0;background:linear-gradient(90deg,#f00 0px 3px,#f00 3px 5px,#f00 5px 8px,#f00 8px 10px)"></div><div class="a" style="left:337px;top:424.1px;width:8px;height:12px;border-top:2px solid #ff0;border-bottom:2px solid #ff0;background:linear-gradient(90deg,#1e90ff 0px 3px,#1e90ff 3px 5px,#1e90ff 5px 8px)"></div><div class="a" style="left:345px;top:445.4px;width:3px;height:12px;border-top:2px solid #ff0;border-bottom:2px solid #ff0;background:linear-gradient(90deg,#1e90ff 0px 3px)"></div><div class="a" style="left:348px;top:424.1px;width:8px;height:12px;border-top:2px solid #ff0;border-bottom:2px solid #ff0;background:linear-gradient(90deg,#1e90ff 0px 3px,#f00 3px 5px,#1e90ff 5px 8px)"></div><div class="a" style="left:356px;top:402.8px;width:8px;height:12px;border-top:2px solid #ff0;border-bottom:2px solid #ff0;background:linear-gradient(90deg,#f00 0px 3px,#f00 3px 5px,#1e90ff 5px 8px)"></div><div class="a" style="left:364px;top:381.6px;width:7px;height:12px;border-top:2px solid #ff0;border-bottom:2px solid #ff0;background:linear-gradient(90deg,#f00 0px 3px,#f00 3px 5px,#1e90ff 5px 7px)"></div><div class="a" style="left:371px;top:360.3px;width:15px;height:12px;border-top:2px solid #ff0;border-bottom:2px solid #ff0;background:linear-gradient(90deg,#1e90ff 0px 3px,#f00 3px 5px,#f00 5px 8px,#f00 8px 10px,#f00 10px 13px,#f00 13px 15px)"></div><div class="a" style="left:386px;top:339.1px;width:9px;height:12px;border-top:2px solid #ff0;border-bottom:2px solid #ff0;background:linear-gradient(90deg,#1e90ff 0px 3px,#f00 3px 5px,#f00 5px 8px,#f00 8px 9px)"></div><div class="a" style="left:395px;top:381.6px;width:6px;height:12px;border-top:2px solid #ff0;border-bottom:2px solid #ff0;background:linear-gradient(90deg,#1e90ff 0px 3px,#1e90ff 3px 5px,#f00 5px 6px)"></div><div class="a" style="left:401px;top:424.1px;width:5px;height:12px;border-top:2px solid #ff0;border-bottom:2px solid #ff0;background:linear-gradient(90deg,#f00 0px 3px,#f00 3px 5px)"></div><div class="a" style="left:406px;top:402.8px;width:6px;height:12px;border-top:2px solid #ff0;border-bottom:2px solid #ff0;background:linear-gradient(90deg,#1e90ff 0px 3px,#1e90ff 3px 5px,#f00 5px 6px)"></div><div class="a" style="left:412px;top:445.4px;width:3px;height:12px;border-top:2px solid #ff0;border-bottom:2px solid #ff0;background:linear-gradient(90deg,#f00 0px 3px)"></div><div class="a" style="left:415px;top:402.8px;width:3px;height:12px;border-top:2px solid #ff0;border-bottom:2px solid #ff0;background:linear-gradient(90deg,#f00 0px 3px)"></div><div class="a" style="left:418px;top:424.1px;width:8px;height:12px;border-top:2px solid #ff0;border-bottom:2px solid #ff0;background:linear-gradient(90deg,#f00 0px 3px,#1e90ff 3px 5px,#1e90ff 5px 8px)"></div><div class="a" style="left:426px;top:445.4px;width:7px;height:12px;border-top:2px solid #ff0;border-bottom:2px solid #ff0;background:linear-gradient(90deg,#1e90ff 0px 3px,#f00 3px 5px,#f00 5px 7px)"></div><div class="a" style="left:433px;top:424.1px;width:8px;height:12px;border-top:2px solid #ff0;border-bottom:2px solid #ff0;background:linear-gradient(90deg,#f00 0px 3px,#f00 3px 5px,#1e90ff 5px 8px)"></div><div class="a" style="left:441px;top:381.6px;width:5px;height:12px;border-top:2px solid #ff0;border-bottom:2px solid #ff0;background:linear-gradient(90deg,#f00 0px 3px,#f00 3px 5px)"></div><div class="a" style="left:446px;top:360.3px;width:4px;height:12px;border-top:2px solid #ff0;border-bottom:2px solid #ff0;background:linear-gradient(90deg,#f00 0px 3px,#1e90ff 3px 4px)"></div><div class="a" style="left:450px;top:339.1px;width:5px;height:12px;border-top:2px solid #ff0;border-bottom:2px solid #ff0;background:linear-gradient(90deg,#f00 0px 3px,#f00 3px 5px)"></div><div class="a" style="left:455px;top:296.5px;width:3px;height:12px;border-top:2px solid #ff0;border-bottom:2px solid #ff0;background:linear-gradient(90deg,#f00 0px 3px)"></div><div class="a" style="left:458px;top:275.3px;width:6px;height:12px;border-top:2px solid #ff0;border-bottom:2px solid #ff0;background:linear-gradient(90deg,#1e90ff 0px 3px,#f00 3px 5px,#1e90ff 5px 6px)"></div><div class="a" style="left:464px;top:254.0px;width:4px;height:12px;border-top:2px solid #ff0;border-bottom:2px solid #ff0;background:linear-gradient(90deg,#1e90ff 0px 3px,#1e90ff 3px 4px)"></div><div class="a" style="left:468px;top:275.3px;width:10px;height:12px;border-top:2px solid #ff0;border-bottom:2px solid #ff0;background:linear-gradient(90deg,#f00 0px 3px,#f00 3px 5px,#1e90ff 5px 8px,#f00 8px 10px)"></div><div class="a" style="left:478px;top:254.0px;width:5px;height:12px;border-top:2px solid #ff0;border-bottom:2px solid #ff0;background:linear-gradient(90deg,#1e90ff 0px 3px,#1e90ff 3px 5px)"></div><div class="a" style="left:483px;top:275.3px;width:8px;height:12px;border-top:2px solid #ff0;border-bottom:2px solid #ff0;background:linear-gradient(90deg,#f00 0px 3px,#f00 3px 5px,#f00 5px 8px)"></div><div class="a" style="left:491px;top:254.0px;width:8px;height:12px;border-top:2px solid #ff0;border-bottom:2px solid #ff0;background:linear-gradient(90deg,#1e90ff 0px 3px,#1e90ff 3px 5px,#f00 5px 8px)"></div><div class="a" style="left:499px;top:254.0px;width:3px;height:12px;border-top:2px solid #ff0;border-bottom:2px solid #ff0;background:linear-gradient(90deg,#f00 0px 3px)"></div><div class="a" style="left:502px;top:232.8px;width:14px;height:12px;border-top:2px solid #ff0;border-bottom:2px solid #ff0;background:linear-gradient(90deg,#1e90ff 0px 3px,#f00 3px 5px,#1e90ff 5px 8px,#f00 8px 10px,#1e90ff 10px 13px,#1e90ff 13px 14px)"></div><div class="a" style="left:516px;top:211.5px;width:4px;height:12px;border-top:2px solid #ff0;border-bottom:2px solid #ff0;background:linear-gradient(90deg,#f00 0px 3px,#f00 3px 4px)"></div><div class="a" style="left:520px;top:232.8px;width:9px;height:12px;border-top:2px solid #ff0;border-bottom:2px solid #ff0;background:linear-gradient(90deg,#1e90ff 0px 3px,#f00 3px 5px,#1e90ff 5px 8px,#1e90ff 8px 9px)"></div><div class="a" style="left:529px;top:211.5px;width:2px;height:12px;border-top:2px solid #ff0;border-bottom:2px solid #ff0;background:linear-gradient(90deg,#1e90ff 0px 2px)"></div><div class="a" style="left:531px;top:232.8px;width:10px;height:12px;border-top:2px solid #ff0;border-bottom:2px solid #ff0;background:linear-gradient(90deg,#f00 0px 3px,#f00 3px 5px,#f00 5px 8px,#1e90ff 8px 10px)"></div><div class="a" style="left:541px;top:254.0px;width:5px;height:12px;border-top:2px solid #ff0;border-bottom:2px solid #ff0;background:linear-gradient(90deg,#f00 0px 3px,#1e90ff 3px 5px)"></div><div class="a" style="left:546px;top:211.5px;width:4px;height:12px;border-top:2px solid #ff0;border-bottom:2px solid #ff0;background:linear-gradient(90deg,#f00 0px 3px,#f00 3px 4px)"></div><div class="a" style="left:550px;top:232.8px;width:1px;height:12px;border-top:2px solid #ff0;border-bottom:2px solid #ff0;background:linear-gradient(90deg,#1e90ff 0px 1px)"></div><div class="a" style="left:551px;top:190.2px;width:12px;height:12px;border-top:2px solid #ff0;border-bottom:2px solid #ff0;background:linear-gradient(90deg,#1e90ff 0px 3px,#1e90ff 3px 5px,#1e90ff 5px 8px,#1e90ff 8px 10px,#1e90ff 10px 12px)"></div><div class="a" style="left:563px;top:211.5px;width:3px;height:12px;border-top:2px solid #ff0;border-bottom:2px solid #ff0;background:linear-gradient(90deg,#f00 0px 3px)"></div><div class="a" style="left:566px;top:190.2px;width:5px;height:12px;border-top:2px solid #ff0;border-bottom:2px solid #ff0;background:linear-gradient(90deg,#f00 0px 3px,#f00 3px 5px)"></div><div class="a" style="left:571px;top:169.0px;width:6px;height:12px;border-top:2px solid #ff0;border-bottom:2px solid #ff0;background:linear-gradient(90deg,#1e90ff 0px 3px,#f00 3px 5px,#f00 5px 6px)"></div><div class="a" style="left:577px;top:190.2px;width:3px;height:12px;border-top:2px solid #ff0;border-bottom:2px solid #ff0;background:linear-gradient(90deg,#f00 0px 3px)"></div><div class="a" style="left:580px;top:169.0px;width:1px;height:12px;border-top:2px solid #ff0;border-bottom:2px solid #ff0;background:linear-gradient(90deg,#f00 0px 1px)"></div><div class="a" style="left:581px;top:147.7px;width:10px;height:12px;border-top:2px solid #ff0;border-bottom:2px solid #ff0;background:linear-gradient(90deg,#f00 0px 3px,#f00 3px 5px,#f00 5px 8px,#f00 8px 10px)"></div><div class="a" style="left:591px;top:169.0px;width:5px;height:12px;border-top:2px solid #ff0;border-bottom:2px solid #ff0;background:linear-gradient(90deg,#f00 0px 3px,#f00 3px 5px)"></div><div class="a" style="left:596px;top:147.7px;width:2px;height:12px;border-top:2px solid #ff0;border-bottom:2px solid #ff0;background:linear-gradient(90deg,#f00 0px 2px)"></div><div class="a" style="left:598px;top:169.0px;width:6px;height:12px;border-top:2px solid #ff0;border-bottom:2px solid #ff0;background:linear-gradient(90deg,#f00 0px 3px,#f00 3px 5px,#f00 5px 6px)"></div><div class="a" style="left:604px;top:190.2px;width:7px;height:12px;border-top:2px solid #ff0;border-bottom:2px solid #ff0;background:linear-gradient(90deg,#f00 0px 3px,#f00 3px 5px,#f00 5px 7px)"></div><div class="a" style="left:611px;top:126.5px;width:2px;height:12px;border-top:2px solid #ff0;border-bottom:2px solid #ff0;background:linear-gradient(90deg,#1e90ff 0px 2px)"></div><div class="a" style="left:613px;top:83.9px;width:8px;height:12px;border-top:2px solid #ff0;border-bottom:2px solid #ff0;background:linear-gradient(90deg,#1e90ff 0px 3px,#f00 3px 5px,#f00 5px 8px)"></div><div class="a" style="left:621px;top:105.2px;width:5px;height:12px;border-top:2px solid #ff0;border-bottom:2px solid #ff0;background:linear-gradient(90deg,#1e90ff 0px 3px,#f00 3px 5px)"></div><div class="a" style="left:626px;top:83.9px;width:5px;height:12px;border-top:2px solid #ff0;border-bottom:2px solid #ff0;background:linear-gradient(90deg,#1e90ff 0px 3px,#1e90ff 3px 5px)"></div><div class="a" style="left:631px;top:62.7px;width:7px;height:12px;border-top:2px solid #ff0;border-bottom:2px solid #ff0;background:linear-gradient(90deg,#f00 0px 3px,#1e90ff 3px 5px,#f00 5px 7px)"></div><div class="a" style="left:638px;top:83.9px;width:3px;height:12px;border-top:2px solid #ff0;border-bottom:2px solid #ff0;background:linear-gradient(90deg,#1e90ff 0px 3px)"></div><div class="a" style="left:641px;top:105.2px;width:7px;height:12px;border-top:2px solid #ff0;border-bottom:2px solid #ff0;background:linear-gradient(90deg,#1e90ff 0px 3px,#1e90ff 3px 5px,#1e90ff 5px 7px)"></div><div class="a" style="left:648px;top:83.9px;width:6px;height:12px;border-top:2px solid #ff0;border-bottom:2px solid #ff0;background:linear-gradient(90deg,#f00 0px 3px,#f00 3px 5px,#1e90ff 5px 6px)"></div><div class="a" style="left:654px;top:62.7px;width:3px;height:12px;border-top:2px solid #ff0;border-bottom:2px solid #ff0;background:linear-gradient(90deg,#f00 0px 3px)"></div><div class="a" style="left:657px;top:83.9px;width:3px;height:12px;border-top:2px solid #ff0;border-bottom:2px solid #ff0;background:linear-gradient(90deg,#f00 0px 3px)"></div><div class="a" style="left:660px;top:62.7px;width:14px;height:12px;border-top:2px solid #ff0;border-bottom:2px solid #ff0;background:linear-gradient(90deg,#f00 0px 3px,#f00 3px 5px,#f00 5px 8px,#1e90ff 8px 10px,#f00 10px 13px,#f00 13px 14px)"></div><div class="a" style="left:674px;top:41.4px;width:2px;height:12px;border-top:2px solid #ff0;border-bottom:2px solid #ff0;background:linear-gradient(90deg,#1e90ff 0px 2px)"></div><div class="a" style="left:676px;top:62.7px;width:2px;height:12px;border-top:2px solid #ff0;border-bottom:2px solid #ff0;background:linear-gradient(90deg,#1e90ff 0px 2px)"></div><div class="a" style="left:678px;top:83.9px;width:5px;height:12px;border-top:2px solid #ff0;border-bottom:2px solid #ff0;background:linear-gradient(90deg,#f00 0px 3px,#f00 3px 5px)"></div><div class="a" style="left:683px;top:105.2px;width:4px;height:12px;border-top:2px solid #ff0;border-bottom:2px solid #ff0;background:linear-gradient(90deg,#f00 0px 3px,#f00 3px 4px)"></div><div class="a" style="left:687px;top:126.5px;width:9px;height:12px;border-top:2px solid #ff0;border-bottom:2px solid #ff0;background:linear-gradient(90deg,#1e90ff 0px 3px,#f00 3px 5px,#1e90ff 5px 8px,#f00 8px 9px)"></div><div class="a" style="left:696px;top:147.7px;width:2px;height:12px;border-top:2px solid #ff0;border-bottom:2px solid #ff0;background:linear-gradient(90deg,#f00 0px 2px)"></div><div class="a" style="left:698px;top:169.0px;width:3px;height:12px;border-top:2px solid #ff0;border-bottom:2px solid #ff0;background:linear-gradient(90deg,#1e90ff 0px 3px)"></div><div class="a" style="left:701px;top:147.7px;width:8px;height:12px;border-top:2px solid #ff0;border-bottom:2px solid #ff0;background:linear-gradient(90deg,#f00 0px 3px,#1e90ff 3px 5px,#1e90ff 5px 8px)"></div><div class="a" style="left:709px;top:105.2px;width:3px;height:12px;border-top:2px solid #ff0;border-bottom:2px solid #ff0;background:linear-gradient(90deg,#f00 0px 3px)"></div><div class="a" style="left:712px;top:126.5px;width:5px;height:12px;border-top:2px solid #ff0;border-bottom:2px solid #ff0;background:linear-gradient(90deg,#1e90ff 0px 3px,#f00 3px 5px)"></div><div class="a" style="left:717px;top:147.7px;width:5px;height:12px;border-top:2px solid #ff0;border-bottom:2px solid #ff0;background:linear-gradient(90deg,#1e90ff 0px 3px,#1e90ff 3px 5px)"></div><div class="a" style="left:722px;top:126.5px;width:6px;height:12px;border-top:2px solid #ff0;border-bottom:2px solid #ff0;background:linear-gradient(90deg,#1e90ff 0px 3px,#1e90ff 3px 5px,#f00 5px 6px)"></div><div class="a" style="left:728px;top:169.0px;width:2px;height:12px;border-top:2px solid #ff0;border-bottom:2px solid #ff0;background:linear-gradient(90deg,#1e90ff 0px 2px)"></div><div class="a" style="left:730px;top:105.2px;width:2px;height:12px;border-top:2px solid #ff0;border-bottom:2px solid #ff0;background:linear-gradient(90deg,#1e90ff 0px 2px)"></div><div class="a" style="left:732px;top:126.5px;width:6px;height:12px;border-top:2px solid #ff0;border-bottom:2px solid #ff0;background:linear-gradient(90deg,#1e90ff 0px 3px,#f00 3px 5px,#1e90ff 5px 6px)"></div><div class="a" style="left:738px;top:147.7px;width:10px;height:12px;border-top:2px solid #ff0;border-bottom:2px solid #ff0;background:linear-gradient(90deg,#1e90ff 0px 3px,#f00 3px 5px,#f00 5px 8px,#f00 8px 10px)"></div><div class="a" style="left:748px;top:126.5px;width:6px;height:12px;border-top:2px solid #ff0;border-bottom:2px solid #ff0;background:linear-gradient(90deg,#f00 0px 3px,#f00 3px 5px,#1e90ff 5px 6px)"></div><div class="a" style="left:754px;top:147.7px;width:3px;height:12px;border-top:2px solid #ff0;border-bottom:2px solid #ff0;background:linear-gradient(90deg,#f00 0px 3px)"></div><div class="a" style="left:757px;top:105.2px;width:1px;height:12px;border-top:2px solid #ff0;border-bottom:2px solid #ff0;background:linear-gradient(90deg,#1e90ff 0px 1px)"></div><div class="a" style="left:758px;top:126.5px;width:8px;height:12px;border-top:2px solid #ff0;border-bottom:2px solid #ff0;background:linear-gradient(90deg,#1e90ff 0px 3px,#f00 3px 5px,#f00 5px 8px)"></div><div class="a" style="left:766px;top:105.2px;width:5px;height:12px;border-top:2px solid #ff0;border-bottom:2px solid #ff0;background:linear-gradient(90deg,#f00 0px 3px,#1e90ff 3px 5px)"></div><div class="a" style="left:771px;top:147.7px;width:5px;height:12px;border-top:2px solid #ff0;border-bottom:2px solid #ff0;background:linear-gradient(90deg,#1e90ff 0px 3px,#1e90ff 3px 5px)"></div><div class="a" style="left:776px;top:126.5px;width:7px;height:12px;border-top:2px solid #ff0;border-bottom:2px solid #ff0;background:linear-gradient(90deg,#f00 0px 3px,#f00 3px 5px,#1e90ff 5px 7px)"></div><div class="a" style="left:783px;top:147.7px;width:5px;height:12px;border-top:2px solid #ff0;border-bottom:2px solid #ff0;background:linear-gradient(90deg,#1e90ff 0px 3px,#1e90ff 3px 5px)"></div><div class="a" style="left:788px;top:126.5px;width:13px;height:12px;border-top:2px solid #ff0;border-bottom:2px solid #ff0;background:linear-gradient(90deg,#1e90ff 0px 3px,#1e90ff 3px 5px,#1e90ff 5px 8px,#1e90ff 8px 10px,#f00 10px 13px)"></div><div class="a" style="left:801px;top:105.2px;width:9px;height:12px;border-top:2px solid #ff0;border-bottom:2px solid #ff0;background:linear-gradient(90deg,#1e90ff 0px 3px,#1e90ff 3px 5px,#f00 5px 8px,#f00 8px 9px)"></div><div class="a" style="left:810px;top:126.5px;width:8px;height:12px;border-top:2px solid #ff0;border-bottom:2px solid #ff0;background:linear-gradient(90deg,#1e90ff 0px 3px,#f00 3px 5px,#1e90ff 5px 8px)"></div><div class="a" style="left:818px;top:147.7px;width:2px;height:12px;border-top:2px solid #ff0;border-bottom:2px solid #ff0;background:linear-gradient(90deg,#f00 0px 2px)"></div><div class="a" style="left:820px;top:126.5px;width:13px;height:12px;border-top:2px solid #ff0;border-bottom:2px solid #ff0;background:linear-gradient(90deg,#f00 0px 3px,#f00 3px 5px,#1e90ff 5px 8px,#f00 8px 10px,#1e90ff 10px 13px)"></div><div class="a" style="left:833px;top:147.7px;width:6px;height:12px;border-top:2px solid #ff0;border-bottom:2px solid #ff0;background:linear-gradient(90deg,#1e90ff 0px 3px,#1e90ff 3px 5px,#1e90ff 5px 6px)"></div><div class="a" style="left:839px;top:169.0px;width:22px;height:12px;border-top:2px solid #ff0;border-bottom:2px solid #ff0;background:linear-gradient(90deg,#1e90ff 0px 3px,#1e90ff 3px 5px,#f00 5px 8px,#f00 8px 10px,#f00 10px 13px,#1e90ff 13px 16px,#f00 16px 18px,#1e90ff 18px 21px,#f00 21px 22px)"></div><div class="a" style="left:861px;top:147.7px;width:7px;height:12px;border-top:2px solid #ff0;border-bottom:2px solid #ff0;background:linear-gradient(90deg,#f00 0px 3px,#1e90ff 3px 5px,#1e90ff 5px 7px)"></div><div class="a" style="left:868px;top:126.5px;width:9px;height:12px;border-top:2px solid #ff0;border-bottom:2px solid #ff0;background:linear-gradient(90deg,#1e90ff 0px 3px,#f00 3px 5px,#f00 5px 8px,#1e90ff 8px 9px)"></div><div class="a" style="left:877px;top:105.2px;width:2px;height:12px;border-top:2px solid #ff0;border-bottom:2px solid #ff0;background:linear-gradient(90deg,#1e90ff 0px 2px)"></div><div class="a" style="left:879px;top:126.5px;width:8px;height:12px;border-top:2px solid #ff0;border-bottom:2px solid #ff0;background:linear-gradient(90deg,#1e90ff 0px 3px,#f00 3px 5px,#1e90ff 5px 8px)"></div><div class="a" style="left:887px;top:105.2px;width:8px;height:12px;border-top:2px solid #ff0;border-bottom:2px solid #ff0;background:linear-gradient(90deg,#f00 0px 3px,#f00 3px 5px,#1e90ff 5px 8px)"></div><div class="a" style="left:895px;top:147.7px;width:3px;height:12px;border-top:2px solid #ff0;border-bottom:2px solid #ff0;background:linear-gradient(90deg,#f00 0px 3px)"></div><div class="a" style="left:898px;top:126.5px;width:9px;height:12px;border-top:2px solid #ff0;border-bottom:2px solid #ff0;background:linear-gradient(90deg,#1e90ff 0px 3px,#1e90ff 3px 5px,#f00 5px 8px,#1e90ff 8px 9px)"></div><div class="a" style="left:907px;top:147.7px;width:4px;height:12px;border-top:2px solid #ff0;border-bottom:2px solid #ff0;background:linear-gradient(90deg,#1e90ff 0px 3px,#1e90ff 3px 4px)"></div><div class="a" style="left:911px;top:169.0px;width:3px;height:12px;border-top:2px solid #ff0;border-bottom:2px solid #ff0;background:linear-gradient(90deg,#1e90ff 0px 3px)"></div><div class="a" style="left:914px;top:232.8px;width:5px;height:12px;border-top:2px solid #ff0;border-bottom:2px solid #ff0;background:linear-gradient(90deg,#1e90ff 0px 3px,#f00 3px 5px)"></div><div class="a" style="left:487.8px;top:103.5px;width:2.5px;height:14.0px;background:#000;border-top:2.5px solid #ff0;border-bottom:2.5px solid #ff0"></div><div class="a" style="left:53.4px;top:316.2px;width:2.5px;height:14.3px;background:#000;border-top:2.5px solid #ff0;border-bottom:2.5px solid #ff0"></div><div class="a" style="left:246.6px;top:256.2px;width:2.5px;height:13.3px;background:#000;border-top:2.5px solid #ff0;border-bottom:2.5px solid #ff0"></div><div class="a" style="left:286.8px;top:294.5px;width:2.5px;height:15.0px;background:#000;border-top:2.5px solid #ff0;border-bottom:2.5px solid #ff0"></div><div class="a" style="left:532.8px;top:145.5px;width:2.5px;height:16.0px;background:#000;border-top:2.5px solid #ff0;border-bottom:2.5px solid #ff0"></div><div class="a" style="left:919px;top:232px;width:38px;height:2.5px;background:#ff0"></div><div class="a" style="left:919px;top:244px;width:38px;height:2.5px;background:#ff0"></div><div class="a" style="left:64.5px;top:521.0px;width:33.0px;height:33.0px;border-radius:50%;background:radial-gradient(circle at 40% 30%,rgba(255,255,255,.3),rgba(255,255,255,0) 45%),linear-gradient(#0a14f0 0,#1a2aff 60%,#e00 60%,#f22 100%);box-shadow:0 0 3px 2px rgba(255,255,255,.5)"></div><div class="a" style="left:172.0px;top:505.5px;width:22px;height:22px;border-radius:50%;background:radial-gradient(circle at 40% 30%,rgba(255,255,255,.3),rgba(255,255,255,0) 45%),linear-gradient(#0a14f0 0,#1a2aff 76%,#e00 76%,#f22 100%);box-shadow:0 0 3px 2px rgba(255,255,255,.5)"></div><div class="a" style="left:550.5px;top:227.5px;width:25.0px;height:25.0px;border-radius:50%;background:radial-gradient(circle at 40% 30%,rgba(255,255,255,.3),rgba(255,255,255,0) 45%),linear-gradient(#0a14f0 0,#1a2aff 80%,#e00 80%,#f22 100%);box-shadow:0 0 3px 2px rgba(255,255,255,.5)"></div></div>
<div class="a" style="left:1637px;top:0px;width:759px;height:1250px;background:#fff;border-top:1px solid #9a9a9a;border-left:2px solid #a0a0a0;border-right:2px solid #9a9a9a"></div>
<div class="a" style="left:1639px;top:1px;width:755px;height:38px;background:#fff"></div>
<svg class="a" style="left:1648px;top:8px" width="24" height="24" viewBox="0 0 24 24"><ellipse cx="7" cy="17.5" rx="6" ry="2.6" fill="#e03040"/><path d="M9 9L19 19" stroke="#c49a5a" stroke-width="3" stroke-linecap="round"/><path d="M4.5 10L11 3.5" stroke="#d0a868" stroke-width="6.5" stroke-linecap="round"/></svg>
<div class="tt" style="left:1674px;top:11px">ES 12-16&nbsp;&nbsp;Account Sim101</div>
<div class="a" style="left:2245px;top:18px;width:13px;height:1px;background:#555"></div>
<div class="a" style="left:2302px;top:12px;width:12px;height:12px;border:1px solid #555"></div>
<svg class="a" style="left:2358px;top:11px" width="15" height="15"><path d="M1 1L14 14M14 1L1 14" stroke="#444" stroke-width="1.1"/></svg>
<div class="a" style="left:1640px;top:39px;width:754px;height:37px;background:#fa8072;border-radius:4px;box-shadow:0 1px 2px #c66"></div><div class="a" style="left:1645px;top:44px;width:2px;height:2px;background:#fff"></div><div class="a" style="left:1645px;top:49px;width:2px;height:2px;background:#fff"></div><div class="a" style="left:1645px;top:54px;width:2px;height:2px;background:#fff"></div><div class="a" style="left:1645px;top:59px;width:2px;height:2px;background:#fff"></div><div class="a" style="left:1645px;top:64px;width:2px;height:2px;background:#fff"></div><div class="a" style="left:1645px;top:69px;width:2px;height:2px;background:#fff"></div><svg class="a" style="left:1652px;top:43px" width="32" height="32" viewBox="0 0 32 32"><rect x="6" y="1" width="20" height="5" fill="#2040b0"/><rect x="1" y="8" width="30" height="5" fill="#2a50c8"/><rect x="4" y="15" width="24" height="5" fill="#2040b0"/><rect x="3" y="21" width="26" height="5" fill="#2a50c8"/><rect x="3" y="27" width="26" height="4" fill="#2040b0"/></svg><div class="a" style="left:1690px;top:44px;width:2px;height:28px;background:#fde"></div><div class="a" style="left:1733px;top:44px;width:2px;height:28px;background:#fde"></div><div class="a" style="left:1775px;top:44px;width:2px;height:28px;background:#fde"></div><div class="a" style="left:1818px;top:44px;width:2px;height:28px;background:#fde"></div><div class="a" style="left:1860px;top:44px;width:2px;height:28px;background:#fde"></div><div class="a" style="left:1902px;top:44px;width:2px;height:28px;background:#fde"></div><div class="a" style="left:1945px;top:44px;width:2px;height:28px;background:#fde"></div><div class="a" style="left:1988px;top:44px;width:2px;height:28px;background:#fde"></div><div class="a" style="left:2030px;top:44px;width:2px;height:28px;background:#fde"></div><div class="a" style="left:2073px;top:44px;width:2px;height:28px;background:#fde"></div><div class="a" style="left:2115px;top:44px;width:2px;height:28px;background:#fde"></div><div class="a" style="left:2158px;top:44px;width:2px;height:28px;background:#fde"></div><div class="a" style="left:2200px;top:44px;width:2px;height:28px;background:#fde"></div><svg class="a" style="left:1697px;top:43px" width="28" height="32" viewBox="0 0 28 32"><path d="M3 4H25L22 30H6Z" fill="#a8c4ec" stroke="#7a9ad0" stroke-width="1.2"/><ellipse cx="14" cy="4" rx="11" ry="2" fill="#c8daf4" stroke="#7a9ad0"/><circle cx="14" cy="16" r="4" fill="none" stroke="#e8f0ff" stroke-width="1.5"/></svg><svg class="a" style="left:1740px;top:44px" width="28" height="30" viewBox="0 0 28 30"><path d="M2 3H14L18 7V27H2Z" fill="#eee" stroke="#bbb"/><path d="M16 4L25 14H20V24H12V14H7Z" fill="#4cbc20" stroke="#2a8a10" stroke-width="1"/></svg><svg class="a" style="left:1781px;top:44px" width="28" height="30" viewBox="0 0 28 30"><path d="M2 3H14L18 7V27H2Z" fill="#eee" stroke="#bbb"/><path d="M16 24L25 14H20V4H12V14H7Z" fill="#4cbc20" stroke="#2a8a10" stroke-width="1"/></svg><svg class="a" style="left:1822px;top:43px" width="32" height="32" viewBox="0 0 32 32"><path d="M3 3L14 14" stroke="#d02020" stroke-width="4"/><path d="M10 12L20 22L26 16L16 6Z" fill="#f0c020"/><rect x="13" y="13" width="16" height="16" fill="none" stroke="#111" stroke-width="1.5" stroke-dasharray="2 2"/></svg><svg class="a" style="left:1866px;top:44px" width="28" height="30" viewBox="0 0 28 30"><path d="M2 3H14L18 7V27H2Z" fill="#eee" stroke="#bbb"/><path d="M16 4L25 14H20V24H12V14H7Z" fill="#4cbc20" stroke="#2a8a10" stroke-width="1"/></svg><svg class="a" style="left:1908px;top:44px" width="28" height="30" viewBox="0 0 28 30"><path d="M2 3H14L18 7V27H2Z" fill="#eee" stroke="#bbb"/><path d="M16 24L25 14H20V4H12V14H7Z" fill="#4cbc20" stroke="#2a8a10" stroke-width="1"/></svg><svg class="a" style="left:1956px;top:45px" width="18" height="30" viewBox="0 0 18 30"><path d="M5 2Q9 0 13 2L10 20H8Z" fill="#e03030"/><circle cx="9" cy="25" r="3.5" fill="#e03030"/></svg><svg class="a" style="left:1993px;top:43px" width="30" height="32" viewBox="0 0 30 32"><path d="M2 2H20L27 9V30H2Z" fill="#bfe0e0" stroke="#8aa"/><path d="M6 18H24M6 22H24M6 26H24" stroke="#222" stroke-width="2"/><ellipse cx="14" cy="14" rx="6" ry="3" fill="#fff"/></svg><svg class="a" style="left:2033px;top:44px" width="36" height="30" viewBox="0 0 36 30"><path d="M3 4V10M9 4V10" stroke="#8aa" stroke-width="2"/><rect x="1" y="9" width="11" height="9" rx="2" fill="#6d8fb0"/><path d="M6 18V24Q6 27 3 27" stroke="#8aa" stroke-width="2" fill="none"/><rect x="16" y="3" width="15" height="25" rx="2" fill="#e5c040" stroke="#b98" stroke-width="1"/><rect x="19" y="1" width="9" height="3" fill="#aaa"/><path d="M20 10H27M23.5 6.5V13.5" stroke="#e03020" stroke-width="2.5"/><path d="M20 21H27" stroke="#e03020" stroke-width="2.5"/></svg><svg class="a" style="left:2077px;top:44px" width="30" height="30" viewBox="0 0 30 30"><path d="M4 26L18 11" stroke="#2a6ad0" stroke-width="5" stroke-linecap="round"/><path d="M15 12A7 7 0 0 1 25 3L21 8L24 11L28 7A7 7 0 0 1 18 16Z" fill="#2a7ae0" stroke="#1a4a90" stroke-width="1"/></svg><svg class="a" style="left:2120px;top:42px" width="30" height="34" viewBox="0 0 30 34"><text x="15" y="28" text-anchor="middle" font-family="Liberation Sans" font-weight="bold" font-size="32" fill="#1a8ad0" stroke="#0a5a9a" stroke-width="1">$</text></svg><svg class="a" style="left:2162px;top:44px" width="32" height="30" viewBox="0 0 32 30"><ellipse cx="12" cy="9" rx="8" ry="6.5" fill="#fbb41a"/><path d="M6 13L5 19L11 14Z" fill="#fbb41a"/><ellipse cx="19" cy="15" rx="10" ry="8" fill="#1e8fd0"/><path d="M20 21L26 27L24 20Z" fill="#1e8fd0"/><rect x="14.5" y="12" width="9" height="2" fill="#123"/><rect x="14.5" y="15" width="9" height="2" fill="#123"/></svg><svg class="a" style="left:2205px;top:46px" width="22" height="22" viewBox="0 0 22 22"><path d="M3 2V19H20" stroke="#2233cc" stroke-width="2" fill="none"/><path d="M3 19H20" stroke="#d22" stroke-width="2"/><path d="M6 13L10 8L13 11L18 4" stroke="#b060c0" stroke-width="1.5" fill="none"/><path d="M17 14l3 3M20 14l-3 3" stroke="#d22" stroke-width="1"/></svg><svg class="a" style="left:2360px;top:42px" width="34" height="34" viewBox="0 0 34 34"><rect x="2" y="3" width="26" height="6" fill="#ddd" stroke="#aaa"/><rect x="2" y="12" width="26" height="6" fill="#ddd" stroke="#aaa"/><rect x="2" y="21" width="26" height="6" fill="#ddd" stroke="#aaa"/><rect x="3" y="4" width="5" height="4" fill="#e33"/><rect x="3" y="13" width="5" height="4" fill="#e33"/><path d="M14 22L20 28L32 14" stroke="#3a9a30" stroke-width="4" fill="none"/></svg>
<div class="a" style="left:1639px;top:77.5px;width:104px;height:1172.5px;background:#d3d3d3"></div>
<div class="a" style="left:1743px;top:77.5px;width:64px;height:1172.5px;background:#d3d3d3"></div>
<div class="a" style="left:1807px;top:77.5px;width:64px;height:1172.5px;background:#d3d3d3"></div>
<div class="a" style="left:1871px;top:77.5px;width:73px;height:1172.5px;background:#808080"></div>
<div class="a" style="left:1944px;top:77.5px;width:54px;height:1172.5px;background:#000080"></div>
<div class="a" style="left:1998px;top:77.5px;width:53.5px;height:1172.5px;background:#000080"></div>
<div class="a" style="left:2051.5px;top:77.5px;width:53.5px;height:1172.5px;background:#d3d3d3"></div>
<div class="a" style="left:2105px;top:77.5px;width:54px;height:1172.5px;background:#d3d3d3"></div>
<div class="a" style="left:2159px;top:77.5px;width:54px;height:1172.5px;background:#8b0000"></div>
<div class="a" style="left:2213px;top:77.5px;width:53.5px;height:1172.5px;background:#8b0000"></div>
<div class="a" style="left:2266.5px;top:77.5px;width:64.0px;height:1172.5px;background:#d3d3d3"></div>
<div class="a" style="left:2330.5px;top:77.5px;width:63.5px;height:1172.5px;background:#d3d3d3"></div>
<div class="a" style="left:1871px;top:77.50px;width:73px;height:5.90px;background:#000"></div>
<div class="a" style="left:1871px;top:83.40px;width:73px;height:21.26px;background:#000"></div>
<div class="a" style="left:1639px;top:296.00px;width:104px;height:21.26px;background:#ff0"></div>
<div class="a" style="left:1743px;top:296.00px;width:64px;height:21.26px;background:#ff0"></div>
<div class="a" style="left:1807px;top:296.00px;width:64px;height:21.26px;background:#ff0"></div>
<div class="a" style="left:1871px;top:296.00px;width:73px;height:21.26px;background:#ff0"></div>
<div class="a" style="left:2051.5px;top:296.00px;width:53.5px;height:21.26px;background:#ff0"></div>
<div class="a" style="left:2105px;top:296.00px;width:54px;height:21.26px;background:#fff"></div>
<div class="a" style="left:2159px;top:296.00px;width:54px;height:21.26px;background:#f00"></div>
<div class="a" style="left:2213px;top:296.00px;width:53.5px;height:21.26px;background:#f00"></div>
<div class="a" style="left:1944px;top:317.26px;width:54px;height:21.26px;background:#00f"></div>
<div class="a" style="left:1998px;top:317.26px;width:53.5px;height:21.26px;background:#00f"></div>
<div class="a" style="left:2051.5px;top:317.26px;width:53.5px;height:21.26px;background:#fff"></div>
<div class="a" style="left:2266.5px;top:317.26px;width:64.0px;height:21.26px;background:#ff0"></div>
<div class="a" style="left:1865.453010948905px;top:125.92px;width:5.546989051094897px;height:21.26px;background:#5f9ea0"></div>
<div class="a" style="left:2325.4258160237387px;top:125.92px;width:5.074183976261338px;height:21.26px;background:#dda0dd"></div>
<div class="a" style="left:2331.5px;top:125.92px;width:8.587735500554118px;height:21.26px;background:#87ceeb"></div>
<div class="a" style="left:1852.3471715328467px;top:147.18px;width:18.652828467153313px;height:21.26px;background:#5f9ea0"></div>
<div class="a" style="left:2301.335523526918px;top:147.18px;width:29.164476473081777px;height:21.26px;background:#dda0dd"></div>
<div class="a" style="left:2331.5px;top:147.18px;width:17.222016992981025px;height:21.26px;background:#87ceeb"></div>
<div class="a" style="left:1862.0711678832117px;top:168.44px;width:8.928832116788271px;height:21.26px;background:#5f9ea0"></div>
<div class="a" style="left:2318.249470114455px;top:168.44px;width:12.250529885544893px;height:21.26px;background:#dda0dd"></div>
<div class="a" style="left:2331.5px;top:168.44px;width:9.89102327299588px;height:21.26px;background:#87ceeb"></div>
<div class="a" style="left:1840.467609489051px;top:189.70px;width:30.53239051094897px;height:21.26px;background:#5f9ea0"></div>
<div class="a" style="left:2301.746290801187px;top:189.70px;width:28.753709198812885px;height:21.26px;background:#dda0dd"></div>
<div class="a" style="left:2331.5px;top:189.70px;width:46.476172885112646px;height:21.26px;background:#87ceeb"></div>
<div class="a" style="left:1829.0px;top:210.96px;width:42.0px;height:21.26px;background:#5f9ea0"></div>
<div class="a" style="left:2273.5px;top:210.96px;width:57.0px;height:21.26px;background:#dda0dd"></div>
<div class="a" style="left:2331.5px;top:210.96px;width:47.12781677133353px;height:21.26px;background:#87ceeb"></div>
<div class="a" style="left:1852.8740875912408px;top:232.22px;width:18.125912408759177px;height:21.26px;background:#5f9ea0"></div>
<div class="a" style="left:2307.7144976685036px;top:232.22px;width:22.785502331496446px;height:21.26px;background:#dda0dd"></div>
<div class="a" style="left:2331.5px;top:232.22px;width:22.08607314370147px;height:21.26px;background:#87ceeb"></div>
<div class="a" style="left:1857.9324817518248px;top:253.48px;width:13.067518248175247px;height:21.26px;background:#5f9ea0"></div>
<div class="a" style="left:2310.662356930903px;top:253.48px;width:19.837643069096885px;height:21.26px;background:#dda0dd"></div>
<div class="a" style="left:2331.5px;top:253.48px;width:12.637236793498232px;height:21.26px;background:#87ceeb"></div>
<div class="a" style="left:1863.9680656934306px;top:274.74px;width:7.031934306569383px;height:21.26px;background:#5f9ea0"></div>
<div class="a" style="left:2323.6860958033067px;top:274.74px;width:6.813904196693329px;height:21.26px;background:#dda0dd"></div>
<div class="a" style="left:2331.5px;top:274.74px;width:10.519394163280595px;height:21.26px;background:#87ceeb"></div>
<div class="a" style="left:1848.8599452554745px;top:296.00px;width:22.140054744525514px;height:21.26px;background:#5f9ea0"></div>
<div class="a" style="left:2308.076939381094px;top:296.00px;width:22.42306061890622px;height:21.26px;background:#dda0dd"></div>
<div class="a" style="left:2331.5px;top:296.00px;width:32.18655338012559px;height:21.26px;background:#87ceeb"></div>
<div class="a" style="left:1865.2326642335765px;top:317.26px;width:5.767335766423457px;height:21.26px;background:#5f9ea0"></div>
<div class="a" style="left:2321.511445527766px;top:317.26px;width:8.988554472233773px;height:21.26px;background:#dda0dd"></div>
<div class="a" style="left:2331.5px;top:317.26px;width:5.352789065385878px;height:21.26px;background:#87ceeb"></div>
<div class="a" style="left:1863.1058394160584px;top:338.52px;width:7.894160583941584px;height:21.26px;background:#5f9ea0"></div>
<div class="a" style="left:2322.308817295464px;top:338.52px;width:8.191182704536004px;height:21.26px;background:#dda0dd"></div>
<div class="a" style="left:2331.5px;top:338.52px;width:11.287403029183679px;height:21.26px;background:#87ceeb"></div>
<div class="a" style="left:1866.2960766423357px;top:359.78px;width:4.70392335766428px;height:21.26px;background:#5f9ea0"></div>
<div class="a" style="left:2323.299491309877px;top:359.78px;width:7.200508690123115px;height:21.26px;background:#dda0dd"></div>
<div class="a" style="left:2331.5px;top:359.78px;width:4.491688215736758px;height:21.26px;background:#87ceeb"></div>
<div class="a" style="left:1869.2947080291972px;top:381.04px;width:1.7052919708028185px;height:21.26px;background:#5f9ea0"></div>
<div class="a" style="left:2329.6059771089444px;top:381.04px;width:0.8940228910555561px;height:21.26px;background:#dda0dd"></div>
<div class="a" style="left:2331.5px;top:381.04px;width:1.4429257480605884px;height:21.26px;background:#87ceeb"></div>
<div class="a" style="left:1862.4735401459855px;top:402.30px;width:8.526459854014547px;height:21.26px;background:#5f9ea0"></div>
<div class="a" style="left:1853.602189781022px;top:423.56px;width:17.397810218978066px;height:21.26px;background:#d2691e"></div>
<div class="a" style="left:2320.9073760067827px;top:423.56px;width:9.59262399321733px;height:21.26px;background:#dda0dd"></div>
<div class="a" style="left:2331.5px;top:423.56px;width:16.360916143331906px;height:21.26px;background:#87ceeb"></div>
<div class="a" style="left:1851.599908759124px;top:444.82px;width:19.40009124087601px;height:21.26px;background:#d2691e"></div>
<div class="a" style="left:2319.8442136498516px;top:444.82px;width:10.655786350148446px;height:21.26px;background:#dda0dd"></div>
<div class="a" style="left:2331.5px;top:444.82px;width:12.427779830069994px;height:21.26px;background:#87ceeb"></div>
<div class="a" style="left:1838.0246350364964px;top:466.08px;width:32.97536496350358px;height:21.26px;background:#d2691e"></div>
<div class="a" style="left:2319.602585841458px;top:466.08px;width:10.897414158541778px;height:21.26px;background:#dda0dd"></div>
<div class="a" style="left:2331.5px;top:466.08px;width:8.773919468045733px;height:21.26px;background:#87ceeb"></div>
<div class="a" style="left:1838.4653284671533px;top:487.34px;width:32.53467153284669px;height:21.26px;background:#d2691e"></div>
<div class="a" style="left:2321.028189910979px;top:487.34px;width:9.471810089020892px;height:21.26px;background:#dda0dd"></div>
<div class="a" style="left:2331.5px;top:487.34px;width:28.462874030291914px;height:21.26px;background:#87ceeb"></div>
<div class="a" style="left:1831.0789233576643px;top:508.60px;width:39.92107664233572px;height:21.26px;background:#d2691e"></div>
<div class="a" style="left:2300.417337855023px;top:508.60px;width:30.082662144976894px;height:21.26px;background:#dda0dd"></div>
<div class="a" style="left:2331.5px;top:508.60px;width:21.946435168082644px;height:21.26px;background:#87ceeb"></div>
<div class="a" style="left:1837.0474452554745px;top:529.86px;width:33.952554744525514px;height:21.26px;background:#d2691e"></div>
<div class="a" style="left:2314.866680796948px;top:529.86px;width:15.633319203051997px;height:21.26px;background:#dda0dd"></div>
<div class="a" style="left:2331.5px;top:529.86px;width:24.762467676394408px;height:21.26px;background:#87ceeb"></div>
<div class="a" style="left:1838.4078467153286px;top:551.12px;width:32.59215328467144px;height:21.26px;background:#d2691e"></div>
<div class="a" style="left:2311.12144976685px;top:551.12px;width:19.37855023314978px;height:21.26px;background:#dda0dd"></div>
<div class="a" style="left:2331.5px;top:551.12px;width:20.759512375323084px;height:21.26px;background:#87ceeb"></div>
<div class="a" style="left:1812.2536496350365px;top:572.38px;width:58.74635036496352px;height:21.26px;background:#d2691e"></div>
<div class="a" style="left:2282.440228910555px;top:572.38px;width:48.059771089444894px;height:21.26px;background:#dda0dd"></div>
<div class="a" style="left:2331.5px;top:572.38px;width:45.452161063908534px;height:21.26px;background:#87ceeb"></div>
<div class="a" style="left:1808px;top:593.64px;width:63px;height:21.26px;background:#deb887"></div>
<div class="a" style="left:2280.3863925392116px;top:593.64px;width:50.113607460788444px;height:21.26px;background:#dda0dd"></div>
<div class="a" style="left:2331.5px;top:593.64px;width:63.0px;height:21.26px;background:#87ceeb"></div>
<div class="a" style="left:1818.1359489051094px;top:614.90px;width:52.864051094890556px;height:21.26px;background:#d2691e"></div>
<div class="a" style="left:2274.732301822806px;top:614.90px;width:55.76769817719378px;height:21.26px;background:#dda0dd"></div>
<div class="a" style="left:2331.5px;top:614.90px;width:31.465090506095294px;height:21.26px;background:#87ceeb"></div>
<div class="a" style="left:1828.3293795620439px;top:636.16px;width:42.67062043795613px;height:21.26px;background:#d2691e"></div>
<div class="a" style="left:2297.2761763459093px;top:636.16px;width:33.223823654090666px;height:21.26px;background:#dda0dd"></div>
<div class="a" style="left:2331.5px;top:636.16px;width:53.06243073513133px;height:21.26px;background:#87ceeb"></div>
<div class="a" style="left:1850.7664233576643px;top:657.42px;width:20.23357664233572px;height:21.26px;background:#d2691e"></div>
<div class="a" style="left:2305.805637982196px;top:657.42px;width:24.694362017803996px;height:21.26px;background:#dda0dd"></div>
<div class="a" style="left:2331.5px;top:657.42px;width:12.637236793498232px;height:21.26px;background:#87ceeb"></div>
<div class="a" style="left:1851.3508211678832px;top:678.68px;width:19.64917883211683px;height:21.26px;background:#d2691e"></div>
<div class="a" style="left:2324.942560406952px;top:678.68px;width:5.557439593048002px;height:21.26px;background:#dda0dd"></div>
<div class="a" style="left:2331.5px;top:678.68px;width:21.085334318433524px;height:21.26px;background:#87ceeb"></div>
<div class="a" style="left:1839.4233576642337px;top:699.94px;width:31.576642335766337px;height:21.26px;background:#32cd32"></div>
<div class="a" style="left:2309.864985163205px;top:699.94px;width:20.635014836795108px;height:21.26px;background:#dda0dd"></div>
<div class="a" style="left:2331.5px;top:699.94px;width:22.062800147764847px;height:21.26px;background:#87ceeb"></div>
<div class="a" style="left:1864.4662408759125px;top:721.20px;width:6.53375912408751px;height:21.26px;background:#d2691e"></div>
<div class="a" style="left:2324.4834675710044px;top:721.20px;width:6.016532428995561px;height:21.26px;background:#dda0dd"></div>
<div class="a" style="left:2331.5px;top:721.20px;width:1.047284817140735px;height:21.26px;background:#87ceeb"></div>
<div class="a" style="left:1851.1496350364964px;top:742.46px;width:19.85036496350358px;height:21.26px;background:#d2691e"></div>
<div class="a" style="left:2321.946375582874px;top:742.46px;width:8.553624417125775px;height:21.26px;background:#dda0dd"></div>
<div class="a" style="left:2331.5px;top:742.46px;width:20.387144440339853px;height:21.26px;background:#87ceeb"></div>
<div class="a" style="left:1853.602189781022px;top:763.72px;width:17.397810218978066px;height:21.26px;background:#d2691e"></div>
<div class="a" style="left:2326.561466723188px;top:763.72px;width:3.938533276811995px;height:21.26px;background:#dda0dd"></div>
<div class="a" style="left:2331.5px;top:763.72px;width:9.402290358330447px;height:21.26px;background:#87ceeb"></div>
<div class="a" style="left:2298.72594319627px;top:784.98px;width:31.77405680373022px;height:21.26px;background:#dda0dd"></div>
<div class="a" style="left:2331.5px;top:784.98px;width:29.60325083117823px;height:21.26px;background:#87ceeb"></div>
<div class="a" style="left:2308.1252649427724px;top:806.24px;width:22.374735057227554px;height:21.26px;background:#dda0dd"></div>
<div class="a" style="left:2331.5px;top:806.24px;width:24.902105652013233px;height:21.26px;background:#87ceeb"></div>
<div class="a" style="left:2320.327469266638px;top:827.50px;width:10.172530733361782px;height:21.26px;background:#dda0dd"></div>
<div class="a" style="left:2331.5px;top:827.50px;width:11.310676025119847px;height:21.26px;background:#87ceeb"></div>
<div class="a" style="left:2301.818779143705px;top:848.76px;width:28.681220856295113px;height:21.26px;background:#dda0dd"></div>
<div class="a" style="left:2331.5px;top:848.76px;width:24.273734761728974px;height:21.26px;background:#87ceeb"></div>
<div class="a" style="left:2314.8183552352693px;top:870.02px;width:15.681644764730663px;height:21.26px;background:#dda0dd"></div>
<div class="a" style="left:2331.5px;top:870.02px;width:7.912818618396614px;height:21.26px;background:#87ceeb"></div>
<div class="a" style="left:2325.8365832980076px;top:891.28px;width:4.663416701992446px;height:21.26px;background:#dda0dd"></div>
<div class="a" style="left:2331.5px;top:891.28px;width:1.5825637236794137px;height:21.26px;background:#87ceeb"></div>
<div class="a" style="left:2360px;top:296.00px;width:34px;height:21.26px;background:#ff0"></div>
<div class="a" style="left:1639px;top:83px;width:755px;height:1px;background:#9c9c9c"></div>
<div class="a" style="left:1639px;top:104px;width:755px;height:1px;background:#9c9c9c"></div>
<div class="a" style="left:1639px;top:125px;width:755px;height:1px;background:#9c9c9c"></div>
<div class="a" style="left:1639px;top:147px;width:755px;height:1px;background:#9c9c9c"></div>
<div class="a" style="left:1639px;top:168px;width:755px;height:1px;background:#9c9c9c"></div>
<div class="a" style="left:1639px;top:189px;width:755px;height:1px;background:#9c9c9c"></div>
<div class="a" style="left:1639px;top:210px;width:755px;height:1px;background:#9c9c9c"></div>
<div class="a" style="left:1639px;top:232px;width:755px;height:1px;background:#9c9c9c"></div>
<div class="a" style="left:1639px;top:253px;width:755px;height:1px;background:#9c9c9c"></div>
<div class="a" style="left:1639px;top:274px;width:755px;height:1px;background:#9c9c9c"></div>
<div class="a" style="left:1639px;top:296px;width:755px;height:1px;background:#9c9c9c"></div>
<div class="a" style="left:1639px;top:317px;width:755px;height:1px;background:#9c9c9c"></div>
<div class="a" style="left:1639px;top:338px;width:755px;height:1px;background:#9c9c9c"></div>
<div class="a" style="left:1639px;top:359px;width:755px;height:1px;background:#9c9c9c"></div>
<div class="a" style="left:1639px;top:381px;width:755px;height:1px;background:#9c9c9c"></div>
<div class="a" style="left:1639px;top:402px;width:755px;height:1px;background:#9c9c9c"></div>
<div class="a" style="left:1639px;top:423px;width:755px;height:1px;background:#9c9c9c"></div>
<div class="a" style="left:1639px;top:444px;width:755px;height:1px;background:#9c9c9c"></div>
<div class="a" style="left:1639px;top:466px;width:755px;height:1px;background:#9c9c9c"></div>
<div class="a" style="left:1639px;top:487px;width:755px;height:1px;background:#9c9c9c"></div>
<div class="a" style="left:1639px;top:508px;width:755px;height:1px;background:#9c9c9c"></div>
<div class="a" style="left:1639px;top:529px;width:755px;height:1px;background:#9c9c9c"></div>
<div class="a" style="left:1639px;top:551px;width:755px;height:1px;background:#9c9c9c"></div>
<div class="a" style="left:1639px;top:572px;width:755px;height:1px;background:#9c9c9c"></div>
<div class="a" style="left:1639px;top:593px;width:755px;height:1px;background:#9c9c9c"></div>
<div class="a" style="left:1639px;top:614px;width:755px;height:1px;background:#9c9c9c"></div>
<div class="a" style="left:1639px;top:636px;width:755px;height:1px;background:#9c9c9c"></div>
<div class="a" style="left:1639px;top:657px;width:755px;height:1px;background:#9c9c9c"></div>
<div class="a" style="left:1639px;top:678px;width:755px;height:1px;background:#9c9c9c"></div>
<div class="a" style="left:1639px;top:699px;width:755px;height:1px;background:#9c9c9c"></div>
<div class="a" style="left:1639px;top:721px;width:755px;height:1px;background:#9c9c9c"></div>
<div class="a" style="left:1639px;top:742px;width:755px;height:1px;background:#9c9c9c"></div>
<div class="a" style="left:1639px;top:763px;width:755px;height:1px;background:#9c9c9c"></div>
<div class="a" style="left:1639px;top:784px;width:755px;height:1px;background:#9c9c9c"></div>
<div class="a" style="left:1639px;top:806px;width:755px;height:1px;background:#9c9c9c"></div>
<div class="a" style="left:1639px;top:827px;width:755px;height:1px;background:#9c9c9c"></div>
<div class="a" style="left:1639px;top:848px;width:755px;height:1px;background:#9c9c9c"></div>
<div class="a" style="left:1639px;top:870px;width:755px;height:1px;background:#9c9c9c"></div>
<div class="a" style="left:1639px;top:891px;width:755px;height:1px;background:#9c9c9c"></div>
<div class="a" style="left:1639px;top:912px;width:755px;height:1px;background:#9c9c9c"></div>
<div class="a" style="left:1639px;top:933px;width:755px;height:1px;background:#9c9c9c"></div>
<div class="a" style="left:1639px;top:955px;width:755px;height:1px;background:#9c9c9c"></div>
<div class="a" style="left:1639px;top:976px;width:755px;height:1px;background:#9c9c9c"></div>
<div class="a" style="left:1639px;top:997px;width:755px;height:1px;background:#9c9c9c"></div>
<div class="a" style="left:1639px;top:1018px;width:755px;height:1px;background:#9c9c9c"></div>
<div class="a" style="left:1639px;top:1040px;width:755px;height:1px;background:#9c9c9c"></div>
<div class="a" style="left:1639px;top:1061px;width:755px;height:1px;background:#9c9c9c"></div>
<div class="a" style="left:1639px;top:1082px;width:755px;height:1px;background:#9c9c9c"></div>
<div class="a" style="left:1639px;top:1103px;width:755px;height:1px;background:#9c9c9c"></div>
<div class="a" style="left:1639px;top:1125px;width:755px;height:1px;background:#9c9c9c"></div>
<div class="a" style="left:1639px;top:1146px;width:755px;height:1px;background:#9c9c9c"></div>
<div class="a" style="left:1639px;top:1167px;width:755px;height:1px;background:#9c9c9c"></div>
<div class="a" style="left:1639px;top:1188px;width:755px;height:1px;background:#9c9c9c"></div>
<div class="a" style="left:1639px;top:1210px;width:755px;height:1px;background:#9c9c9c"></div>
<div class="a" style="left:1639px;top:1231px;width:755px;height:1px;background:#9c9c9c"></div>
<div class="a" style="left:1639px;top:1252px;width:755px;height:1px;background:#9c9c9c"></div>
<div class="a" style="left:1743px;top:77.5px;width:1px;height:1172.5px;background:#a0a0a0"></div>
<div class="a" style="left:1807px;top:77.5px;width:1px;height:1172.5px;background:#a0a0a0"></div>
<div class="a" style="left:1871px;top:77.5px;width:1px;height:1172.5px;background:#a0a0a0"></div>
<div class="a" style="left:1944px;top:77.5px;width:1px;height:1172.5px;background:#a0a0a0"></div>
<div class="a" style="left:1998px;top:77.5px;width:1px;height:1172.5px;background:#a0a0a0"></div>
<div class="a" style="left:2051px;top:77.5px;width:1px;height:1172.5px;background:#a0a0a0"></div>
<div class="a" style="left:2105px;top:77.5px;width:1px;height:1172.5px;background:#a0a0a0"></div>
<div class="a" style="left:2159px;top:77.5px;width:1px;height:1172.5px;background:#a0a0a0"></div>
<div class="a" style="left:2213px;top:77.5px;width:1px;height:1172.5px;background:#a0a0a0"></div>
<div class="a" style="left:2266px;top:77.5px;width:1px;height:1172.5px;background:#a0a0a0"></div>
<div class="a" style="left:2330px;top:77.5px;width:1px;height:1172.5px;background:#a0a0a0"></div>
<div class="a" style="left:1639px;top:613.4px;width:755px;height:3px;background:#000"></div>
<div class="a" style="left:1637px;top:1247px;width:759px;height:3px;background:#8a8a8a;border-top:1px solid #c0c0c0"></div>
<div class="dm" style="right:527px;top:82.10px;color:#000;transform:scaleX(1.04);transform-origin:100% 0;">&nbsp;<br>0<br>579<br>1947<br>932<br>3187<br>4384<br>1892<br>1364<br>734<br>2311<br>602<br>824<br>491<br>178<br>890<br>1816<br>2025<br>3442<br>3396<br>4167<br>3544<br>3402<br>6132<br>6576<br>5518<br>4454<br>2112<br>2051<br>3296<br>682<br>2072<br>1816<br>&nbsp;<br>&nbsp;<br>&nbsp;<br>&nbsp;<br>&nbsp;<br>&nbsp;<br>&nbsp;<br>&nbsp;<br>&nbsp;<br>&nbsp;<br>&nbsp;<br>&nbsp;<br>&nbsp;<br>&nbsp;<br>&nbsp;<br>&nbsp;<br>&nbsp;<br>&nbsp;<br>&nbsp;<br>&nbsp;<br>&nbsp;<br>&nbsp;</div>
<div class="dm" style="right:454px;top:82.10px;color:#fff;transform:scaleX(1.04);transform-origin:100% 0;">2098.25<br>2098.00<br>2097.75<br>2097.50<br>2097.25<br>2097.00<br>2096.75<br>2096.50<br>2096.25<br>2096.00<br><span style="color:#000">2095.75</span><br>2095.50<br>2095.25<br>2095.00<br>2094.75<br>2094.50<br>2094.25<br>2094.00<br>2093.75<br>2093.50<br>2093.25<br>2093.00<br>2092.75<br>2092.50<br>2092.25<br>2092.00<br>2091.75<br>2091.50<br>2091.25<br>2091.00<br>2090.75<br>2090.50<br>2090.25<br>2090.00<br>2089.75<br>2089.50<br>2089.25<br>2089.00<br>2088.75<br>2088.50<br>2088.25<br>2088.00<br>2087.75<br>2087.50<br>2087.25<br>2087.00<br>2086.75<br>2086.50<br>2086.25<br>2086.00<br>2085.75<br>2085.50<br>2085.25<br>2085.00<br>2084.75</div>
<div class="dm" style="right:400px;top:82.10px;color:#fff;transform:scaleX(1.04);transform-origin:100% 0;">&nbsp;<br>&nbsp;<br>&nbsp;<br>&nbsp;<br>&nbsp;<br>&nbsp;<br>&nbsp;<br>&nbsp;<br>&nbsp;<br>&nbsp;<br>&nbsp;<br>-53<br>0<br>0<br>0<br>0<br>0<br>&nbsp;<br>&nbsp;<br>&nbsp;<br>&nbsp;<br>&nbsp;<br>&nbsp;<br>&nbsp;<br>&nbsp;<br>&nbsp;<br>&nbsp;<br>&nbsp;<br>&nbsp;<br>&nbsp;<br>&nbsp;<br>&nbsp;<br>&nbsp;<br>&nbsp;<br>&nbsp;<br>&nbsp;<br>&nbsp;<br>&nbsp;<br>&nbsp;<br>&nbsp;<br>&nbsp;<br>&nbsp;<br>&nbsp;<br>&nbsp;<br>&nbsp;<br>&nbsp;<br>&nbsp;<br>&nbsp;<br>&nbsp;<br>&nbsp;<br>&nbsp;<br>&nbsp;<br>&nbsp;<br>&nbsp;<br>&nbsp;</div>
<div class="dm" style="right:346.5px;top:82.10px;color:#fff;transform:scaleX(1.04);transform-origin:100% 0;">&nbsp;<br>&nbsp;<br>&nbsp;<br>&nbsp;<br>&nbsp;<br>&nbsp;<br>&nbsp;<br>&nbsp;<br>&nbsp;<br>&nbsp;<br>&nbsp;<br>8<br>31<br>64<br>36<br>31<br>24<br>44<br>32<br>19<br>36<br>&nbsp;<br>&nbsp;<br>&nbsp;<br>&nbsp;<br>&nbsp;<br>&nbsp;<br>&nbsp;<br>&nbsp;<br>&nbsp;<br>&nbsp;<br>&nbsp;<br>&nbsp;<br>&nbsp;<br>&nbsp;<br>&nbsp;<br>&nbsp;<br>41<br>10<br>25<br>93<br>34<br>65<br>7<br>54<br>53<br>85<br>56<br>27<br>&nbsp;<br>&nbsp;<br>&nbsp;<br>&nbsp;<br>&nbsp;<br>&nbsp;</div>
<div class="dm" style="right:293px;top:82.10px;color:#800000;transform:scaleX(1.04);transform-origin:100% 0;">&nbsp;<br>&nbsp;<br>210<br>800<br>77<br>251<br>391<br>18<br>184<br>40<br>206<br>&nbsp;<br>&nbsp;<br>&nbsp;<br>&nbsp;<br>&nbsp;<br>178<br>96<br>11<br>&nbsp;<br>37<br>420<br>&nbsp;<br>&nbsp;<br>&nbsp;<br>&nbsp;<br>185<br>113<br>&nbsp;<br>42<br>&nbsp;<br>92<br>&nbsp;<br>319<br>17<br>60<br>&nbsp;<br>86<br>&nbsp;<br>&nbsp;<br>&nbsp;<br>&nbsp;<br>&nbsp;<br>&nbsp;<br>&nbsp;<br>&nbsp;<br>&nbsp;<br>&nbsp;<br>&nbsp;<br>&nbsp;<br>&nbsp;<br>&nbsp;<br>&nbsp;<br>&nbsp;<br>&nbsp;</div>
<div class="dm" style="right:239px;top:82.10px;color:#0000ff;transform:scaleX(1.04);transform-origin:100% 0;">&nbsp;<br>&nbsp;<br>369<br>&nbsp;<br>96<br>687<br>165<br>&nbsp;<br>&nbsp;<br>&nbsp;<br>58<br>69<br>94<br>73<br>62<br>3<br>169<br>69<br>141<br>120<br>133<br>21<br>98<br>209<br>&nbsp;<br>25<br>240<br>194<br>430<br>75<br>6<br>69<br>200<br>374<br>313<br>160<br>344<br>30<br>68<br>&nbsp;<br>&nbsp;<br>&nbsp;<br>&nbsp;<br>&nbsp;<br>&nbsp;<br>&nbsp;<br>&nbsp;<br>&nbsp;<br>&nbsp;<br>&nbsp;<br>&nbsp;<br>&nbsp;<br>&nbsp;<br>&nbsp;<br>&nbsp;</div>
<div class="dm" style="right:185px;top:82.10px;color:#fff;transform:scaleX(1.04);transform-origin:100% 0;">42<br>33<br>3<br>12<br>21<br>99<br>43<br>38<br>36<br>80<br>4<br>&nbsp;<br>&nbsp;<br>&nbsp;<br>&nbsp;<br>&nbsp;<br>&nbsp;<br>&nbsp;<br>&nbsp;<br>&nbsp;<br>&nbsp;<br>&nbsp;<br>&nbsp;<br>&nbsp;<br>&nbsp;<br>&nbsp;<br>&nbsp;<br>&nbsp;<br>&nbsp;<br>&nbsp;<br>&nbsp;<br>&nbsp;<br>&nbsp;<br>&nbsp;<br>&nbsp;<br>&nbsp;<br>&nbsp;<br>&nbsp;<br>&nbsp;<br>&nbsp;<br>&nbsp;<br>&nbsp;<br>&nbsp;<br>&nbsp;<br>&nbsp;<br>&nbsp;<br>&nbsp;<br>&nbsp;<br>&nbsp;<br>&nbsp;<br>&nbsp;<br>&nbsp;<br>&nbsp;<br>&nbsp;<br>&nbsp;</div>
<div class="dm" style="right:131.5px;top:82.10px;color:#fff;transform:scaleX(1.04);transform-origin:100% 0;">&nbsp;<br>&nbsp;<br>&nbsp;<br>&nbsp;<br>&nbsp;<br>0<br>0<br>0<br>0<br>0<br>-30<br>&nbsp;<br>&nbsp;<br>&nbsp;<br>&nbsp;<br>&nbsp;<br>&nbsp;<br>&nbsp;<br>&nbsp;<br>&nbsp;<br>&nbsp;<br>&nbsp;<br>&nbsp;<br>&nbsp;<br>&nbsp;<br>&nbsp;<br>&nbsp;<br>&nbsp;<br>&nbsp;<br>&nbsp;<br>&nbsp;<br>&nbsp;<br>&nbsp;<br>&nbsp;<br>&nbsp;<br>&nbsp;<br>&nbsp;<br>&nbsp;<br>&nbsp;<br>&nbsp;<br>&nbsp;<br>&nbsp;<br>&nbsp;<br>&nbsp;<br>&nbsp;<br>&nbsp;<br>&nbsp;<br>&nbsp;<br>&nbsp;<br>&nbsp;<br>&nbsp;<br>&nbsp;<br>&nbsp;<br>&nbsp;<br>&nbsp;</div>
<div class="dm" style="right:67.5px;top:82.10px;color:#800000;transform:scaleX(1.04);transform-origin:100% 0;">&nbsp;<br>&nbsp;<br>210<br>1207<br>507<br>1190<br>2359<br>943<br>821<br>282<br>928<br>372<br>339<br>298<br>37<br>&nbsp;<br>397<br>441<br>451<br>392<br>1245<br>647<br>802<br>1989<br>2074<br>2308<br>1375<br>1022<br>230<br>854<br>249<br>354<br>163<br>1315<br>926<br>421<br>1187<br>649<br>193<br>0<br>&nbsp;<br>&nbsp;<br>&nbsp;<br>&nbsp;<br>&nbsp;<br>&nbsp;<br>&nbsp;<br>&nbsp;<br>&nbsp;<br>&nbsp;<br>&nbsp;<br>&nbsp;<br>&nbsp;<br>&nbsp;<br>&nbsp;</div>
<div class="dm" style="right:4px;top:82.10px;color:#0000ff;transform:scaleX(1.04);transform-origin:100% 0;">&nbsp;<br>0<br>369<br>740<br>425<br>1997<br>2025<br>949<br>543<br>452<br>1383<br>230<br>485<br>193<br>62<br>3<br>703<br>534<br>377<br>1223<br>943<br>1064<br>892<br>1953<br>2707<br>1352<br>2280<br>543<br>906<br>948<br>45<br>876<br>404<br>1272<br>1070<br>486<br>1043<br>340<br>68<br>&nbsp;<br>&nbsp;<br>&nbsp;<br>&nbsp;<br>&nbsp;<br>&nbsp;<br>&nbsp;<br>&nbsp;<br>&nbsp;<br>&nbsp;<br>&nbsp;<br>&nbsp;<br>&nbsp;<br>&nbsp;<br>&nbsp;<br>&nbsp;</div>
<div class="a" style="left:603px;top:768px;width:555px;height:482px;background:#aaa;border-left:1px solid #999"></div>
<div class="a" style="left:603px;top:768px;width:555px;height:38px;background:#fff"></div>
<svg class="a" style="left:613px;top:777px" width="20" height="20" viewBox="0 0 20 20"><rect x="1" y="1" width="18" height="18" fill="#dfe6f0" stroke="#99a"/><path d="M1 7H19M1 13H19M7 1V19M13 1V19" stroke="#bcc" stroke-width="1"/><path d="M3 14L8 8L12 11L18 3" stroke="#2a9a30" stroke-width="1.6" fill="none"/><path d="M3 17L8 12L12 14L18 9" stroke="#2a5ad0" stroke-width="1.4" fill="none"/></svg>
<div class="tt" style="left:638px;top:778px">ES 12-16 (150 Tick)&nbsp;&nbsp;03.11.2016</div>
<div class="a" style="left:603px;top:806px;width:555px;height:31px;background:linear-gradient(#fbfbfb,#f0f0f0)"></div>
<div class="a" style="left:607px;top:811px;width:2px;height:2px;background:#aaa"></div><div class="a" style="left:607px;top:815px;width:2px;height:2px;background:#aaa"></div><div class="a" style="left:607px;top:819px;width:2px;height:2px;background:#aaa"></div><div class="a" style="left:607px;top:823px;width:2px;height:2px;background:#aaa"></div><div class="a" style="left:607px;top:827px;width:2px;height:2px;background:#aaa"></div>
<div class="a" style="left:618px;top:813px;width:1px;height:18px;background:#aaa"></div>
<div class="t" style="left:628px;top:812px;font-size:15px;color:#111;transform:scaleX(.885);transform-origin:0 0">ES 12-16</div>
<svg class="a" style="left:689px;top:819px" width="10" height="6" viewBox="0 0 10 6"><path d="M0 0H9L4.5 5Z" fill="#111"/></svg>
<div class="t" style="left:708px;top:812px;font-size:15px;color:#111">150 Tick</div>
<svg class="a" style="left:766px;top:819px" width="10" height="6" viewBox="0 0 10 6"><path d="M0 0H9L4.5 5Z" fill="#111"/></svg>
<div class="a" style="left:784px;top:813px;width:1px;height:18px;background:#aaa"></div>
<svg class="a" style="left:791px;top:811px" width="22" height="22" viewBox="0 0 22 22"><rect x="1" y="2" width="4" height="17" rx="2" fill="#3c3" stroke="#222"/><rect x="7" y="1" width="4" height="18" rx="2" fill="#3c3" stroke="#222"/><rect x="13" y="2" width="4" height="17" rx="2" fill="#e33" stroke="#222"/></svg>
<svg class="a" style="left:815px;top:819px" width="10" height="6" viewBox="0 0 10 6"><path d="M0 0H9L4.5 5Z" fill="#111"/></svg>
<svg class="a" style="left:827px;top:811px" width="22" height="22" viewBox="0 0 22 22"><path d="M3 19L17 4" stroke="#e8c020" stroke-width="5"/><path d="M16 3L19 6" stroke="#e44" stroke-width="4"/></svg>
<svg class="a" style="left:851px;top:819px" width="10" height="6" viewBox="0 0 10 6"><path d="M0 0H9L4.5 5Z" fill="#111"/></svg>
<svg class="a" style="left:863px;top:810px" width="24" height="24" viewBox="0 0 24 24"><circle cx="12" cy="12" r="6" fill="#9bd"/><path d="M4 20L9 15" stroke="#555" stroke-width="3"/><path d="M16 5H22M19 2V8" stroke="#2a2" stroke-width="2.5"/></svg>
<svg class="a" style="left:892px;top:810px" width="24" height="24" viewBox="0 0 24 24"><circle cx="12" cy="12" r="6" fill="#ccc"/><path d="M4 20L9 15" stroke="#bbb" stroke-width="3"/><path d="M16 5H22" stroke="#bbb" stroke-width="2.5"/></svg>
<div class="a" style="left:922px;top:813px;width:1px;height:18px;background:#aaa"></div>
<svg class="a" style="left:929px;top:811px" width="20" height="20" viewBox="0 0 20 20"><path d="M2 2L2 14L5 11L9 18L11 17L8 10H12Z" fill="#fff" stroke="#333"/></svg>
<svg class="a" style="left:952px;top:819px" width="10" height="6" viewBox="0 0 10 6"><path d="M0 0H9L4.5 5Z" fill="#111"/></svg>
<svg class="a" style="left:965px;top:811px" width="20" height="22" viewBox="0 0 20 22"><rect x="1" y="1" width="18" height="19" fill="#fff" stroke="#555"/><circle cx="11" cy="10" r="5" fill="#8bd"/><path d="M2 19L6 15" stroke="#444" stroke-width="2"/></svg>
<div class="a" style="left:994px;top:813px;width:1px;height:18px;background:#aaa"></div>
<svg class="a" style="left:1001px;top:811px" width="24" height="22" viewBox="0 0 24 22"><path d="M2 3H10L14 6L10 8H2Z" fill="#3c3"/><path d="M2 12H10L14 14L10 17H2Z" fill="#e33"/><rect x="12" y="3" width="3" height="18" fill="#3c3"/><rect x="17" y="11" width="3" height="10" fill="#e33"/></svg>
<svg class="a" style="left:1030px;top:811px" width="22" height="22" viewBox="0 0 22 22"><rect x="1" y="1" width="20" height="20" fill="#eee" stroke="#777"/><rect x="4" y="4" width="3" height="13" fill="#3c3"/><rect x="9" y="2" width="3" height="12" fill="#3c3"/><rect x="14" y="6" width="3" height="12" fill="#e33"/></svg>
<svg class="a" style="left:1059px;top:811px" width="22" height="22" viewBox="0 0 22 22"><rect x="1" y="1" width="20" height="20" fill="#ddd" stroke="#888"/><path d="M3 10L8 5L12 8L19 4" stroke="#3a3" fill="none"/><path d="M3 14L8 10L12 13L19 10" stroke="#e33" fill="none"/></svg>
<svg class="a" style="left:1089px;top:811px" width="18" height="22" viewBox="0 0 18 22"><path d="M1 1H12L16 5V21H1Z" fill="#fff" stroke="#888"/><text x="8.5" y="16" text-anchor="middle" font-family="Liberation Sans" font-weight="bold" font-size="13" fill="#2a9a30">$</text></svg>
<svg class="a" style="left:1117px;top:811px" width="20" height="22" viewBox="0 0 20 22"><rect x="1" y="1" width="18" height="20" fill="#eef" stroke="#889"/><rect x="3" y="3" width="14" height="3" fill="#4ad"/><rect x="3" y="8" width="3" height="10" fill="#a8e"/></svg>
<div class="a" style="left:620.3px;top:848px;width:2px;height:402px;background:#d4d4d4"></div>
<div class="a" style="left:705.2px;top:848px;width:2px;height:402px;background:#d4d4d4"></div>
<div class="a" style="left:790.3px;top:848px;width:2px;height:402px;background:#d4d4d4"></div>
<div class="a" style="left:875.5px;top:848px;width:2px;height:402px;background:#d4d4d4"></div>
<div class="a" style="left:960.6px;top:848px;width:2px;height:402px;background:#d4d4d4"></div>
<div class="a" style="left:1045.5px;top:848px;width:2px;height:402px;background:#d4d4d4"></div>
<div class="a" style="left:1130.7px;top:848px;width:2px;height:402px;background:#d4d4d4"></div>
<div class="a" style="left:604px;top:885.4px;width:554px;height:2px;background:#d4d4d4"></div>
<div class="a" style="left:604px;top:1029.4px;width:554px;height:2px;background:#d4d4d4"></div>
<div class="a" style="left:604px;top:1172.3px;width:554px;height:2px;background:#d4d4d4"></div>
<div class="t" style="left:607px;top:845px;font-size:14px;color:#222;letter-spacing:-0.1px">Depth&amp;Sales V5.5, Depth&amp;Sales Live V5.5, Recon Tape V5.5, Summary Tape V5.5</div>
<div class="a" style="left:620.6px;top:1077.4px;width:1.5px;height:48.0px;background:#222"></div>
<div class="a" style="left:614.4px;top:1124.65px;width:14px;height:1.5px;background:#222"></div>
<div class="a" style="left:641.9px;top:1030.4px;width:1.5px;height:143.0px;background:#222"></div>
<div class="a" style="left:636.2px;top:1077.4px;width:13px;height:48.0px;background:#90ee90;border:1.5px solid #111"></div>
<div class="a" style="left:663.2px;top:1030.4px;width:1.5px;height:95.0px;background:#222"></div>
<div class="a" style="left:657.4px;top:1030.4px;width:13px;height:47.0px;background:#90ee90;border:1.5px solid #111"></div>
<div class="a" style="left:678.7px;top:933.9px;width:13px;height:96.5px;background:#90ee90;border:1.5px solid #111"></div>
<div class="a" style="left:705.7px;top:933.9px;width:1.5px;height:48.0px;background:#222"></div>
<div class="a" style="left:699.4px;top:933.15px;width:14px;height:1.5px;background:#222"></div>
<div class="a" style="left:721.2px;top:933.9px;width:13px;height:96.5px;background:#f00;border:1.5px solid #111"></div>
<div class="a" style="left:748.2px;top:933.9px;width:1.5px;height:191.5px;background:#222"></div>
<div class="a" style="left:742.5px;top:933.9px;width:13px;height:96.5px;background:#90ee90;border:1.5px solid #111"></div>
<div class="a" style="left:769.5px;top:886.4px;width:1.5px;height:95.5px;background:#222"></div>
<div class="a" style="left:763.7px;top:933.9px;width:13px;height:48.0px;background:#f00;border:1.5px solid #111"></div>
<div class="a" style="left:790.7px;top:933.9px;width:1.5px;height:286.1px;background:#222"></div>
<div class="a" style="left:785.0px;top:981.9px;width:13px;height:238.1px;background:#f00;border:1.5px solid #111"></div>
<div class="a" style="left:812.0px;top:1125.4px;width:1.5px;height:94.6px;background:#222"></div>
<div class="a" style="left:805.7px;top:1219.25px;width:14px;height:1.5px;background:#222"></div>
<div class="a" style="left:833.2px;top:1173.4px;width:1.5px;height:94.6px;background:#222"></div>
<div class="a" style="left:827.5px;top:1173.4px;width:13px;height:46.6px;background:#90ee90;border:1.5px solid #111"></div>
<div class="a" style="left:848.8px;top:1173.4px;width:13px;height:94.6px;background:#f00;border:1.5px solid #111"></div>
<div class="a" style="left:1040.1px;top:1220px;width:13px;height:48.0px;background:#90ee90;border:1.5px solid #111"></div>
<div class="a" style="left:1067.1px;top:1077.4px;width:1.5px;height:142.6px;background:#222"></div>
<div class="a" style="left:1061.4px;top:1125.4px;width:13px;height:94.6px;background:#90ee90;border:1.5px solid #111"></div>
<div class="a" style="left:1082.6px;top:1125.4px;width:13px;height:142.6px;background:#f00;border:1.5px solid #111"></div>
<div class="a" style="left:1103.9px;top:1173.4px;width:13px;height:94.6px;background:#90ee90;border:1.5px solid #111"></div>
<div class="a" style="left:1130.9px;top:1077.4px;width:1.5px;height:142.6px;background:#222"></div>
<div class="a" style="left:1125.1px;top:1077.4px;width:13px;height:96.0px;background:#90ee90;border:1.5px solid #111"></div>
<div class="a" style="left:1152.2px;top:1030.4px;width:1.5px;height:143.0px;background:#222"></div>
<div class="a" style="left:1146.4px;top:1077.4px;width:13px;height:96.0px;background:#f00;border:1.5px solid #111"></div>
<div class="a" style="left:1158px;top:768px;width:715px;height:482px;background:#f0f0f0;border-left:1px solid #aaa;border-right:1px solid #999"></div>
<div class="a" style="left:1158px;top:768px;width:715px;height:40px;background:#fff"></div>
<div class="tt" style="left:1168px;top:778px;font-size:15px;color:#888">Indicators</div>
<div class="a" style="left:1846px;top:779px;width:24px;height:24px;background:#e6e6e6"></div>
<svg class="a" style="left:1852px;top:785px" width="12" height="12" viewBox="0 0 12 12"><path d="M2 2L10 10M10 2L2 10" stroke="#fff" stroke-width="1.2"/></svg>
<div class="a" style="left:1158px;top:807px;width:715px;height:3px;background:#8a8a8a"></div>
<div class="a" style="left:1158px;top:807px;width:3px;height:443px;background:#8a8a8a"></div>
<div class="a" style="left:1870px;top:807px;width:2px;height:443px;background:#8a8a8a"></div>
<div class="a" style="left:1130px;top:768px;width:28px;height:38px;background:linear-gradient(90deg,rgba(255,255,255,0),#e8e8e8)"></div>
<div class="a" style="left:1161px;top:811px;width:313px;height:263px;background:#fff;border:1px solid #828790"></div>
<div class="t" style="left:1168px;top:811px;font-size:14px;line-height:16.3px;color:#000;letter-spacing:-0.2px"><span style="font-size:12px;font-weight:bold;vertical-align:top;line-height:12px;position:relative;top:2px">*</span> Elite Cycles™ 1 <span style="font-size:12px;font-weight:bold;vertical-align:top;line-height:12px;position:relative;top:2px">*</span><br><span style="font-size:12px;font-weight:bold;vertical-align:top;line-height:12px;position:relative;top:2px">*</span> Elite Cycles™ 1 Market Analyzer <span style="font-size:12px;font-weight:bold;vertical-align:top;line-height:12px;position:relative;top:2px">*</span><br><span style="font-size:12px;font-weight:bold;vertical-align:top;line-height:12px;position:relative;top:2px">*</span> Elite Cycles™ 2 <span style="font-size:12px;font-weight:bold;vertical-align:top;line-height:12px;position:relative;top:2px">*</span><br><span style="font-size:12px;font-weight:bold;vertical-align:top;line-height:12px;position:relative;top:2px">*</span> Elite Exits™ <span style="font-size:12px;font-weight:bold;vertical-align:top;line-height:12px;position:relative;top:2px">*</span><br><span style="font-size:12px;font-weight:bold;vertical-align:top;line-height:12px;position:relative;top:2px">*</span> Elite Exits™ Market Analyzer <span style="font-size:12px;font-weight:bold;vertical-align:top;line-height:12px;position:relative;top:2px">*</span><br><span style="font-size:12px;font-weight:bold;vertical-align:top;line-height:12px;position:relative;top:2px">*</span> Elite FIBs™ <span style="font-size:12px;font-weight:bold;vertical-align:top;line-height:12px;position:relative;top:2px">*</span><br><span style="font-size:12px;font-weight:bold;vertical-align:top;line-height:12px;position:relative;top:2px">*</span> Elite Oscillator™ <span style="font-size:12px;font-weight:bold;vertical-align:top;line-height:12px;position:relative;top:2px">*</span><br><span style="font-size:12px;font-weight:bold;vertical-align:top;line-height:12px;position:relative;top:2px">*</span> Elite Oscillator™ Market Analyzer <span style="font-size:12px;font-weight:bold;vertical-align:top;line-height:12px;position:relative;top:2px">*</span><br><span style="font-size:12px;font-weight:bold;vertical-align:top;line-height:12px;position:relative;top:2px">*</span> Elite Oscillator™ PaintBar <span style="font-size:12px;font-weight:bold;vertical-align:top;line-height:12px;position:relative;top:2px">*</span><br><span style="font-size:12px;font-weight:bold;vertical-align:top;line-height:12px;position:relative;top:2px">*</span> Elite Reversals™ <span style="font-size:12px;font-weight:bold;vertical-align:top;line-height:12px;position:relative;top:2px">*</span><br><span style="font-size:12px;font-weight:bold;vertical-align:top;line-height:12px;position:relative;top:2px">*</span> Elite Reversals™ Syed <span style="font-size:12px;font-weight:bold;vertical-align:top;line-height:12px;position:relative;top:2px">*</span><br><span style="font-size:12px;font-weight:bold;vertical-align:top;line-height:12px;position:relative;top:2px">*</span> Elite Scalper Dots™ <span style="font-size:12px;font-weight:bold;vertical-align:top;line-height:12px;position:relative;top:2px">*</span><br><span style="font-size:12px;font-weight:bold;vertical-align:top;line-height:12px;position:relative;top:2px">*</span> Elite Scalper Dots™ Market Analyzer <span style="font-size:12px;font-weight:bold;vertical-align:top;line-height:12px;position:relative;top:2px">*</span><br><span style="font-size:12px;font-weight:bold;vertical-align:top;line-height:12px;position:relative;top:2px">*</span> Elite Targets™ <span style="font-size:12px;font-weight:bold;vertical-align:top;line-height:12px;position:relative;top:2px">*</span><br><span style="font-size:12px;font-weight:bold;vertical-align:top;line-height:12px;position:relative;top:2px">*</span> Elite Targets™ Market Analyzer <span style="font-size:12px;font-weight:bold;vertical-align:top;line-height:12px;position:relative;top:2px">*</span><br><span style="font-size:12px;font-weight:bold;vertical-align:top;line-height:12px;position:relative;top:2px">*</span> Elite Trailing Stop <span style="font-size:12px;font-weight:bold;vertical-align:top;line-height:12px;position:relative;top:2px">*</span></div>
<div class="a" style="left:1452px;top:812px;width:21px;height:261px;background:#f0f0f0"></div>
<div class="a" style="left:1454px;top:833px;width:17px;height:24px;background:#cdcdcd"></div>
<svg class="a" style="left:1456px;top:816px" width="12" height="8" viewBox="0 0 12 8"><path d="M1 7L6 2L11 7" stroke="#555" stroke-width="1.6" fill="none"/></svg>
<svg class="a" style="left:1456px;top:1058px" width="12" height="8" viewBox="0 0 12 8"><path d="M1 1L6 6L11 1" stroke="#555" stroke-width="1.6" fill="none"/></svg>
<div class="a" style="left:1161px;top:1080px;width:313px;height:153px;background:#fff;border:1px solid #828790"></div>
<div class="a" style="left:1163px;top:1083px;width:309px;height:16px;background:#0078d7"></div>
<div class="t" style="left:1165px;top:1082px;font-size:14px;line-height:16.3px;color:#000;letter-spacing:-0.2px"><span style="color:#fff">Depth&amp;Sales V5.5</span><br>Depth&amp;Sales Live V5.5<br>Recon Tape V5.5<br>Summary Tape V5.5</div>
<div class="a" style="left:1545px;top:811px;width:322px;height:400px;background:#c8c8c8;border:1px solid #828790"></div>
<svg class="a" style="left:1549px;top:816.0px" width="11" height="11" viewBox="0 0 11 11"><rect x="0.5" y="0.5" width="10" height="10" fill="#fff" stroke="#555"/><path d="M2.5 5.5H8.5" stroke="#222"/></svg>
<div class="t" style="left:1566px;top:812.0px;font-size:15px;font-weight:bold;color:#111">Data</div>
<div class="a" style="left:1563px;top:831.0px;width:133px;height:19.1px;background:#fff"></div>
<div class="a" style="left:1697px;top:831.0px;width:148px;height:19.1px;background:#fff"></div>
<div class="a" style="left:1566px;top:832.0px;width:129px;height:19px;font-size:14px;color:#111;white-space:pre">Calculate on bar clos</div>
<div class="a" style="left:1701px;top:832.0px;width:144px;height:19px;font-size:14.5px;font-weight:bold;color:#111;white-space:pre">False</div>
<div class="a" style="left:1563px;top:851.1px;width:133px;height:19.1px;background:#fff"></div>
<div class="a" style="left:1697px;top:851.1px;width:148px;height:19.1px;background:#fff"></div>
<div class="a" style="left:1566px;top:852.1px;width:129px;height:19px;font-size:14px;color:#111;white-space:pre">Input series</div>
<div class="a" style="left:1701px;top:852.1px;width:144px;height:19px;font-size:14.5px;font-weight:bold;color:#111;white-space:pre">ES 12-16 (150 Tick)</div>
<div class="a" style="left:1563px;top:871.1px;width:133px;height:19.1px;background:#fff"></div>
<div class="a" style="left:1697px;top:871.1px;width:148px;height:19.1px;background:#fff"></div>
<div class="a" style="left:1566px;top:872.1px;width:129px;height:19px;font-size:14px;color:#111;white-space:pre">Maximum bars look l</div>
<div class="a" style="left:1701px;top:872.1px;width:144px;height:19px;font-size:14.5px;font-weight:bold;color:#111;white-space:pre">TwoHundredFiftySix</div>
<svg class="a" style="left:1549px;top:896.2px" width="11" height="11" viewBox="0 0 11 11"><rect x="0.5" y="0.5" width="10" height="10" fill="#fff" stroke="#555"/><path d="M2.5 5.5H8.5" stroke="#222"/></svg>
<div class="t" style="left:1566px;top:892.2px;font-size:15px;font-weight:bold;color:#111">Visual</div>
<div class="a" style="left:1563px;top:911.2px;width:133px;height:19.1px;background:#fff"></div>
<div class="a" style="left:1697px;top:911.2px;width:148px;height:19.1px;background:#fff"></div>
<div class="a" style="left:1566px;top:912.2px;width:129px;height:19px;font-size:14px;color:#111;white-space:pre">Auto scale</div>
<div class="a" style="left:1701px;top:912.2px;width:144px;height:19px;font-size:14.5px;font-weight:bold;color:#111;white-space:pre">True</div>
<div class="a" style="left:1563px;top:931.3px;width:133px;height:19.1px;background:#fff"></div>
<div class="a" style="left:1697px;top:931.3px;width:148px;height:19.1px;background:#fff"></div>
<div class="a" style="left:1566px;top:932.3px;width:129px;height:19px;font-size:14px;color:#111;white-space:pre">Displacement</div>
<div class="a" style="left:1701px;top:932.3px;width:144px;height:19px;font-size:14.5px;font-weight:bold;color:#111;white-space:pre">0</div>
<div class="a" style="left:1563px;top:951.4px;width:133px;height:19.1px;background:#fff"></div>
<div class="a" style="left:1697px;top:951.4px;width:148px;height:19.1px;background:#fff"></div>
<div class="a" style="left:1566px;top:952.4px;width:129px;height:19px;font-size:14px;color:#111;white-space:pre">Display in Data Box</div>
<div class="a" style="left:1701px;top:952.4px;width:144px;height:19px;font-size:14.5px;font-weight:bold;color:#111;white-space:pre">False</div>
<div class="a" style="left:1563px;top:971.4px;width:133px;height:19.1px;background:#c8c8c8"></div>
<div class="a" style="left:1697px;top:971.4px;width:148px;height:19.1px;background:#fff"></div>
<div class="a" style="left:1566px;top:972.4px;width:129px;height:19px;font-size:14px;color:#111;white-space:pre">Label</div>
<div class="a" style="left:1701px;top:972.4px;width:144px;height:19px;font-size:14.5px;font-weight:bold;color:#111;white-space:pre">JT_v5_DepthSales</div>
<div class="a" style="left:1563px;top:991.5px;width:133px;height:19.1px;background:#fff"></div>
<div class="a" style="left:1697px;top:991.5px;width:148px;height:19.1px;background:#fff"></div>
<div class="a" style="left:1566px;top:992.5px;width:129px;height:19px;font-size:14px;color:#111;white-space:pre">Panel</div>
<div class="a" style="left:1701px;top:992.5px;width:144px;height:19px;font-size:14.5px;font-weight:bold;color:#111;white-space:pre">Same as input series</div>
<div class="a" style="left:1563px;top:1011.5px;width:133px;height:19.1px;background:#fff"></div>
<div class="a" style="left:1697px;top:1011.5px;width:148px;height:19.1px;background:#fff"></div>
<div class="a" style="left:1566px;top:1012.5px;width:129px;height:19px;font-size:14px;color:#111;white-space:pre">Price marker(s)</div>
<div class="a" style="left:1701px;top:1012.5px;width:144px;height:19px;font-size:14.5px;font-weight:bold;color:#111;white-space:pre">False</div>
<div class="a" style="left:1563px;top:1031.5px;width:133px;height:19.1px;background:#fff"></div>
<div class="a" style="left:1697px;top:1031.5px;width:148px;height:19.1px;background:#fff"></div>
<div class="a" style="left:1566px;top:1032.5px;width:129px;height:19px;font-size:14px;color:#111;white-space:pre">Scale justification</div>
<div class="a" style="left:1701px;top:1032.5px;width:144px;height:19px;font-size:14.5px;font-weight:bold;color:#111;white-space:pre">Right</div>
<svg class="a" style="left:1549px;top:1056.6px" width="11" height="11" viewBox="0 0 11 11"><rect x="0.5" y="0.5" width="10" height="10" fill="#fff" stroke="#555"/><path d="M2.5 5.5H8.5" stroke="#222"/></svg>
<div class="t" style="left:1566px;top:1052.6px;font-size:15px;font-weight:bold;color:#111">Разное</div>
<div class="a" style="left:1563px;top:1071.7px;width:133px;height:19.1px;background:#fff"></div>
<div class="a" style="left:1697px;top:1071.7px;width:148px;height:19.1px;background:#fff"></div>
<div class="a" style="left:1566px;top:1072.7px;width:129px;height:19px;font-size:14px;color:#111;white-space:pre">ATMStrategyName</div>
<div class="a" style="left:1701px;top:1072.7px;width:144px;height:19px;font-size:14.5px;font-weight:bold;color:#111;white-space:pre"></div>
<div class="a" style="left:1563px;top:1091.7px;width:133px;height:19.1px;background:#fff"></div>
<div class="a" style="left:1697px;top:1091.7px;width:148px;height:19.1px;background:#fff"></div>
<div class="a" style="left:1566px;top:1092.7px;width:129px;height:19px;font-size:14px;color:#111;white-space:pre">ATMStrategyState</div>
<div class="a" style="left:1701px;top:1092.7px;width:144px;height:19px;font-size:14.5px;font-weight:bold;color:#111;white-space:pre">False</div>
<div class="a" style="left:1563px;top:1111.8px;width:133px;height:19.1px;background:#fff"></div>
<div class="a" style="left:1697px;top:1111.8px;width:148px;height:19.1px;background:#fff"></div>
<div class="a" style="left:1566px;top:1112.8px;width:129px;height:19px;font-size:14px;color:#111;white-space:pre">ChartInterval</div>
<div class="a" style="left:1701px;top:1112.8px;width:144px;height:19px;font-size:14.5px;font-weight:bold;color:#111;white-space:pre">0</div>
<div class="a" style="left:1563px;top:1131.8px;width:133px;height:19.1px;background:#fff"></div>
<div class="a" style="left:1697px;top:1131.8px;width:148px;height:19.1px;background:#fff"></div>
<div class="a" style="left:1566px;top:1132.8px;width:129px;height:19px;font-size:14px;color:#111;white-space:pre">ChartIntervalWidth</div>
<div class="a" style="left:1701px;top:1132.8px;width:144px;height:19px;font-size:14.5px;font-weight:bold;color:#111;white-space:pre">0</div>
<div class="a" style="left:1563px;top:1151.8px;width:133px;height:19.1px;background:#fff"></div>
<div class="a" style="left:1697px;top:1151.8px;width:148px;height:19.1px;background:#fff"></div>
<div class="a" style="left:1566px;top:1152.8px;width:129px;height:19px;font-size:14px;color:#111;white-space:pre">ChartIsOpen</div>
<div class="a" style="left:1701px;top:1152.8px;width:144px;height:19px;font-size:14.5px;font-weight:bold;color:#111;white-space:pre">False</div>
<div class="a" style="left:1563px;top:1171.9px;width:133px;height:19.1px;background:#fff"></div>
<div class="a" style="left:1697px;top:1171.9px;width:148px;height:19.1px;background:#fff"></div>
<div class="a" style="left:1566px;top:1172.9px;width:129px;height:19px;font-size:14px;color:#888;white-space:pre">CurrentAppearance</div>
<div class="a" style="left:1701px;top:1172.9px;width:144px;height:19px;font-size:14.5px;font-weight:bold;color:#888;white-space:pre">JigsawTrading.JTDepthSales</div>
<div class="a" style="left:1563px;top:1192.0px;width:133px;height:19.1px;background:#fff"></div>
<div class="a" style="left:1697px;top:1192.0px;width:148px;height:19.1px;background:#fff"></div>
<div class="a" style="left:1566px;top:1193.0px;width:129px;height:19px;font-size:14px;color:#111;white-space:pre">DisplaySchemeV5</div>
<div class="a" style="left:1701px;top:1193.0px;width:144px;height:19px;font-size:14.5px;font-weight:bold;color:#111;white-space:pre">Default</div>
<div class="a" style="left:1846px;top:812px;width:20px;height:398px;background:#f0f0f0"></div>
<div class="a" style="left:1848px;top:832px;width:16px;height:290px;background:#cdcdcd"></div>
<svg class="a" style="left:1850px;top:815px" width="12" height="8" viewBox="0 0 12 8"><path d="M1 7L6 2L11 7" stroke="#555" stroke-width="1.6" fill="none"/></svg>
<svg class="a" style="left:1850px;top:1195px" width="12" height="8" viewBox="0 0 12 8"><path d="M1 1L6 6L11 1" stroke="#555" stroke-width="1.6" fill="none"/></svg>
<div class="a" style="left:1545px;top:1213px;width:322px;height:37px;background:#f0f0f0;border:1px solid #ccc"></div>
<div class="t" style="left:1551px;top:1217px;font-size:15px;font-weight:bold;color:#111">Label</div>
<div class="t" style="left:1551px;top:1234px;font-size:14px;color:#111">Depth and Sales. Market Depth with an</div>
<div class="t" style="left:634px;top:1181px;font-family:'Liberation Serif',serif;font-style:italic;font-size:40px;color:#ee2a33;letter-spacing:0.6px;text-shadow:0 0 3px #fff,0 0 5px #fff">www.forex-warez.com, andreybbrv@gmail.com, Skype: andreybbrv</div></body></html>
